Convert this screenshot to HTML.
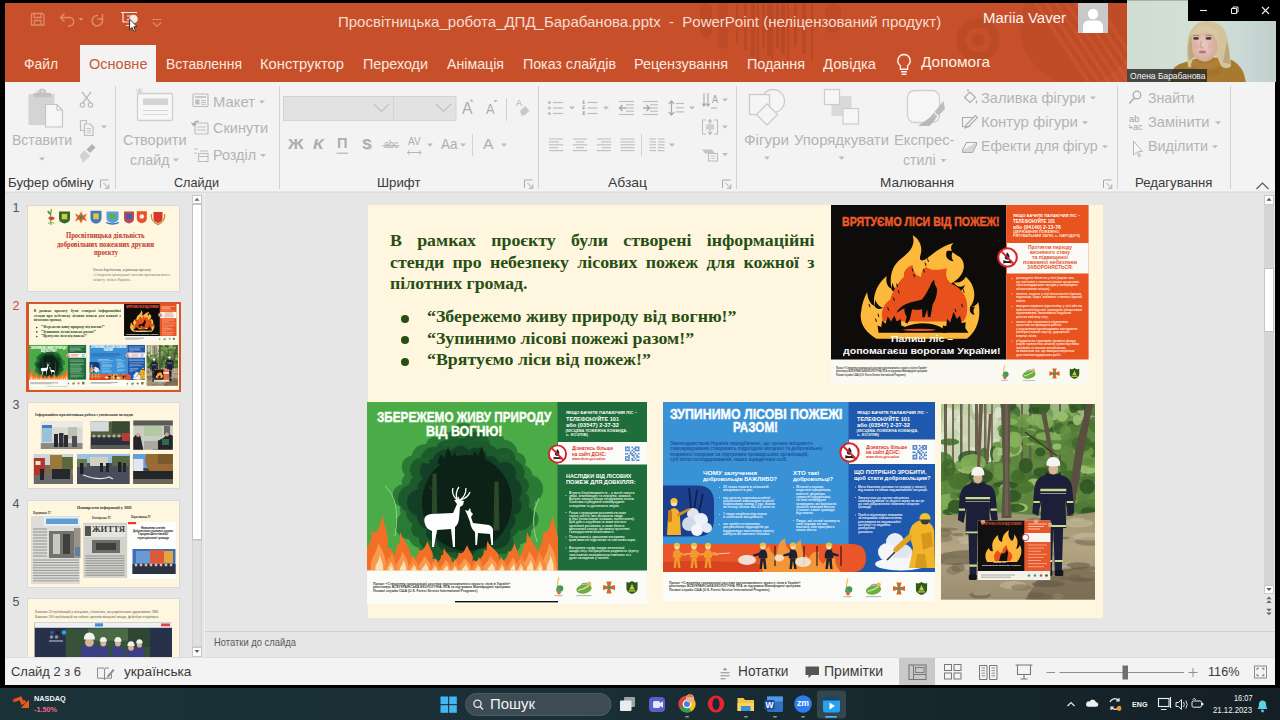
<!DOCTYPE html>
<html lang="uk"><head><meta charset="utf-8"><title>PowerPoint</title>
<style>
html,body{margin:0;padding:0}
body{width:1280px;height:720px;background:#000;position:relative;overflow:hidden;font-family:"Liberation Sans",sans-serif}
.t{position:absolute;white-space:nowrap;transform-origin:0 50%;display:block}
.b{position:absolute;display:block;overflow:hidden}
svg text{font-family:"Liberation Sans",sans-serif}
</style></head>
<body>
<!-- sec_chrome -->
<div class="b" style="left:5.0px;top:3.0px;width:1270.0px;height:682.0px;background:#e6e6e6;"></div>
<div class="b" style="left:5.0px;top:3.0px;width:1270.0px;height:79.4px;background:#c7502b;"></div>
<svg class="b" style="left:640.0px;top:3.0px;" width="500" height="80" viewBox="0 0 500 80"><rect x="96" y="0" width="2" height="40" rx="1.5" fill="#a8401f" opacity=".45"/><rect x="104" y="0" width="3" height="47" rx="1.5" fill="#a8401f" opacity=".45"/><rect x="111" y="0" width="4" height="54" rx="1.5" fill="#a8401f" opacity=".45"/><rect x="117" y="0" width="2" height="61" rx="1.5" fill="#a8401f" opacity=".45"/><rect x="122" y="0" width="3" height="46" rx="1.5" fill="#a8401f" opacity=".45"/><rect x="127" y="0" width="4" height="53" rx="1.5" fill="#a8401f" opacity=".45"/><rect x="131" y="0" width="2" height="60" rx="1.5" fill="#a8401f" opacity=".45"/><rect x="136" y="0" width="3" height="45" rx="1.5" fill="#a8401f" opacity=".45"/><rect x="141" y="0" width="4" height="52" rx="1.5" fill="#a8401f" opacity=".45"/><rect x="147" y="0" width="2" height="59" rx="1.5" fill="#a8401f" opacity=".45"/><rect x="154" y="0" width="3" height="44" rx="1.5" fill="#a8401f" opacity=".45"/><rect x="162" y="0" width="4" height="51" rx="1.5" fill="#a8401f" opacity=".45"/><rect x="171" y="0" width="2" height="58" rx="1.5" fill="#a8401f" opacity=".45"/><rect x="60" y="0" width="12" height="34" rx="6" fill="#a8401f" opacity=".35"/><rect x="78" y="0" width="10" height="46" rx="5" fill="#a8401f" opacity=".3"/><rect x="185" y="0" width="16" height="30" rx="8" fill="#a8401f" opacity=".3"/><circle cx="338" cy="37" r="17" fill="none" stroke="#b1441f" stroke-width="9" opacity=".5"/><circle cx="338" cy="37" r="6.500" fill="#b1441f" opacity=".5"/><circle cx="438" cy="24" r="58" fill="#b54722" opacity=".42"/><path d="M392 -6 L452 84" stroke="#d8623a" stroke-width="3.500" opacity=".35"/><path d="M402 -6 L462 84" stroke="#d8623a" stroke-width="3.500" opacity=".35"/><path d="M412 -6 L472 84" stroke="#d8623a" stroke-width="3.500" opacity=".35"/><path d="M422 -6 L482 84" stroke="#d8623a" stroke-width="3.500" opacity=".35"/><path d="M432 -6 L492 84" stroke="#d8623a" stroke-width="3.500" opacity=".35"/><path d="M442 -6 L502 84" stroke="#d8623a" stroke-width="3.500" opacity=".35"/><path d="M452 -6 L512 84" stroke="#d8623a" stroke-width="3.500" opacity=".35"/></svg>
<span class="t" style="left:338.0px;top:13.2px;font:400 15px/18.0px 'Liberation Sans', sans-serif;color:#f6dccf;white-space:pre;">Просвітницька_робота_ДПД_Барабанова.pptx  -  PowerPoint (неліцензований продукт)</span>
<span class="t" style="left:983.0px;top:8.9px;font:400 15.5px/18.6px 'Liberation Sans', sans-serif;color:#fdf3ee;transform:scaleX(0.967);">Mariia Vaver</span>
<div class="b" style="left:1078.0px;top:3.0px;width:30.0px;height:30.0px;background:#c9c9c9;"></div>
<svg class="b" style="left:1078.0px;top:3.0px;" width="30" height="30" viewBox="0 0 30 30"><circle cx="15" cy="11" r="5.2" fill="#fff"/><path d="M5 30 V24 Q5 17.5 11 17.5 H19 Q25 17.5 25 24 V30 Z" fill="#fff"/></svg>
<svg class="b" style="left:5.0px;top:3.0px;" width="170" height="40" viewBox="0 0 170 40"><path d="M26.5 10.5 h11 l1.5 1.5 v10 h-12.5 z M29 10.5 v4 h7 v-4 M29.5 22 v-4.5 h6.5 v4.5" fill="none" stroke="#e08a6a" stroke-width="1.3"/><path d="M56 14.5 h8.5 a4.2 4.2 0 0 1 0 8.4 h-1.5 M59.5 10.5 l-4 4 l4 4" fill="none" stroke="#e08a6a" stroke-width="1.5"/><path d="M73.5 15 h5 l-2.5 3 z" fill="#e08a6a"/><path d="M97.5 11 v5 h-5 M97 15.5 a5.2 5.2 0 1 1 -4 -3" fill="none" stroke="#e08a6a" stroke-width="1.5"/><path d="M116 9.5 h16 M118 10 v9 h6 M122 13 h6 v3.5 h-6 M121 22.5 h6" fill="none" stroke="#f7e6dc" stroke-width="1.2"/><circle cx="128.5" cy="16" r="4.3" fill="#f7e6dc"/><path d="M124.6 16.2 l0 10.6 l2.5 -2.3 l1.7 3.9 l1.7 -0.8 l-1.7 -3.8 l3.3 -0.2 z" fill="#fff" stroke="#222" stroke-width="0.9"/><path d="M147.5 16.5 h9 M148 19.5 l4 4 l4 -4" fill="none" stroke="#e08a6a" stroke-width="1.2"/></svg>
<div class="b" style="left:80.0px;top:44.5px;width:76.0px;height:38.5px;background:#f3f3f3;"></div>
<span class="t" style="left:24.0px;top:56.1px;font:400 14.6px/17.5px 'Liberation Sans', sans-serif;color:#fbe9e0;transform:scaleX(0.947);">Файл</span>
<span class="t" style="left:166.0px;top:56.1px;font:400 14.6px/17.5px 'Liberation Sans', sans-serif;color:#fbe9e0;transform:scaleX(0.953);">Вставлення</span>
<span class="t" style="left:260.0px;top:56.1px;font:400 14.6px/17.5px 'Liberation Sans', sans-serif;color:#fbe9e0;transform:scaleX(1.009);">Конструктор</span>
<span class="t" style="left:363.0px;top:56.1px;font:400 14.6px/17.5px 'Liberation Sans', sans-serif;color:#fbe9e0;transform:scaleX(0.983);">Переходи</span>
<span class="t" style="left:447.0px;top:56.1px;font:400 14.6px/17.5px 'Liberation Sans', sans-serif;color:#fbe9e0;transform:scaleX(0.971);">Анімація</span>
<span class="t" style="left:523.0px;top:56.1px;font:400 14.6px/17.5px 'Liberation Sans', sans-serif;color:#fbe9e0;transform:scaleX(0.973);">Показ слайдів</span>
<span class="t" style="left:634.0px;top:56.1px;font:400 14.6px/17.5px 'Liberation Sans', sans-serif;color:#fbe9e0;transform:scaleX(0.988);">Рецензування</span>
<span class="t" style="left:747.0px;top:56.1px;font:400 14.6px/17.5px 'Liberation Sans', sans-serif;color:#fbe9e0;transform:scaleX(0.984);">Подання</span>
<span class="t" style="left:823.0px;top:56.1px;font:400 14.6px/17.5px 'Liberation Sans', sans-serif;color:#fbe9e0;transform:scaleX(1.010);">Довідка</span>
<span class="t" style="left:88.5px;top:56.1px;font:400 14.6px/17.5px 'Liberation Sans', sans-serif;color:#c55a35;transform:scaleX(0.995);">Основне</span>
<span class="t" style="left:921.0px;top:53.5px;font:400 14.6px/17.5px 'Liberation Sans', sans-serif;color:#fdf1ea;transform:scaleX(1.054);">Допомога</span>
<svg class="b" style="left:895.0px;top:52.0px;" width="18" height="26" viewBox="0 0 18 26"><path d="M9 2.5 a6.2 6.2 0 0 1 3.6 11.2 v3.6 h-7.2 v-3.6 A6.2 6.2 0 0 1 9 2.5 z M6 19.8 h6 M6.6 22.2 h4.8" fill="none" stroke="#fdf1ea" stroke-width="1.4"/></svg>
<svg class="b" style="left:1126.5px;top:0.0px;" width="149" height="82.4" viewBox="0 0 149 82"><defs><linearGradient id="cw" x1="0" x2="1"><stop offset="0" stop-color="#cfddd1"/><stop offset=".45" stop-color="#d3e0d6"/><stop offset=".75" stop-color="#cbdad6"/><stop offset="1" stop-color="#c0cfcc"/></linearGradient>
<radialGradient id="cf" cx=".45" cy=".45" r=".6"><stop offset="0" stop-color="#ecccc0"/><stop offset="1" stop-color="#d2a898"/></radialGradient></defs>
<rect width="149" height="82" fill="url(#cw)"/>
<path d="M43 82 Q43 68 52 64 L70 58 L96 57 Q112 60 117 74 L119 82 Z" fill="#a87a30"/>
<path d="M61 66 Q58 40 64 30 Q70 20 82 21 Q96 22 100 36 Q103 50 104 66 Q100 70 94 66 L90 56 L66 58 L66 66 Q63 69 61 66 Z" fill="#d4c49c"/>
<path d="M62 60 Q60 44 64 34 L68 56 Z M100 40 Q103 52 103 64 L96 62 Z" fill="#b09a70" opacity=".7"/>
<ellipse cx="77.500" cy="46.500" rx="12.600" ry="15" fill="url(#cf)"/>
<path d="M64.500 42 Q64 28 76 26 Q90 25 92 40 Q86 31 76 32.500 Q68 34 64.500 42 Z" fill="#d8c9a2"/>
<path d="M66 59 Q77 68 90 58 L93 66 Q84 74 74 72 Q66 70 64 64 Z" fill="#b08036"/>
<path d="M64 64 Q76 74 94 65 L96 72 Q80 80 62 72 Z" fill="#9c6f2a" opacity=".55"/>
<ellipse cx="69" cy="38.200" rx="3" ry="1.300" fill="#4a3a40"/><ellipse cx="81.500" cy="38.200" rx="3" ry="1.300" fill="#4a3a40"/>
<path d="M65.500 35.800 q3.500 -1.600 6.500 -.4 M78.500 35.400 q3.500 -1.200 6.500 .4" stroke="#8a7460" stroke-width=".8" fill="none"/>
<path d="M74.500 41 q-1.500 5 -.5 6.500 q1.500 .8 3 0" stroke="#c09484" stroke-width=".9" fill="none"/>
<ellipse cx="75.500" cy="51.800" rx="3.600" ry="1.400" fill="#c07078"/>
<ellipse cx="70" cy="46" rx="3" ry="2" fill="#e0a8a0" opacity=".5"/><ellipse cx="84" cy="46" rx="3" ry="2" fill="#e0a8a0" opacity=".5"/></svg>
<div class="b" style="left:1126.5px;top:69.0px;width:80.5px;height:13.5px;background:rgba(40,40,38,.82);"></div>
<span class="t" style="left:1129.5px;top:70.2px;font:400 9.6px/11.5px 'Liberation Sans', sans-serif;color:#f4f4f4;transform:scaleX(0.883);">Олена Барабанова</span>
<div class="b" style="left:1188.0px;top:0.0px;width:92.0px;height:21.0px;background:#000;"></div>
<svg class="b" style="left:1188.0px;top:0.0px;" width="92" height="21" viewBox="0 0 92 21"><path d="M12 10.5 h7" stroke="#eee" stroke-width="1.1"/><path d="M43.5 8.5 h5 v5 h-5 z M45 8.5 v-1.5 h5 v5 h-1.5" fill="none" stroke="#eee" stroke-width="1"/><path d="M74 7 l7 7 M81 7 l-7 7" stroke="#eee" stroke-width="1.1"/></svg>
<!-- sec_ribbon -->
<div class="b" style="left:5.0px;top:82.4px;width:1270.0px;height:109.1px;background:#f3f3f3;"></div>
<div class="b" style="left:5.0px;top:191.5px;width:1270.0px;height:1.0px;background:#dcdcdc;"></div>
<svg class="b" style="left:0.0px;top:83.0px;" width="1280" height="109" viewBox="0 0 1280 109"><path d="M115.5 3 V106" stroke="#d2d2d2" stroke-width="1"/><path d="M279.5 3 V106" stroke="#d2d2d2" stroke-width="1"/><path d="M538.5 3 V106" stroke="#d2d2d2" stroke-width="1"/><path d="M736.5 3 V106" stroke="#d2d2d2" stroke-width="1"/><path d="M1117.5 3 V106" stroke="#d2d2d2" stroke-width="1"/><path d="M1230.5 3 V106" stroke="#d2d2d2" stroke-width="1"/><path d="M506.5 15 V38" stroke="#d2d2d2" stroke-width="1"/><path d="M472.5 51 V73" stroke="#d2d2d2" stroke-width="1"/><path d="M641.5 51 V73" stroke="#d2d2d2" stroke-width="1"/><path d="M28.5 11 h8 v-3.5 h3 v-2 h4 v2 h3 v3.5 h8 v31 h-26 z" fill="#d4d4d4"/><rect x="33.500" y="10" width="17.500" height="4.200" fill="#c2c2c2"/><rect x="39.500" y="6.299999999999997" width="6" height="4" fill="#c2c2c2"/><circle cx="42.500" cy="8.5" r="1.100" fill="#efefef"/><path d="M45.5 21.5 h11.5 l5.5 5.5 v17 h-17 z" fill="#f6f6f6" stroke="#c4c4c4" stroke-width="1.1"/><path d="M57 21.5 v5.5 h5.5" fill="none" stroke="#c4c4c4" stroke-width="1.1"/><path d="M82 9 l8.5 11 M91 9 l-8.5 11" stroke="#bdbdbd" stroke-width="1.3"/><circle cx="82.5" cy="22" r="2.2" fill="none" stroke="#bdbdbd" stroke-width="1.2"/><circle cx="90.5" cy="22" r="2.2" fill="none" stroke="#bdbdbd" stroke-width="1.2"/><path d="M80.5 37.5 h6 v3 M80.5 37.5 v10 h3.5" fill="none" stroke="#bdbdbd" stroke-width="1.2"/><path d="M84.5 41 h5.5 l3 3 v8.5 h-8.5 z" fill="none" stroke="#bdbdbd" stroke-width="1.2"/><path d="M86.5 45.5 h4.5" stroke="#bdbdbd" stroke-width="0.9"/><path d="M86.5 47.7 h4.5" stroke="#bdbdbd" stroke-width="0.9"/><path d="M86.5 49.9 h4.5" stroke="#bdbdbd" stroke-width="0.9"/><path d="M101 42.5 h6 l-3 3.2 z" fill="#bcbcbc"/><path d="M79.500 72.5 l5 -5.500 l6 5.500 l-7.500 7.500 z" fill="#d2d2d2"/><path d="M86.500 66.5 l5.500 -5.500 l3.500 3.500 l-5.500 5.500 z" fill="#b2b2b2"/><path d="M85 67.5 l5.500 5" stroke="#f3f3f3" stroke-width="1"/><path d="M39 74.5 h6 l-3 3.2 z" fill="#bcbcbc"/><rect x="137.5" y="10.5" width="35" height="27" rx="1.5" fill="#f7f7f7" stroke="#cfcfcf" stroke-width="1.3"/><rect x="143" y="15.5" width="25" height="6.5" fill="#d4d4d4"/><path d="M143 27.5 h25 M143 31.5 h25" stroke="#d9d9d9" stroke-width="1.2"/><path d="M139.5 4.5 v7 M136 8 h7 M137 5.5 l5 5 M142 5.5 l-5 5" stroke="#cfcfcf" stroke-width="1"/><path d="M173 75.5 h6 l-3 3.2 z" fill="#bcbcbc"/><rect x="193" y="11" width="15" height="12.5" rx="1" fill="none" stroke="#bdbdbd" stroke-width="1.2"/><path d="M195 14 h11" stroke="#bdbdbd" stroke-width="1.6"/><rect x="195.3" y="16.5" width="4.2" height="5" fill="#bdbdbd"/><path d="M201 17.5 h5" stroke="#bdbdbd" stroke-width="0.9"/><path d="M201 19.4 h5" stroke="#bdbdbd" stroke-width="0.9"/><path d="M201 21.3 h5" stroke="#bdbdbd" stroke-width="0.9"/><path d="M259 17.5 h6 l-3 3.2 z" fill="#bcbcbc"/><rect x="195" y="40" width="13" height="11" rx="1" fill="none" stroke="#bdbdbd" stroke-width="1.2"/><path d="M197 44 h9 M197 47 h9" stroke="#bdbdbd" stroke-width="0.9"/><path d="M199 38.5 a4 4 0 0 0 -5.5 3.5 M191.5 39.5 l2 3 l3 -2" fill="none" stroke="#a8a8a8" stroke-width="1.2"/><path d="M194 66 h4 M200 68 h8 M194 70 h3" stroke="#bdbdbd" stroke-width="1"/><rect x="198.5" y="70.5" width="9.5" height="8" fill="none" stroke="#bdbdbd" stroke-width="1.1"/><path d="M198.5 73.5 h9.5" stroke="#bdbdbd" stroke-width="1"/><path d="M260 71.0 h6 l-3 3.2 z" fill="#bcbcbc"/><rect x="283.5" y="13.5" width="110" height="24" fill="#e2e2e2" stroke="#d3d3d3"/><rect x="393.5" y="13.5" width="62.5" height="24" fill="#e2e2e2" stroke="#d3d3d3"/><path d="M374 21 l7.5 7.5 l7.5 -7.5 M436 21 l7.5 7.5 l7.5 -7.5" fill="none" stroke="#bfbfbf" stroke-width="1.1"/><path d="M469.5 18.5 l2 -2.4 l2 2.4 z M493.5 17 l2 2.4 l2 -2.4 z" fill="#b5b5b5"/><path d="M520 28 l5 -5 l4.5 4.5 l-5 5 h-3 z" fill="#c9c9c9"/><path d="M427 60.5 h6 l-3 3.2 z" fill="#bcbcbc"/><path d="M460 60.5 h6 l-3 3.2 z" fill="#bcbcbc"/><path d="M501 60.5 h6 l-3 3.2 z" fill="#bcbcbc"/><path d="M407.5 69.5 h13.5 M409.5 67.30000000000001 l-2.3 2.2 l2.3 2.2 M419 67.30000000000001 l2.3 2.2 l-2.3 2.2" fill="none" stroke="#b5b5b5" stroke-width="1"/><path d="M382 62.80000000000001 h17.5" stroke="#b5b5b5" stroke-width="1"/><path d="M336.5 70.19999999999999 h11.5" stroke="#b5b5b5" stroke-width="1.2"/><circle cx="549.3" cy="19.5" r="1.5" fill="#bdbdbd"/><path d="M553 19.5 h10" stroke="#bdbdbd" stroke-width="1.2"/><path d="M587.5 19.5 h10" stroke="#bdbdbd" stroke-width="1.2"/><path d="M583.3 18.0 v3" stroke="#a9a9a9" stroke-width="1"/><circle cx="549.3" cy="25.0" r="1.5" fill="#bdbdbd"/><path d="M553 25.0 h10" stroke="#bdbdbd" stroke-width="1.2"/><path d="M587.5 25.0 h10" stroke="#bdbdbd" stroke-width="1.2"/><path d="M583.3 23.5 v3" stroke="#a9a9a9" stroke-width="1"/><circle cx="549.3" cy="30.5" r="1.5" fill="#bdbdbd"/><path d="M553 30.5 h10" stroke="#bdbdbd" stroke-width="1.2"/><path d="M587.5 30.5 h10" stroke="#bdbdbd" stroke-width="1.2"/><path d="M583.3 29.0 v3" stroke="#a9a9a9" stroke-width="1"/><path d="M569 23.5 h6 l-3 3.2 z" fill="#bcbcbc"/><path d="M603 23.5 h6 l-3 3.2 z" fill="#bcbcbc"/><path d="M689 23.5 h6 l-3 3.2 z" fill="#bcbcbc"/><path d="M619 18.5 h15" stroke="#bdbdbd" stroke-width="1.1"/><path d="M626 21.799999999999997 h8" stroke="#bdbdbd" stroke-width="1.1"/><path d="M626 24.999999999999996 h8" stroke="#bdbdbd" stroke-width="1.1"/><path d="M626 28.199999999999996 h8" stroke="#bdbdbd" stroke-width="1.1"/><path d="M619 31.5 h15" stroke="#bdbdbd" stroke-width="1.1"/><path d="M643 18.5 h15" stroke="#bdbdbd" stroke-width="1.1"/><path d="M650 21.799999999999997 h8" stroke="#bdbdbd" stroke-width="1.1"/><path d="M650 24.999999999999996 h8" stroke="#bdbdbd" stroke-width="1.1"/><path d="M650 28.199999999999996 h8" stroke="#bdbdbd" stroke-width="1.1"/><path d="M643 31.5 h15" stroke="#bdbdbd" stroke-width="1.1"/><path d="M626 25 h-6.5 m3 -3 l-3 3 l3 3" fill="none" stroke="#a9a9a9" stroke-width="1.4"/><path d="M643 25 h6.5 m-3 -3 l3 3 l-3 3" fill="none" stroke="#a9a9a9" stroke-width="1.4"/><path d="M671.5 18 v14 m-2.6 -11 l2.6 -3 l2.6 3 m-5.2 8 l2.6 3 l2.6 -3" fill="none" stroke="#a9a9a9" stroke-width="1.2"/><path d="M676 20.5 h8" stroke="#bdbdbd" stroke-width="1.2"/><path d="M676 24.7 h8" stroke="#bdbdbd" stroke-width="1.2"/><path d="M676 28.9 h8" stroke="#bdbdbd" stroke-width="1.2"/><path d="M704 10 v13 m-1.8 -2.4 l1.8 2.4 l1.8 -2.4 M708 10 v13 m-1.8 -2.4 l1.8 2.4 l1.8 -2.4 M711 25 h6" fill="none" stroke="#a9a9a9" stroke-width="1.1"/><path d="M722 15.5 h6 l-3 3.2 z" fill="#bcbcbc"/><path d="M722 42.5 h6 l-3 3.2 z" fill="#bcbcbc"/><path d="M722 70.0 h6 l-3 3.2 z" fill="#bcbcbc"/><path d="M706 37 h-3.5 v14 h3.5 M714 37 h3.5 v14 h-3.5" fill="none" stroke="#bdbdbd" stroke-width="1.1"/><rect x="706" y="41.5" width="8" height="5" fill="#cfcfcf"/><path d="M710 36.5 v5 m-2 -2.6 l2 -2.4 l2 2.4 M710 51.5 v-5 m-2 2.6 l2 2.4 l2 -2.4" fill="none" stroke="#a9a9a9" stroke-width="1"/><path d="M702 66.5 h10 l3 4 h-10 z" fill="#c4c4c4"/><rect x="708.5" y="70.5" width="9" height="7.5" fill="#f6f6f6" stroke="#bdbdbd" stroke-width="1.1"/><path d="M710.5 73 h5 M710.5 75.30000000000001 h5" stroke="#bdbdbd" stroke-width=".8"/><path d="M549 56.0 h14" stroke="#bdbdbd" stroke-width="1.1"/><path d="M549 58.9 h10" stroke="#bdbdbd" stroke-width="1.1"/><path d="M549 61.8 h14" stroke="#bdbdbd" stroke-width="1.1"/><path d="M549 64.7 h9" stroke="#bdbdbd" stroke-width="1.1"/><path d="M549 67.6 h14" stroke="#bdbdbd" stroke-width="1.1"/><path d="M573.0 56.0 h14" stroke="#bdbdbd" stroke-width="1.1"/><path d="M575.5 58.9 h9" stroke="#bdbdbd" stroke-width="1.1"/><path d="M573.0 61.8 h14" stroke="#bdbdbd" stroke-width="1.1"/><path d="M576.0 64.7 h8" stroke="#bdbdbd" stroke-width="1.1"/><path d="M573.0 67.6 h14" stroke="#bdbdbd" stroke-width="1.1"/><path d="M597 56.0 h14" stroke="#bdbdbd" stroke-width="1.1"/><path d="M601 58.9 h10" stroke="#bdbdbd" stroke-width="1.1"/><path d="M597 61.8 h14" stroke="#bdbdbd" stroke-width="1.1"/><path d="M602 64.7 h9" stroke="#bdbdbd" stroke-width="1.1"/><path d="M597 67.6 h14" stroke="#bdbdbd" stroke-width="1.1"/><path d="M620.5 56.0 h14" stroke="#bdbdbd" stroke-width="1.1"/><path d="M620.5 58.9 h14" stroke="#bdbdbd" stroke-width="1.1"/><path d="M620.5 61.8 h14" stroke="#bdbdbd" stroke-width="1.1"/><path d="M620.5 64.7 h14" stroke="#bdbdbd" stroke-width="1.1"/><path d="M620.5 67.6 h14" stroke="#bdbdbd" stroke-width="1.1"/><path d="M649.5 56.0 h6.5" stroke="#bdbdbd" stroke-width="1.1"/><path d="M649.5 58.9 h6.5" stroke="#bdbdbd" stroke-width="1.1"/><path d="M649.5 61.8 h6.5" stroke="#bdbdbd" stroke-width="1.1"/><path d="M649.5 64.7 h6.5" stroke="#bdbdbd" stroke-width="1.1"/><path d="M649.5 67.6 h6.5" stroke="#bdbdbd" stroke-width="1.1"/><path d="M658 56.0 h6.5" stroke="#bdbdbd" stroke-width="1.1"/><path d="M658 58.9 h6.5" stroke="#bdbdbd" stroke-width="1.1"/><path d="M658 61.8 h6.5" stroke="#bdbdbd" stroke-width="1.1"/><path d="M658 64.7 h6.5" stroke="#bdbdbd" stroke-width="1.1"/><path d="M658 67.6 h6.5" stroke="#bdbdbd" stroke-width="1.1"/><path d="M669 60.5 h6 l-3 3.2 z" fill="#bcbcbc"/><circle cx="773" cy="18" r="11.5" fill="#f5f5f5" stroke="#d0cacc" stroke-width="1.3"/><rect x="749.5" y="11.5" width="20" height="20" fill="#f5f5f5" stroke="#d0cacc" stroke-width="1.3"/><path d="M767 21 l10.5 10.5 l-10.5 10.5 l-10.5 -10.5 z" fill="#f5f5f5" stroke="#d0cacc" stroke-width="1.3"/><rect x="831.5" y="13" width="20" height="20" fill="#d9d9d9"/><rect x="824.5" y="6.5" width="15" height="15" fill="#f6f6f6" stroke="#cdcdcd" stroke-width="1.2"/><rect x="843" y="25.5" width="15.5" height="15.5" fill="#f6f6f6" stroke="#cdcdcd" stroke-width="1.2"/><rect x="907.5" y="7.5" width="32" height="32" rx="7" fill="#f6f6f6" stroke="#d0d0d0" stroke-width="1.3"/><path d="M943.5 18 l1.5 8 l-12 12 l-6 0 z" fill="#bdbdbd"/><path d="M932 33 l3.5 3.5 l-6 6.5 h-11.5 z" fill="#b9b9b9"/><path d="M934.5 29.5 l4 4" stroke="#f3f3f3" stroke-width="1.2"/><path d="M764 73.5 h6 l-3 3.2 z" fill="#bcbcbc"/><path d="M838.5 73.5 h6 l-3 3.2 z" fill="#bcbcbc"/><path d="M940.5 76.0 h6 l-3 3.2 z" fill="#bcbcbc"/><path d="M964.5 14.5 l5.5 -5.5 l5.5 5.5 l-5.5 5 z M968 9 v-3" fill="none" stroke="#ababab" stroke-width="1.1"/><path d="M976.5 17 q1.5 2.5 0 3.5 q-1.5 -1 0 -3.5" fill="#ababab"/><path d="M974 34.5 h-11.5 v9 h8 M966 42 l9.5 -9.5 l2 2 l-9.5 9.5 l-3 1 z" fill="none" stroke="#ababab" stroke-width="1.1"/><path d="M962.5 67 l4 -7.5 h10 l-4 7.5 z" fill="#f7f7f7" stroke="#ababab" stroke-width="1.1"/><path d="M962.5 67 v2.5 h10 l4 -7.5 v-2.5" fill="#d6d6d6" stroke="#ababab" stroke-width="1"/><path d="M1090 13.5 h6 l-3 3.2 z" fill="#bcbcbc"/><path d="M1082 38.2 h6 l-3 3.2 z" fill="#bcbcbc"/><path d="M1102 62.19999999999999 h6 l-3 3.2 z" fill="#bcbcbc"/><circle cx="1137" cy="12" r="3.8" fill="none" stroke="#ababab" stroke-width="1.3"/><path d="M1134.3 15 l-5 5.5" stroke="#ababab" stroke-width="1.5"/><path d="M1133.5 58 v14 l3.2 -3 l2.2 4.8 l1.6 -.8 l-2.2 -4.6 h4.2 z" fill="#f8f8f8" stroke="#b5b5b5" stroke-width="1"/><path d="M1215 38.2 h6 l-3 3.2 z" fill="#bcbcbc"/><path d="M1212 62.19999999999999 h6 l-3 3.2 z" fill="#bcbcbc"/><path d="M1256.5 106 l6 -6 l6 6" fill="none" stroke="#555" stroke-width="1.1"/><path d="M100.5 105 v-8 h8 M103.5 100 l5 5 M108.8 101.3 v4 h-4" fill="none" stroke="#a9a9a9" stroke-width="1"/><path d="M524.5 105 v-8 h8 M527.5 100 l5 5 M532.8 101.3 v4 h-4" fill="none" stroke="#a9a9a9" stroke-width="1"/><path d="M722.5 105 v-8 h8 M725.5 100 l5 5 M730.8 101.3 v4 h-4" fill="none" stroke="#a9a9a9" stroke-width="1"/><path d="M1103.5 105 v-8 h8 M1106.5 100 l5 5 M1111.8 101.3 v4 h-4" fill="none" stroke="#a9a9a9" stroke-width="1"/></svg>
<span class="t" style="left:12.0px;top:131.2px;font:400 15px/18.0px 'Liberation Sans', sans-serif;color:#b4b4b4;transform:scaleX(0.935);">Вставити</span>
<span class="t" style="left:122.5px;top:131.2px;font:400 15px/18.0px 'Liberation Sans', sans-serif;color:#b4b4b4;transform:scaleX(0.965);">Створити</span>
<span class="t" style="left:130.0px;top:151.2px;font:400 15px/18.0px 'Liberation Sans', sans-serif;color:#b4b4b4;transform:scaleX(0.946);">слайд</span>
<span class="t" style="left:213.0px;top:92.7px;font:400 15px/18.0px 'Liberation Sans', sans-serif;color:#b4b4b4;transform:scaleX(0.989);">Макет</span>
<span class="t" style="left:213.0px;top:119.2px;font:400 15px/18.0px 'Liberation Sans', sans-serif;color:#b4b4b4;transform:scaleX(0.968);">Скинути</span>
<span class="t" style="left:213.0px;top:146.2px;font:400 15px/18.0px 'Liberation Sans', sans-serif;color:#b4b4b4;transform:scaleX(0.958);">Розділ</span>
<span class="t" style="left:744.0px;top:131.2px;font:400 15px/18.0px 'Liberation Sans', sans-serif;color:#b4b4b4;transform:scaleX(1.017);">Фігури</span>
<span class="t" style="left:793.5px;top:131.2px;font:400 15px/18.0px 'Liberation Sans', sans-serif;color:#b4b4b4;transform:scaleX(0.993);">Упорядкувати</span>
<span class="t" style="left:893.5px;top:131.2px;font:400 15px/18.0px 'Liberation Sans', sans-serif;color:#b4b4b4;transform:scaleX(0.983);">Експрес-</span>
<span class="t" style="left:903.0px;top:151.2px;font:400 15px/18.0px 'Liberation Sans', sans-serif;color:#b4b4b4;transform:scaleX(0.933);">стилі</span>
<span class="t" style="left:980.5px;top:88.7px;font:400 15px/18.0px 'Liberation Sans', sans-serif;color:#b4b4b4;transform:scaleX(0.976);">Заливка фігури</span>
<span class="t" style="left:980.5px;top:113.2px;font:400 15px/18.0px 'Liberation Sans', sans-serif;color:#b4b4b4;transform:scaleX(0.995);">Контур фігури</span>
<span class="t" style="left:980.5px;top:137.2px;font:400 15px/18.0px 'Liberation Sans', sans-serif;color:#b4b4b4;transform:scaleX(0.944);">Ефекти для фігур</span>
<span class="t" style="left:1147.5px;top:88.7px;font:400 15px/18.0px 'Liberation Sans', sans-serif;color:#b4b4b4;transform:scaleX(0.943);">Знайти</span>
<span class="t" style="left:1147.5px;top:113.2px;font:400 15px/18.0px 'Liberation Sans', sans-serif;color:#b4b4b4;transform:scaleX(0.977);">Замінити</span>
<span class="t" style="left:1147.5px;top:137.2px;font:400 15px/18.0px 'Liberation Sans', sans-serif;color:#b4b4b4;transform:scaleX(0.955);">Виділити</span>
<span class="t" style="left:7.5px;top:174.8px;font:400 13.6px/16.3px 'Liberation Sans', sans-serif;color:#3b3b3b;transform:scaleX(0.982);">Буфер обміну</span>
<span class="t" style="left:174.0px;top:174.8px;font:400 13.6px/16.3px 'Liberation Sans', sans-serif;color:#3b3b3b;transform:scaleX(0.929);">Слайди</span>
<span class="t" style="left:376.5px;top:174.8px;font:400 13.6px/16.3px 'Liberation Sans', sans-serif;color:#3b3b3b;transform:scaleX(0.972);">Шрифт</span>
<span class="t" style="left:608.0px;top:174.8px;font:400 13.6px/16.3px 'Liberation Sans', sans-serif;color:#3b3b3b;transform:scaleX(1.023);">Абзац</span>
<span class="t" style="left:880.0px;top:174.8px;font:400 13.6px/16.3px 'Liberation Sans', sans-serif;color:#3b3b3b;">Малювання</span>
<span class="t" style="left:1134.5px;top:174.8px;font:400 13.6px/16.3px 'Liberation Sans', sans-serif;color:#3b3b3b;transform:scaleX(0.969);">Редагування</span>
<span class="t" style="left:461.5px;top:98.5px;font:400 17px/20.4px 'Liberation Sans', sans-serif;color:#adadad;transform:scaleX(0.926);">A</span>
<span class="t" style="left:485.5px;top:101.3px;font:400 14px/16.8px 'Liberation Sans', sans-serif;color:#adadad;transform:scaleX(0.910);">A</span>
<span class="t" style="left:516.0px;top:98.4px;font:400 9px/10.8px 'Liberation Sans', sans-serif;color:#adadad;">A</span>
<span class="t" style="left:287.5px;top:135.2px;font:700 15px/18.0px 'Liberation Sans', sans-serif;color:#adadad;transform:scaleX(1.143);">Ж</span>
<span class="t" style="left:313.0px;top:135.2px;font:italic 700 15px/18.0px 'Liberation Sans', sans-serif;color:#adadad;transform:scaleX(1.137);">К</span>
<span class="t" style="left:337.0px;top:134.8px;font:700 14px/16.8px 'Liberation Sans', sans-serif;color:#adadad;transform:scaleX(1.043);">П</span>
<span class="t" style="left:361.5px;top:134.9px;font:700 15.5px/18.6px 'Liberation Sans', sans-serif;color:#adadad;transform:scaleX(0.918);text-shadow:1px 1px 0 #d6d6d6;">S</span>
<span class="t" style="left:383.5px;top:137.9px;font:400 11.5px/13.8px 'Liberation Sans', sans-serif;color:#adadad;transform:scaleX(0.782);">abc</span>
<span class="t" style="left:408.0px;top:134.7px;font:400 11px/13.2px 'Liberation Sans', sans-serif;color:#adadad;transform:scaleX(0.902);">AV</span>
<span class="t" style="left:440.5px;top:135.2px;font:400 15px/18.0px 'Liberation Sans', sans-serif;color:#adadad;transform:scaleX(0.899);">Aa</span>
<span class="t" style="left:482.5px;top:135.2px;font:400 15px/18.0px 'Liberation Sans', sans-serif;color:#adadad;transform:scaleX(1.048);">A</span>
<span class="t" style="left:1128.5px;top:112.6px;font:400 9.5px/11.4px 'Liberation Sans', sans-serif;color:#a5a5a5;transform:scaleX(0.993);">ab</span>
<span class="t" style="left:1133.0px;top:120.6px;font:400 9.5px/11.4px 'Liberation Sans', sans-serif;color:#a5a5a5;transform:scaleX(0.946);">ac</span>
<span class="t" style="left:1127.5px;top:122.7px;font:400 7px/8.4px 'Liberation Sans', sans-serif;color:#a5a5a5;transform:scaleX(0.917);font-family:'DejaVu Sans',sans-serif;">↳</span>
<span class="t" style="left:582.0px;top:98.8px;font:400 6px/7.2px 'Liberation Sans', sans-serif;color:#a5a5a5;transform:scaleX(1.047);">1</span>
<span class="t" style="left:582.0px;top:104.3px;font:400 6px/7.2px 'Liberation Sans', sans-serif;color:#a5a5a5;transform:scaleX(1.047);">2</span>
<span class="t" style="left:582.0px;top:109.8px;font:400 6px/7.2px 'Liberation Sans', sans-serif;color:#a5a5a5;transform:scaleX(1.047);">3</span>
<span class="t" style="left:711.5px;top:92.7px;font:400 11px/13.2px 'Liberation Sans', sans-serif;color:#a5a5a5;transform:scaleX(0.817);">A</span>
<!-- sec_panes -->
<div class="b" style="left:203.5px;top:192.5px;width:1.5px;height:465.5px;background:#efefef;"></div>
<div class="b" style="left:192.0px;top:204.0px;width:10.0px;height:443.0px;background:#fff;border:1px solid #cfcfcf;box-sizing:border-box;"></div>
<div class="b" style="left:192.0px;top:204.0px;width:10.0px;height:336.0px;background:#fff;border:1px solid #c2c2c2;box-sizing:border-box;"></div>
<div class="b" style="left:192.0px;top:540.0px;width:10.0px;height:107.0px;background:#e0e0e0;border:1px solid #d2d2d2;box-sizing:border-box;"></div>
<div class="b" style="left:192.0px;top:194.5px;width:10.0px;height:9.5px;background:#fdfdfd;border:1px solid #c8c8c8;box-sizing:border-box;"></div>
<div class="b" style="left:192.0px;top:647.0px;width:10.0px;height:9.5px;background:#fdfdfd;border:1px solid #c8c8c8;box-sizing:border-box;"></div>
<svg class="b" style="left:192.0px;top:194.0px;" width="10" height="464" viewBox="0 0 10 464"><path d="M2.5 6.8 h5 l-2.5 -3 z M2.5 456 h5 l-2.5 3 z" fill="#666"/></svg>
<svg class="b" style="left:28.0px;top:206.0px;outline:1px solid #d9d9d9;" width="151" height="85" viewBox="0 0 151 85"><rect width="151" height="85" fill="#fef6df"/><path d="M23 19 q-1.500 -8 .5 -16" stroke="#6aa84f" stroke-width="1.200" fill="none"/><path d="M20 12 q3.500 -3 7 0 q-3.500 4.500 -7 0z" fill="#d2433a"/><path d="M23 9 q-4 -1 -3.500 -4.500 q3.500 .5 3.500 4.500z" fill="#5a9a3a"/><path d="M20 17.500 q3 -2 6 0" stroke="#8ab85a" stroke-width="1.200" fill="none"/><path d="M31 5.5 h11 v7.199999999999999 q0 3.5999999999999996 -5.5 4.800000000000001 q-5.5 -1.2000000000000002 -5.5 -4.800000000000001z" fill="#2f6b2c"/><rect x="33.75" y="7.9" width="5.5" height="5.4" fill="#d9c24a"/><path d="M53 5.500 l2 4 l4 -2 l-2 4 l2 4 l-4 -2 l-2 4 l-2 -4 l-4 2 l2 -4 l-2 -4 l4 2z" fill="#e5622a"/><circle cx="53" cy="11.500" r="2" fill="#3f8a5a"/><path d="M62.5 4.8 h11 v7.8 q0 3.9 -5.5 5.2 q-5.5 -1.3 -5.5 -5.2z" fill="#3f78c2"/><rect x="65.25" y="7.4" width="5.5" height="5.8500000000000005" fill="#e9c53a"/><path d="M78.5 5.5 h12 v6.8999999999999995 q0 3.4499999999999997 -6.0 4.6000000000000005 q-6.0 -1.1500000000000001 -6.0 -4.6000000000000005z" fill="#5aa0d8"/><rect x="81.5" y="7.800000000000001" width="6.0" height="5.175" fill="#5fae4c"/><path d="M78 16.500 q6.500 3 13 0" stroke="#2f6fb8" stroke-width="1.300" fill="none"/><path d="M96 5.5 h10 v7.199999999999999 q0 3.5999999999999996 -5.0 4.800000000000001 q-5.0 -1.2000000000000002 -5.0 -4.800000000000001z" fill="#b94a5a"/><rect x="98.5" y="7.9" width="5.0" height="5.4" fill="#3f5fa8"/><path d="M108.8 5.3 h10 v7.199999999999999 q0 3.5999999999999996 -5.0 4.800000000000001 q-5.0 -1.2000000000000002 -5.0 -4.800000000000001z" fill="#f04e23"/><circle cx="113.800" cy="10.500" r="2.300" fill="#e8eef6"/><path d="M125.5 6 h9 v6.6 q0 3.3 -4.5 4.4 q-4.5 -1.1 -4.5 -4.4z" fill="#d8352c"/><path d="M123.500 8 q-1.500 7 6.500 10.500 q8 -3.500 6.500 -10.500" stroke="#b59a3a" stroke-width="1.400" fill="none"/></svg>
<div class="b" style="left:26.0px;top:301.5px;width:155.0px;height:90.5px;background:#d4562b;"></div>
<div class="b" style="left:28.5px;top:304px;width:150.5px;height:85.5px;background:#fef6df"><div style="position:absolute;left:0;top:0;width:735px;height:413px;transform:scale(.2048,.207);transform-origin:0 0;"><div style="position:absolute;left:-367.5px;top:-205px;"><div class="b" style="left:367.5px;top:205.0px;width:735.0px;height:413.0px;background:#fef6df;box-shadow:0 0 0 1px #e9e6dc;"></div>
<div class="t" style="left:390px;top:230.8px;width:409.0px;display:flex;justify-content:space-between;transform:scaleX(1.038);font:700 17.2px/20.6px 'Liberation Serif', serif;color:#274e13;"><span>В</span><span>рамках</span><span>проєкту</span><span>були</span><span>створені</span><span>інформаційні</span></div>
<div class="t" style="left:390px;top:252.9px;width:409.0px;display:flex;justify-content:space-between;transform:scaleX(1.038);font:700 17.2px/20.6px 'Liberation Serif', serif;color:#274e13;"><span>стенди</span><span>про</span><span>небезпеку</span><span>лісових</span><span>пожеж</span><span>для</span><span>кожної</span><span>з</span></div>
<span class="t" style="left:390.0px;top:273.8px;font:700 17.2px/20.6px 'Liberation Serif', serif;color:#274e13;transform:scaleX(1.037);">пілотних громад.</span>
<span class="t" style="left:426.5px;top:307.2px;font:700 17.2px/20.6px 'Liberation Serif', serif;color:#274e13;transform:scaleX(1.040);">“Збережемо живу природу від вогню!”</span>
<div class="b" style="left:401.0px;top:314.8px;width:8.2px;height:8.2px;background:#274e13;border-radius:50%;"></div>
<span class="t" style="left:426.5px;top:328.7px;font:700 17.2px/20.6px 'Liberation Serif', serif;color:#274e13;transform:scaleX(1.037);">“Зупинимо лісові пожежі разом!”</span>
<div class="b" style="left:401.0px;top:336.3px;width:8.2px;height:8.2px;background:#274e13;border-radius:50%;"></div>
<span class="t" style="left:426.5px;top:350.2px;font:700 17.2px/20.6px 'Liberation Serif', serif;color:#274e13;transform:scaleX(1.039);">“Врятуємо ліси від пожеж!”</span>
<div class="b" style="left:401.0px;top:357.8px;width:8.2px;height:8.2px;background:#274e13;border-radius:50%;"></div>
<svg class="b" style="left:831.4px;top:205.0px;" width="257.6" height="180" viewBox="0 0 257.6 180"><rect width="257.6" height="180" fill="#fbfaf2"/><rect width="175.2" height="154.5" fill="#0d0c0b"/><rect x="175.2" width="82.40000000000003" height="154.5" fill="#e9531f"/><g transform="translate(18.600 23) scale(0.16242)"><path d="M165 682 C95 640 55 580 72 510 C78 460 92 425 108 395 C112 440 128 468 152 478 C142 410 170 345 228 295 C222 335 232 362 256 372 C246 290 262 232 318 188 C352 160 412 118 388 45 C432 70 452 118 436 168 C428 195 436 208 462 196 C500 176 540 120 640 92 C612 120 622 150 668 172 C722 200 716 290 640 332 C668 342 700 330 716 300 C772 350 786 430 742 486 C762 490 780 476 792 456 C812 540 790 630 722 682 Z" fill="#fdb93c"/><path d="M600 140 C585 170 600 200 640 205 C625 185 625 160 640 140 Z" fill="#0d0c0b"/><path d="M640 332 C610 345 600 375 625 395 C660 410 700 390 710 350 C690 370 660 365 640 332Z" fill="#0d0c0b"/><path d="M152 478 C165 500 190 505 205 490 C185 485 165 470 160 440Z" fill="#0d0c0b"/><path d="M256 372 C262 395 285 400 300 385 C280 380 268 360 265 335Z" fill="#0d0c0b"/><path d="M742 486 C735 510 745 530 770 535 C760 520 760 500 772 485Z" fill="#0d0c0b"/><path d="M205 575 C188 520 205 470 250 440 C262 400 290 340 335 300 C330 270 350 240 388 228 C392 270 410 296 440 300 C440 270 452 250 470 240 C500 262 540 262 600 248 C585 290 600 330 640 350 C700 380 735 440 722 520 C720 545 712 560 700 575 Z" fill="#e8501c"/><path d="M290 345 l5 16" stroke="#0d0c0b" stroke-width="6" stroke-linecap="round"/><path d="M300 385 l5 16" stroke="#0d0c0b" stroke-width="6" stroke-linecap="round"/><path d="M270 430 l5 16" stroke="#0d0c0b" stroke-width="6" stroke-linecap="round"/><path d="M235 490 l5 16" stroke="#0d0c0b" stroke-width="6" stroke-linecap="round"/><path d="M175 530 l5 16" stroke="#0d0c0b" stroke-width="6" stroke-linecap="round"/><path d="M160 560 l5 16" stroke="#0d0c0b" stroke-width="6" stroke-linecap="round"/><path d="M385 250 l5 16" stroke="#0d0c0b" stroke-width="6" stroke-linecap="round"/><path d="M395 285 l5 16" stroke="#0d0c0b" stroke-width="6" stroke-linecap="round"/><path d="M465 215 l5 16" stroke="#0d0c0b" stroke-width="6" stroke-linecap="round"/><path d="M455 255 l5 16" stroke="#0d0c0b" stroke-width="6" stroke-linecap="round"/><path d="M700 380 l5 16" stroke="#0d0c0b" stroke-width="6" stroke-linecap="round"/><path d="M690 470 l5 16" stroke="#0d0c0b" stroke-width="6" stroke-linecap="round"/><path d="M650 500 l5 16" stroke="#0d0c0b" stroke-width="6" stroke-linecap="round"/><path d="M480 190 l5 16" stroke="#0d0c0b" stroke-width="6" stroke-linecap="round"/><path d="M120 470 l5 16" stroke="#0d0c0b" stroke-width="6" stroke-linecap="round"/><path d="M178 645 L172 600 L195 610 L200 570 L222 590 L235 545 L255 575 L275 540 L290 575 L315 560 L318 600 L342 610 L338 645 Z" fill="#0d0c0b"/><path d="M568 645 L575 600 L595 605 L600 560 L620 580 L640 515 L660 560 L680 540 L690 585 L715 580 L712 615 L732 645 Z" fill="#0d0c0b"/><path d="M300 645 C340 575 540 560 600 645 Z" fill="#0d0c0b"/><path d="M288 522 C300 500 320 480 345 470 C380 452 420 450 445 440 C470 410 490 370 505 335 L520 318 L524 345 L538 372 C540 410 530 440 512 470 L498 548 L482 548 L478 500 L462 550 L448 550 L446 498 C430 505 400 505 385 500 L372 560 L356 588 L342 582 L352 545 C340 530 335 510 338 495 C320 500 305 512 288 522 Z" fill="#0d0c0b"/><ellipse cx="430" cy="627" rx="100" ry="7" fill="#e8501c"/></g><rect x="176" y="38" width="81.60000000000002" height="30.5" fill="#fbfaf6"/><circle cx="176.5" cy="52.5" r="9.3" fill="#fff" stroke="#d8232a" stroke-width="2.05"/><path d="M176.19 47.126666666666665 q3.5133333333333336 3.306666666666667 1.6533333333333335 6.82 q-1.6533333333333335 1.5500000000000003 -3.5133333333333336 0 q-1.6533333333333335 -2.686666666666667 1.0333333333333334 -4.133333333333334 q-0.2066666666666667 -1.4466666666666668 0.8266666666666668 -2.686666666666667z" fill="#222"/><path d="M172.16 56.013333333333335 l8.680000000000001 1.8600000000000003 M180.84 56.013333333333335 l-8.680000000000001 1.8600000000000003" stroke="#222" stroke-width="1.34"/><path d="M170.176 46.176 L182.824 58.824" stroke="#d8232a" stroke-width="1.86"/><circle cx="181" cy="73.5" r=".6" fill="#ffd9c6"/><circle cx="181" cy="89" r=".6" fill="#ffd9c6"/><circle cx="181" cy="101.5" r=".6" fill="#ffd9c6"/><circle cx="181" cy="117" r=".6" fill="#ffd9c6"/><circle cx="181" cy="136" r=".6" fill="#ffd9c6"/><path d="M172.65 171.05 q-0.425 -6.8 1.275 -11.049999999999999" stroke="#efc36a" stroke-width="1.105" fill="none"/><circle cx="174.775" cy="169.35" r="2.8049999999999997" fill="#3f9a5c"/><circle cx="173.075" cy="170.625" r="1.7" fill="#4aa866"/><circle cx="173.925" cy="172.75" r="1.615" fill="#e2643c"/><rect x="170.1" y="174.875" width="6.8" height="1.105" fill="#b9c4c0"/><circle cx="202.25" cy="165.525" r="2.04" fill="#f3b46a"/><ellipse cx="198" cy="169.775" rx="6.63" ry="3.9099999999999997" fill="#6fae3c" transform="rotate(-12 198 169.775)"/><path d="M192.9 171.05 q5.1 -0.85 9.35 -4.25" stroke="#d9ecc0" stroke-width="0.935" fill="none"/><path d="M195.45 165.95 q2.55 -1.7 5.1 -0.85" stroke="#7a8fb8" stroke-width="0.85" fill="none"/><rect x="191.625" y="174.96" width="12.75" height="0.85" fill="#a9b4b0"/><path d="M221.29 163.4 h4.42 l-1.105 3.995 l3.995 -1.105 v4.42 l-3.995 -1.105 l1.105 3.995 h-4.42 l1.105 -3.995 l-3.995 1.105 v-4.42 l3.995 1.105z" fill="#d46a22"/><circle cx="223.5" cy="168.5" r="1.7" fill="#4a8f8c"/><path d="M238.74 163.825 q2.38 1.02 4.76 -0.85 q2.38 1.87 4.76 0.85 v5.5249999999999995 q0 2.975 -4.76 4.675 q-4.76 -1.7 -4.76 -4.675z" fill="#2d5a1e"/><path d="M243.5 165.525 l2.21 4.675 h-4.42z" fill="#c9cb45"/><rect x="240.525" y="170.88" width="5.95" height="1.02" fill="#c9cb45"/></svg>
<span class="t" style="left:842.3px;top:214.1px;font:700 13px/15.6px 'Liberation Sans', sans-serif;color:#ee5a2a;transform:scaleX(0.814);-webkit-text-stroke:.5px #ee5a2a;">ВРЯТУЄМО ЛІСИ ВІД ПОЖЕЖ!</span>
<span class="t" style="left:891.0px;top:333.8px;font:700 9.3px/11.2px 'Liberation Sans', sans-serif;color:#fafafa;transform:scaleX(1.123);">Палиш ліс –</span>
<span class="t" style="left:842.5px;top:345.5px;font:700 9.3px/11.2px 'Liberation Sans', sans-serif;color:#fafafa;transform:scaleX(1.139);">допомагаєш ворогам України!</span>
<i class="b" style="left:1013px;top:215px;width:67px;height:2.5px;background:#fff;opacity:.55"></i><i class="b" style="left:1013px;top:220px;width:42px;height:3.2px;background:#fff;opacity:.55"></i><i class="b" style="left:1013px;top:225px;width:48px;height:3.2px;background:#fff;opacity:.55"></i><i class="b" style="left:1013px;top:231px;width:47px;height:2.2px;background:#ffe5d8;opacity:.55"></i><i class="b" style="left:1013px;top:235px;width:67px;height:2.2px;background:#ffe5d8;opacity:.55"></i><i class="b" style="left:1028px;top:246px;width:44px;height:3.0px;background:#e4532a;opacity:.55"></i><i class="b" style="left:1030px;top:251px;width:40px;height:3.0px;background:#e4532a;opacity:.55"></i><i class="b" style="left:1032px;top:256px;width:36px;height:3.0px;background:#e4532a;opacity:.55"></i><i class="b" style="left:1023px;top:261px;width:54px;height:3.0px;background:#e4532a;opacity:.55"></i><i class="b" style="left:1027px;top:266px;width:46px;height:3.0px;background:#e4532a;opacity:.55"></i><i class="b" style="left:1016px;top:277px;width:58px;height:2.0px;background:#ffe6da;opacity:.55"></i><i class="b" style="left:1016px;top:281px;width:63px;height:2.0px;background:#ffe6da;opacity:.55"></i><i class="b" style="left:1016px;top:284px;width:62px;height:2.0px;background:#ffe6da;opacity:.55"></i><i class="b" style="left:1016px;top:288px;width:34px;height:2.0px;background:#ffe6da;opacity:.55"></i><i class="b" style="left:1016px;top:293px;width:66px;height:2.0px;background:#ffe6da;opacity:.55"></i><i class="b" style="left:1016px;top:296px;width:66px;height:2.0px;background:#ffe6da;opacity:.55"></i><i class="b" style="left:1016px;top:300px;width:10px;height:2.0px;background:#ffe6da;opacity:.55"></i><i class="b" style="left:1016px;top:305px;width:66px;height:2.0px;background:#ffe6da;opacity:.55"></i><i class="b" style="left:1016px;top:309px;width:66px;height:2.0px;background:#ffe6da;opacity:.55"></i><i class="b" style="left:1016px;top:312px;width:55px;height:2.0px;background:#ffe6da;opacity:.55"></i><i class="b" style="left:1016px;top:316px;width:32px;height:2.0px;background:#ffe6da;opacity:.55"></i><i class="b" style="left:1016px;top:321px;width:52px;height:2.0px;background:#ffe6da;opacity:.55"></i><i class="b" style="left:1016px;top:324px;width:45px;height:2.0px;background:#ffe6da;opacity:.55"></i><i class="b" style="left:1016px;top:328px;width:62px;height:2.0px;background:#ffe6da;opacity:.55"></i><i class="b" style="left:1016px;top:331px;width:53px;height:2.0px;background:#ffe6da;opacity:.55"></i><i class="b" style="left:1016px;top:335px;width:21px;height:2.0px;background:#ffe6da;opacity:.55"></i><i class="b" style="left:1016px;top:340px;width:60px;height:2.0px;background:#ffe6da;opacity:.55"></i><i class="b" style="left:1016px;top:343px;width:63px;height:2.0px;background:#ffe6da;opacity:.55"></i><i class="b" style="left:1016px;top:347px;width:50px;height:2.0px;background:#ffe6da;opacity:.55"></i><i class="b" style="left:1016px;top:350px;width:58px;height:2.0px;background:#ffe6da;opacity:.55"></i><i class="b" style="left:1016px;top:354px;width:45px;height:2.0px;background:#ffe6da;opacity:.55"></i><i class="b" style="left:836px;top:368px;width:91px;height:1.9px;background:#3c3c3c;opacity:.55"></i><i class="b" style="left:836px;top:371px;width:91px;height:1.9px;background:#3c3c3c;opacity:.55"></i><i class="b" style="left:836px;top:375px;width:70px;height:1.9px;background:#3c3c3c;opacity:.55"></i><svg class="b" style="left:367.0px;top:402.0px;" width="280.0" height="202.0" viewBox="0 0 280.0 202.0"><rect width="280.0" height="202.0" fill="#fbfbf7"/><rect width="191" height="168.5" fill="#4aab47"/><rect x="190.5" width="89.5" height="168.5" fill="#1f6d3a"/><defs><clipPath id="gclip"><rect width="191" height="168.5"/></clipPath></defs><g clip-path="url(#gclip)"><circle cx="100" cy="98" r="60" fill="#2a7a36"/><circle cx="43.8" cy="80.0" r="9.0" fill="#2a7a36"/><circle cx="46.3" cy="65.0" r="11.5" fill="#2a7a36"/><circle cx="58.6" cy="56.0" r="14.0" fill="#2a7a36"/><circle cx="67.8" cy="43.8" r="9.0" fill="#2a7a36"/><circle cx="82.9" cy="41.5" r="11.5" fill="#2a7a36"/><circle cx="96.7" cy="35.1" r="14.0" fill="#2a7a36"/><circle cx="111.1" cy="40.0" r="9.0" fill="#2a7a36"/><circle cx="126.3" cy="40.8" r="11.5" fill="#2a7a36"/><circle cx="136.7" cy="51.8" r="14.0" fill="#2a7a36"/><circle cx="149.9" cy="59.5" r="9.0" fill="#2a7a36"/><circle cx="154.0" cy="74.2" r="11.5" fill="#2a7a36"/><circle cx="162.1" cy="87.1" r="14.0" fill="#2a7a36"/><circle cx="158.9" cy="102.0" r="9.0" fill="#2a7a36"/><circle cx="160.0" cy="117.2" r="11.5" fill="#2a7a36"/><circle cx="150.3" cy="128.9" r="14.0" fill="#2a7a36"/><circle cx="144.2" cy="142.9" r="9.0" fill="#2a7a36"/><circle cx="130.1" cy="148.7" r="11.5" fill="#2a7a36"/><circle cx="118.3" cy="158.3" r="14.0" fill="#2a7a36"/><circle cx="103.1" cy="156.9" r="9.0" fill="#2a7a36"/><circle cx="88.2" cy="159.9" r="11.5" fill="#2a7a36"/><circle cx="75.4" cy="151.6" r="14.0" fill="#2a7a36"/><circle cx="60.8" cy="147.3" r="9.0" fill="#2a7a36"/><circle cx="53.3" cy="134.0" r="11.5" fill="#2a7a36"/><circle cx="42.4" cy="123.4" r="14.0" fill="#2a7a36"/><circle cx="41.9" cy="108.2" r="9.0" fill="#2a7a36"/><circle cx="37.1" cy="93.7" r="11.5" fill="#2a7a36"/><circle cx="100" cy="98" r="52" fill="#1c5a2b"/><circle cx="91.7" cy="148.3" r="9.0" fill="#1c5a2b"/><circle cx="76.1" cy="147.5" r="11.5" fill="#1c5a2b"/><circle cx="65.8" cy="135.8" r="14.0" fill="#1c5a2b"/><circle cx="53.1" cy="126.8" r="9.0" fill="#1c5a2b"/><circle cx="50.8" cy="111.3" r="11.5" fill="#1c5a2b"/><circle cx="45.0" cy="96.8" r="14.0" fill="#1c5a2b"/><circle cx="51.4" cy="82.6" r="9.0" fill="#1c5a2b"/><circle cx="54.4" cy="67.3" r="11.5" fill="#1c5a2b"/><circle cx="67.4" cy="58.8" r="14.0" fill="#1c5a2b"/><circle cx="78.2" cy="47.5" r="9.0" fill="#1c5a2b"/><circle cx="93.8" cy="47.4" r="11.5" fill="#1c5a2b"/><circle cx="109.0" cy="43.7" r="14.0" fill="#1c5a2b"/><circle cx="122.2" cy="52.1" r="9.0" fill="#1c5a2b"/><circle cx="136.9" cy="57.2" r="11.5" fill="#1c5a2b"/><circle cx="143.5" cy="71.3" r="14.0" fill="#1c5a2b"/><circle cx="153.1" cy="83.6" r="9.0" fill="#1c5a2b"/><circle cx="151.0" cy="99.1" r="11.5" fill="#1c5a2b"/><circle cx="152.4" cy="114.6" r="14.0" fill="#1c5a2b"/><circle cx="142.3" cy="126.5" r="9.0" fill="#1c5a2b"/><circle cx="135.1" cy="140.3" r="11.5" fill="#1c5a2b"/><circle cx="120.2" cy="144.8" r="14.0" fill="#1c5a2b"/><circle cx="106.7" cy="152.6" r="9.0" fill="#1c5a2b"/><circle cx="100" cy="98" r="43" fill="#143f27"/><circle cx="123.3" cy="63.1" r="9.0" fill="#143f27"/><circle cx="137.6" cy="71.5" r="11.5" fill="#143f27"/><circle cx="140.8" cy="87.9" r="14.0" fill="#143f27"/><circle cx="145.6" cy="103.8" r="9.0" fill="#143f27"/><circle cx="136.9" cy="118.0" r="11.5" fill="#143f27"/><circle cx="129.8" cy="133.0" r="14.0" fill="#143f27"/><circle cx="113.8" cy="137.7" r="9.0" fill="#143f27"/><circle cx="98.4" cy="144.0" r="11.5" fill="#143f27"/><circle cx="83.5" cy="136.6" r="14.0" fill="#143f27"/><circle cx="67.9" cy="130.9" r="9.0" fill="#143f27"/><circle cx="61.8" cy="115.4" r="11.5" fill="#143f27"/><circle cx="54.1" cy="100.7" r="14.0" fill="#143f27"/><circle cx="60.0" cy="85.1" r="9.0" fill="#143f27"/><circle cx="64.3" cy="69.0" r="11.5" fill="#143f27"/><circle cx="79.1" cy="61.6" r="14.0" fill="#143f27"/><circle cx="93.1" cy="52.5" r="9.0" fill="#143f27"/><circle cx="109.1" cy="57.0" r="11.5" fill="#143f27"/><path d="M76 44 l3 -9 l2 4 l3 -11 l3 8 l3 -6 l3 14z M108 40 l3 -8 l3 5 l3 -9 l3 12z M52 60 l3 -8 l3 6 l2 -5 l3 9z M132 56 l3 -7 l3 5 l3 -6 l2 9z" fill="#1d5f2c"/><ellipse cx="100" cy="101" rx="45" ry="48" fill="#0d2216"/><path d="M70 62 l4 -10 l3 5 l4 -12 l4 10 l3 -5 l4 12z M104 58 l4 -9 l3 5 l4 -10 l4 14z" fill="#0d2216"/><path d="M66 72 l3 0 l1 60 l-5 0z M62 84 l6 6 M128 80 l3 0 l1 48 l-5 0z" fill="#2a4a2c" stroke="#2a4a2c"/><path d="M18 84 q16 14 10 50 M172 96 q-10 20 -2 44" stroke="#8fd08a" stroke-width="1" fill="none"/><path d="M-1.5 170 C-8.2 150.1 6.6 144.3 4.4 129.0 C10.7 134.7 12.8 121.6 16.1 113.0 C16.6 124.4 23.3 134.7 20.1 146.1 C25.5 144.3 28.7 152.9 25.5 170 Z" fill="#f36f28"/><path d="M4.4 170 C1.2 155.8 10.7 152.9 10.7 140.4 C15.2 147.2 20.1 155.8 19.0 170 Z" fill="#f89a4e"/><path d="M8.8 170 C6.6 162.0 12.5 160.9 12.5 152.9 C14.7 158.6 16.9 163.2 15.8 170 Z" fill="#fde0b4"/><path d="M25.0 170 C19.5 156.0 31.6 152.0 29.8 141.2 C34.9 145.2 31.2 136.0 33.8 130.0 C34.2 138.0 45.2 145.2 42.6 153.2 C47.0 152.0 49.6 158.0 47.0 170 Z" fill="#f36f28"/><path d="M29.8 170 C27.2 160.0 34.9 158.0 34.9 149.2 C38.6 154.0 42.6 160.0 41.7 170 Z" fill="#f89a4e"/><path d="M33.4 170 C31.6 164.4 36.4 163.6 36.4 158.0 C38.2 162.0 40.0 165.2 39.1 170 Z" fill="#fde0b4"/><path d="M46.0 170 C40.0 159.2 53.2 156.1 51.3 147.7 C56.8 150.8 58.0 143.7 60.9 139.0 C61.4 145.2 68.1 150.8 65.2 157.0 C70.0 156.1 72.9 160.7 70.0 170 Z" fill="#f36f28"/><path d="M51.3 170 C48.4 162.2 56.8 160.7 56.8 153.9 C60.9 157.6 65.2 162.2 64.2 170 Z" fill="#f89a4e"/><path d="M55.1 170 C53.2 165.7 58.5 165.0 58.5 160.7 C60.4 163.8 62.3 166.3 61.4 170 Z" fill="#fde0b4"/><path d="M70.0 170 C65.5 161.6 75.4 159.2 74.0 152.7 C78.1 155.1 75.0 149.6 77.2 146.0 C77.6 150.8 86.6 155.1 84.4 159.9 C88.0 159.2 90.2 162.8 88.0 170 Z" fill="#f36f28"/><path d="M74.0 170 C71.8 164.0 78.1 162.8 78.1 157.5 C81.2 160.4 84.4 164.0 83.7 170 Z" fill="#f89a4e"/><path d="M76.8 170 C75.4 166.6 79.4 166.2 79.4 162.8 C80.8 165.2 82.2 167.1 81.5 170 Z" fill="#fde0b4"/><path d="M86.0 170 C80.0 160.6 93.2 157.8 91.3 150.6 C96.8 153.3 97.5 147.1 100.4 143.0 C100.9 148.4 108.1 153.3 105.2 158.7 C110.0 157.8 112.9 161.9 110.0 170 Z" fill="#f36f28"/><path d="M91.3 170 C88.4 163.2 96.8 161.9 96.8 156.0 C100.9 159.2 105.2 163.2 104.2 170 Z" fill="#f89a4e"/><path d="M95.1 170 C93.2 166.2 98.5 165.7 98.5 161.9 C100.4 164.6 102.3 166.8 101.4 170 Z" fill="#fde0b4"/><path d="M111.0 170 C104.5 159.2 118.8 156.1 116.7 147.7 C122.7 150.8 117.8 143.7 120.9 139.0 C121.4 145.2 134.9 150.8 131.8 157.0 C137.0 156.1 140.1 160.7 137.0 170 Z" fill="#f36f28"/><path d="M116.7 170 C113.6 162.2 122.7 160.7 122.7 153.9 C127.1 157.6 131.8 162.2 130.8 170 Z" fill="#f89a4e"/><path d="M120.9 170 C118.8 165.7 124.5 165.0 124.5 160.7 C126.6 163.8 128.7 166.3 127.6 170 Z" fill="#fde0b4"/><path d="M137.0 170 C132.5 159.8 142.4 156.9 141.0 149.1 C145.1 152.0 145.6 145.3 147.8 141.0 C148.2 146.8 153.6 152.0 151.4 157.8 C155.0 156.9 157.2 161.3 155.0 170 Z" fill="#f36f28"/><path d="M141.0 170 C138.8 162.8 145.1 161.3 145.1 154.9 C148.2 158.4 151.4 162.8 150.7 170 Z" fill="#f89a4e"/><path d="M143.8 170 C142.4 165.9 146.4 165.4 146.4 161.3 C147.8 164.2 149.2 166.5 148.5 170 Z" fill="#fde0b4"/><path d="M151.5 170 C145.8 156.0 158.4 152.0 156.6 141.2 C161.8 145.2 157.9 136.0 160.7 130.0 C161.2 138.0 172.7 145.2 169.9 153.2 C174.5 152.0 177.3 158.0 174.5 170 Z" fill="#f36f28"/><path d="M156.6 170 C153.8 160.0 161.8 158.0 161.8 149.2 C165.8 154.0 169.9 160.0 169.0 170 Z" fill="#f89a4e"/><path d="M160.2 170 C158.4 164.4 163.5 163.6 163.5 158.0 C165.3 162.0 167.1 165.2 166.2 170 Z" fill="#fde0b4"/><path d="M170.5 170 C164.2 150.1 178.0 144.3 176.0 129.0 C181.8 134.7 183.0 121.6 186.0 113.0 C186.5 124.4 193.5 134.7 190.5 146.1 C195.5 144.3 198.5 152.9 195.5 170 Z" fill="#f36f28"/><path d="M176.0 170 C173.0 155.8 181.8 152.9 181.8 140.4 C186.0 147.2 190.5 155.8 189.5 170 Z" fill="#f89a4e"/><path d="M180.0 170 C178.0 162.0 183.5 160.9 183.5 152.9 C185.5 158.6 187.5 163.2 186.5 170 Z" fill="#fde0b4"/><path d="M18.0 170 C15.0 163.0 21.6 161.0 20.6 155.6 C23.4 157.6 23.8 153.0 25.2 150.0 C25.4 154.0 29.0 157.6 27.6 161.6 C30.0 161.0 31.4 164.0 30.0 170 Z" fill="#f58a3a"/><path d="M20.6 170 C19.2 165.0 23.4 164.0 23.4 159.6 C25.4 162.0 27.6 165.0 27.1 170 Z" fill="#fbc58a"/><path d="M22.6 170 C21.6 167.2 24.2 166.8 24.2 164.0 C25.2 166.0 26.2 167.6 25.7 170 Z" fill="#fdebc8"/><path d="M41.5 170 C38.8 164.4 44.8 162.8 43.9 158.5 C46.5 160.1 44.6 156.4 45.9 154.0 C46.1 157.2 51.6 160.1 50.3 163.3 C52.5 162.8 53.8 165.2 52.5 170 Z" fill="#f58a3a"/><path d="M43.9 170 C42.6 166.0 46.5 165.2 46.5 161.7 C48.3 163.6 50.3 166.0 49.9 170 Z" fill="#fbc58a"/><path d="M45.7 170 C44.8 167.8 47.2 167.4 47.2 165.2 C48.1 166.8 49.0 168.1 48.5 170 Z" fill="#fdebc8"/><path d="M63.0 170 C60.5 165.1 66.0 163.7 65.2 159.9 C67.5 161.3 67.8 158.1 69.0 156.0 C69.2 158.8 72.2 161.3 71.0 164.1 C73.0 163.7 74.2 165.8 73.0 170 Z" fill="#f58a3a"/><path d="M65.2 170 C64.0 166.5 67.5 165.8 67.5 162.7 C69.2 164.4 71.0 166.5 70.6 170 Z" fill="#fbc58a"/><path d="M66.8 170 C66.0 168.0 68.2 167.8 68.2 165.8 C69.0 167.2 69.8 168.3 69.4 170 Z" fill="#fdebc8"/><path d="M83.0 170 C80.5 165.4 86.0 164.2 85.2 160.6 C87.5 161.9 86.8 158.9 88.0 157.0 C88.2 159.6 92.2 161.9 91.0 164.5 C93.0 164.2 94.2 166.1 93.0 170 Z" fill="#f58a3a"/><path d="M85.2 170 C84.0 166.8 87.5 166.1 87.5 163.2 C89.2 164.8 91.0 166.8 90.6 170 Z" fill="#fbc58a"/><path d="M86.8 170 C86.0 168.2 88.2 167.9 88.2 166.1 C89.0 167.4 89.8 168.4 89.4 170 Z" fill="#fdebc8"/><path d="M105.5 170 C102.8 164.8 108.8 163.2 107.9 159.2 C110.5 160.7 110.8 157.2 112.1 155.0 C112.3 158.0 115.6 160.7 114.3 163.7 C116.5 163.2 117.8 165.5 116.5 170 Z" fill="#f58a3a"/><path d="M107.9 170 C106.6 166.2 110.5 165.5 110.5 162.2 C112.3 164.0 114.3 166.2 113.9 170 Z" fill="#fbc58a"/><path d="M109.7 170 C108.8 167.9 111.2 167.6 111.2 165.5 C112.1 167.0 113.0 168.2 112.5 170 Z" fill="#fdebc8"/><path d="M130.0 170 C127.5 164.4 133.0 162.8 132.2 158.5 C134.5 160.1 132.8 156.4 134.0 154.0 C134.2 157.2 139.2 160.1 138.0 163.3 C140.0 162.8 141.2 165.2 140.0 170 Z" fill="#f58a3a"/><path d="M132.2 170 C131.0 166.0 134.5 165.2 134.5 161.7 C136.2 163.6 138.0 166.0 137.6 170 Z" fill="#fbc58a"/><path d="M133.8 170 C133.0 167.8 135.2 167.4 135.2 165.2 C136.0 166.8 136.8 168.1 136.4 170 Z" fill="#fdebc8"/><path d="M149.0 170 C146.5 164.1 152.0 162.3 151.2 157.8 C153.5 159.5 153.8 155.6 155.0 153.0 C155.2 156.4 158.2 159.5 157.0 162.9 C159.0 162.3 160.2 164.9 159.0 170 Z" fill="#f58a3a"/><path d="M151.2 170 C150.0 165.8 153.5 164.9 153.5 161.2 C155.2 163.2 157.0 165.8 156.6 170 Z" fill="#fbc58a"/><path d="M152.8 170 C152.0 167.6 154.2 167.3 154.2 164.9 C155.0 166.6 155.8 168.0 155.4 170 Z" fill="#fdebc8"/><path d="M167.5 170 C164.8 162.3 170.8 160.1 169.9 154.2 C172.4 156.4 170.6 151.3 171.9 148.0 C172.1 152.4 177.6 156.4 176.3 160.8 C178.5 160.1 179.8 163.4 178.5 170 Z" fill="#f58a3a"/><path d="M169.9 170 C168.6 164.5 172.4 163.4 172.4 158.6 C174.3 161.2 176.3 164.5 175.9 170 Z" fill="#fbc58a"/><path d="M171.7 170 C170.8 166.9 173.2 166.5 173.2 163.4 C174.1 165.6 175.0 167.4 174.5 170 Z" fill="#fdebc8"/><path d="M58 122 q-3 -9 6 -10 l22 -1 l4 -9 l-3 -4 l3 0 l1 -4 l2 4 l4 1 l-1 4 l-3 2 l-1 12 q-1 6 -4 8 l0 20 l-2 0 l-2 -18 l-14 1 l-3 17 l-2 0 l0 -16 q-6 -2 -7 -7z" fill="#fff"/><path d="M90 98 q-6 -6 -4 -12 m4 12 q-2 -8 2 -13 M93 98 q6 -4 6 -12 m-6 12 q8 -2 10 -8" stroke="#fff" stroke-width="1.3" fill="none"/><path d="M100 112 l-2 -4 l3 1 l2 -3 l1 4 l2 2 l-2 3 l2 6 l16 2 q5 2 4 8 l0 12 l-1.600 0 l-1.400 -11 l-12 -1 l-1 12 l-1.600 0 l-.4 -13 q-4 -3 -5 -10z" fill="#fff"/></g><rect y="168.5" width="191" height="6" fill="#fbfbf7"/><rect x="191" y="40" width="89.0" height="22.5" fill="#fbfbf7"/><circle cx="190.5" cy="52" r="8.6" fill="#fff" stroke="#d8232a" stroke-width="1.89"/><path d="M190.21333333333334 47.03111111111111 q3.2488888888888887 3.057777777777778 1.528888888888889 6.306666666666666 q-1.528888888888889 1.4333333333333331 -3.2488888888888887 0 q-1.528888888888889 -2.4844444444444442 0.9555555555555555 -3.822222222222222 q-0.19111111111111112 -1.3377777777777775 0.7644444444444445 -2.4844444444444442z" fill="#222"/><path d="M186.48666666666668 55.248888888888885 l8.026666666666667 1.72 M194.51333333333332 55.248888888888885 l-8.026666666666667 1.72" stroke="#222" stroke-width="1.24"/><path d="M184.652 46.152 L196.348 57.848" stroke="#d8232a" stroke-width="1.72"/><rect x="258" y="44.5" width="14.5" height="14.5" fill="#fff"/><rect x="258.00" y="44.50" width="1.61" height="1.61" fill="#4f86c6"/><rect x="259.61" y="44.50" width="1.61" height="1.61" fill="#4f86c6"/><rect x="261.22" y="44.50" width="1.61" height="1.61" fill="#4f86c6"/><rect x="264.44" y="44.50" width="1.61" height="1.61" fill="#4f86c6"/><rect x="267.67" y="44.50" width="1.61" height="1.61" fill="#4f86c6"/><rect x="269.28" y="44.50" width="1.61" height="1.61" fill="#4f86c6"/><rect x="270.89" y="44.50" width="1.61" height="1.61" fill="#4f86c6"/><rect x="258.00" y="46.11" width="1.61" height="1.61" fill="#4f86c6"/><rect x="261.22" y="46.11" width="1.61" height="1.61" fill="#4f86c6"/><rect x="266.06" y="46.11" width="1.61" height="1.61" fill="#4f86c6"/><rect x="267.67" y="46.11" width="1.61" height="1.61" fill="#4f86c6"/><rect x="270.89" y="46.11" width="1.61" height="1.61" fill="#4f86c6"/><rect x="258.00" y="47.72" width="1.61" height="1.61" fill="#4f86c6"/><rect x="259.61" y="47.72" width="1.61" height="1.61" fill="#4f86c6"/><rect x="261.22" y="47.72" width="1.61" height="1.61" fill="#4f86c6"/><rect x="264.44" y="47.72" width="1.61" height="1.61" fill="#4f86c6"/><rect x="267.67" y="47.72" width="1.61" height="1.61" fill="#4f86c6"/><rect x="269.28" y="47.72" width="1.61" height="1.61" fill="#4f86c6"/><rect x="270.89" y="47.72" width="1.61" height="1.61" fill="#4f86c6"/><rect x="262.83" y="49.33" width="1.61" height="1.61" fill="#4f86c6"/><rect x="266.06" y="49.33" width="1.61" height="1.61" fill="#4f86c6"/><rect x="258.00" y="50.94" width="1.61" height="1.61" fill="#4f86c6"/><rect x="259.61" y="50.94" width="1.61" height="1.61" fill="#4f86c6"/><rect x="262.83" y="50.94" width="1.61" height="1.61" fill="#4f86c6"/><rect x="264.44" y="50.94" width="1.61" height="1.61" fill="#4f86c6"/><rect x="267.67" y="50.94" width="1.61" height="1.61" fill="#4f86c6"/><rect x="270.89" y="50.94" width="1.61" height="1.61" fill="#4f86c6"/><rect x="261.22" y="52.56" width="1.61" height="1.61" fill="#4f86c6"/><rect x="264.44" y="52.56" width="1.61" height="1.61" fill="#4f86c6"/><rect x="266.06" y="52.56" width="1.61" height="1.61" fill="#4f86c6"/><rect x="269.28" y="52.56" width="1.61" height="1.61" fill="#4f86c6"/><rect x="258.00" y="54.17" width="1.61" height="1.61" fill="#4f86c6"/><rect x="259.61" y="54.17" width="1.61" height="1.61" fill="#4f86c6"/><rect x="261.22" y="54.17" width="1.61" height="1.61" fill="#4f86c6"/><rect x="266.06" y="54.17" width="1.61" height="1.61" fill="#4f86c6"/><rect x="269.28" y="54.17" width="1.61" height="1.61" fill="#4f86c6"/><rect x="270.89" y="54.17" width="1.61" height="1.61" fill="#4f86c6"/><rect x="258.00" y="55.78" width="1.61" height="1.61" fill="#4f86c6"/><rect x="261.22" y="55.78" width="1.61" height="1.61" fill="#4f86c6"/><rect x="264.44" y="55.78" width="1.61" height="1.61" fill="#4f86c6"/><rect x="267.67" y="55.78" width="1.61" height="1.61" fill="#4f86c6"/><rect x="258.00" y="57.39" width="1.61" height="1.61" fill="#4f86c6"/><rect x="259.61" y="57.39" width="1.61" height="1.61" fill="#4f86c6"/><rect x="261.22" y="57.39" width="1.61" height="1.61" fill="#4f86c6"/><rect x="264.44" y="57.39" width="1.61" height="1.61" fill="#4f86c6"/><rect x="266.06" y="57.39" width="1.61" height="1.61" fill="#4f86c6"/><rect x="269.28" y="57.39" width="1.61" height="1.61" fill="#4f86c6"/><rect x="270.89" y="57.39" width="1.61" height="1.61" fill="#4f86c6"/><circle cx="199" cy="93.5" r=".55" fill="#d8f0d8"/><circle cx="199" cy="110.5" r=".55" fill="#d8f0d8"/><circle cx="199" cy="135" r=".55" fill="#d8f0d8"/><circle cx="199" cy="146" r=".55" fill="#d8f0d8"/><rect x="88" y="199" width="103" height="1.400" fill="#111"/><path d="M190.5 188.5 q-0.5 -8.0 1.5 -13.0" stroke="#efc36a" stroke-width="1.3" fill="none"/><circle cx="193.0" cy="186.5" r="3.3" fill="#3f9a5c"/><circle cx="191.0" cy="188.0" r="2.0" fill="#4aa866"/><circle cx="192.0" cy="190.5" r="1.9" fill="#e2643c"/><rect x="187.5" y="193.0" width="8.0" height="1.3" fill="#b9c4c0"/><circle cx="222.0" cy="182.0" r="2.4" fill="#f3b46a"/><ellipse cx="217" cy="187.0" rx="7.8" ry="4.6" fill="#6fae3c" transform="rotate(-12 217 187.0)"/><path d="M211.0 188.5 q6.0 -1.0 11.0 -5.0" stroke="#d9ecc0" stroke-width="1.1" fill="none"/><path d="M214.0 182.5 q3.0 -2.0 6.0 -1.0" stroke="#7a8fb8" stroke-width="1.0" fill="none"/><rect x="209.5" y="193.1" width="15.0" height="1.0" fill="#a9b4b0"/><path d="M239.4 179.5 h5.2 l-1.3 4.7 l4.7 -1.3 v5.2 l-4.7 -1.3 l1.3 4.7 h-5.2 l1.3 -4.7 l-4.7 1.3 v-5.2 l4.7 1.3z" fill="#d46a22"/><circle cx="242" cy="185.5" r="2.0" fill="#4a8f8c"/><path d="M259.4 180.0 q2.8 1.2 5.6 -1.0 q2.8 2.2 5.6 1.0 v6.5 q0 3.5 -5.6 5.5 q-5.6 -2.0 -5.6 -5.5z" fill="#2d5a1e"/><path d="M265 182.0 l2.6 5.5 h-5.2z" fill="#c9cb45"/><rect x="261.5" y="188.3" width="7.0" height="1.2" fill="#c9cb45"/></svg>
<span class="t" style="left:376.5px;top:409.1px;font:700 14.6px/17.5px 'Liberation Sans', sans-serif;color:#fcfff8;transform:scaleX(0.803);-webkit-text-stroke:.45px #fcfff8;">ЗБЕРЕЖЕМО ЖИВУ ПРИРОДУ</span>
<span class="t" style="left:425.5px;top:422.9px;font:700 14.6px/17.5px 'Liberation Sans', sans-serif;color:#fcfff8;transform:scaleX(0.857);-webkit-text-stroke:.45px #fcfff8;">ВІД ВОГНЮ!</span>
<i class="b" style="left:566px;top:411px;width:71px;height:2.5px;background:#fff;opacity:.55"></i><i class="b" style="left:566px;top:417px;width:53px;height:3.4px;background:#fff;opacity:.55"></i><i class="b" style="left:566px;top:424px;width:53px;height:3.4px;background:#fff;opacity:.55"></i><i class="b" style="left:566px;top:430px;width:62px;height:2.3px;background:#e8f2ea;opacity:.55"></i><i class="b" style="left:566px;top:434px;width:22px;height:2.3px;background:#e8f2ea;opacity:.55"></i><i class="b" style="left:572px;top:447px;width:41px;height:3.1px;background:#e0342b;opacity:.55"></i><i class="b" style="left:572px;top:453px;width:34px;height:3.1px;background:#e0342b;opacity:.55"></i><i class="b" style="left:572px;top:459px;width:33px;height:1.9px;background:#e0342b;opacity:.55"></i><i class="b" style="left:566px;top:474px;width:66px;height:3.2px;background:#fff;opacity:.55"></i><i class="b" style="left:566px;top:480px;width:70px;height:3.2px;background:#fff;opacity:.55"></i><i class="b" style="left:568px;top:492px;width:66px;height:2.0px;background:#dff0df;opacity:.55"></i><i class="b" style="left:568px;top:495px;width:62px;height:2.0px;background:#dff0df;opacity:.55"></i><i class="b" style="left:568px;top:498px;width:66px;height:2.0px;background:#dff0df;opacity:.55"></i><i class="b" style="left:568px;top:501px;width:55px;height:2.0px;background:#dff0df;opacity:.55"></i><i class="b" style="left:568px;top:505px;width:50px;height:2.0px;background:#dff0df;opacity:.55"></i><i class="b" style="left:568px;top:512px;width:57px;height:2.0px;background:#dff0df;opacity:.55"></i><i class="b" style="left:568px;top:515px;width:54px;height:2.0px;background:#dff0df;opacity:.55"></i><i class="b" style="left:568px;top:518px;width:66px;height:2.0px;background:#dff0df;opacity:.55"></i><i class="b" style="left:568px;top:521px;width:57px;height:2.0px;background:#dff0df;opacity:.55"></i><i class="b" style="left:568px;top:525px;width:55px;height:2.0px;background:#dff0df;opacity:.55"></i><i class="b" style="left:568px;top:528px;width:60px;height:2.0px;background:#dff0df;opacity:.55"></i><i class="b" style="left:568px;top:531px;width:45px;height:2.0px;background:#dff0df;opacity:.55"></i><i class="b" style="left:568px;top:536px;width:55px;height:2.0px;background:#dff0df;opacity:.55"></i><i class="b" style="left:568px;top:539px;width:67px;height:2.0px;background:#dff0df;opacity:.55"></i><i class="b" style="left:568px;top:547px;width:55px;height:2.0px;background:#dff0df;opacity:.55"></i><i class="b" style="left:568px;top:550px;width:70px;height:2.0px;background:#dff0df;opacity:.55"></i><i class="b" style="left:568px;top:554px;width:62px;height:2.0px;background:#dff0df;opacity:.55"></i><i class="b" style="left:568px;top:557px;width:40px;height:2.0px;background:#dff0df;opacity:.55"></i><i class="b" style="left:373px;top:583px;width:137px;height:2.0px;background:#3c3c3c;opacity:.55"></i><i class="b" style="left:373px;top:586px;width:137px;height:2.0px;background:#3c3c3c;opacity:.55"></i><i class="b" style="left:373px;top:590px;width:105px;height:2.0px;background:#3c3c3c;opacity:.55"></i><svg class="b" style="left:662.5px;top:402.0px;" width="272.0" height="199.0" viewBox="0 0 272.0 199.0"><rect width="272.0" height="199.0" fill="#fbfbf7"/><rect width="186" height="170" fill="#3a92d6"/><rect x="185.500" width="86.5" height="170" fill="#1f59ad"/><path d="M0 83.500 h34 q17 0 17 17 v17 q0 17 -17 17 h-34z" fill="#1b3f8c"/><path d="M26 86 l2 20 M34 88 l-3 22 M40 92 l-4 18" stroke="#0e1f4a" stroke-width="1.600"/><circle cx="30" cy="112" r="6" fill="#dfe6f2"/><circle cx="38" cy="118" r="7" fill="#eef2f8"/><circle cx="26" cy="122" r="7" fill="#cfd9ea"/><circle cx="44" cy="126" r="5" fill="#e4eaf4"/><circle cx="34" cy="128" r="6" fill="#f3f5fa"/><path d="M4 133 l1 -18 q0 -8 6 -9 q6 1 6 9 l1 18z" fill="#f3b02c"/><circle cx="11" cy="101" r="3.200" fill="#f8dcb4"/><path d="M7.200 100.500 q0 -4.500 3.800 -4.500 q3.800 0 3.800 4.500z" fill="#f1c330"/><path d="M14 112 l12 -6 l1 2 l-12 7z" fill="#d98b1e"/><rect x="5" y="108" width="4" height="12" rx="1.500" fill="#c7791a"/><path d="M0 142 h189 q14 0 14 14 q0 14 -14 14 h-189z" fill="#e8562a"/><path d="M100 170 q-4 -18 6 -26 q2 10 8 8 q0 -12 8 -16 q0 12 8 14 q2 -10 8 -12 q0 14 8 18 q4 -8 10 -6 q-2 8 4 12 q6 -8 12 -6 q0 8 6 14z" fill="#f6a03a" opacity=".85"/><path d="M112 144 v20" stroke="#3a1a12" stroke-width="1.600" opacity=".75"/><path d="M128 144 v20" stroke="#3a1a12" stroke-width="1.600" opacity=".75"/><path d="M141 144 v20" stroke="#3a1a12" stroke-width="1.600" opacity=".75"/><path d="M154 144 v20" stroke="#3a1a12" stroke-width="1.600" opacity=".75"/><path d="M168 144 v20" stroke="#3a1a12" stroke-width="1.600" opacity=".75"/><path d="M178 144 v20" stroke="#3a1a12" stroke-width="1.600" opacity=".75"/><path d="M0 160 q40 -3 96 2 v8 h-96z" fill="#d9431f"/><g transform="translate(14 166) scale(1.15 1.15)"><path d="M-3 0 l1 -9 l4 0 l1 9 l-2 0 l-1 -7 l-1 7z" fill="#f29a2c"/><path d="M-3.500 -9 q-.5 -7 3.500 -7.500 q4 .5 3.500 7.500z" fill="#f29a2c"/><path d="M2 -14 l6 2 l0 1.500 l-6 -1z" fill="#f29a2c"/><circle cx="0" cy="-18.500" r="2.300" fill="#f6d9b8"/><path d="M-2.800 -19 q0 -3 2.800 -3 q2.800 0 2.800 3z" fill="#e6c23a"/></g><path d="M22 152 l14 -1" stroke="#f2e6d8" stroke-width=".8"/><g transform="translate(31 166) scale(1.15 1.15)"><path d="M-3 0 l1 -9 l4 0 l1 9 l-2 0 l-1 -7 l-1 7z" fill="#f29a2c"/><path d="M-3.500 -9 q-.5 -7 3.500 -7.500 q4 .5 3.500 7.500z" fill="#f29a2c"/><path d="M2 -14 l6 2 l0 1.500 l-6 -1z" fill="#f29a2c"/><circle cx="0" cy="-18.500" r="2.300" fill="#f6d9b8"/><path d="M-2.800 -19 q0 -3 2.800 -3 q2.800 0 2.800 3z" fill="#e6c23a"/></g><path d="M39 152 l14 -1" stroke="#f2e6d8" stroke-width=".8"/><g transform="translate(45 166) scale(1.15 1.15)"><path d="M-3 0 l1 -9 l4 0 l1 9 l-2 0 l-1 -7 l-1 7z" fill="#f29a2c"/><path d="M-3.500 -9 q-.5 -7 3.500 -7.500 q4 .5 3.500 7.500z" fill="#f29a2c"/><path d="M2 -14 l6 2 l0 1.500 l-6 -1z" fill="#f29a2c"/><circle cx="0" cy="-18.500" r="2.300" fill="#f6d9b8"/><path d="M-2.800 -19 q0 -3 2.800 -3 q2.800 0 2.800 3z" fill="#e6c23a"/></g><path d="M53 152 l14 -1" stroke="#f2e6d8" stroke-width=".8"/><g transform="translate(100 167) scale(-1.2 1.2)"><path d="M-3 0 l1 -9 l4 0 l1 9 l-2 0 l-1 -7 l-1 7z" fill="#1e2230"/><path d="M-3.500 -9 q-.5 -7 3.500 -7.500 q4 .5 3.500 7.500z" fill="#1e2230"/><path d="M2 -14 l6 2 l0 1.500 l-6 -1z" fill="#1e2230"/><circle cx="0" cy="-18.500" r="2.300" fill="#f6d9b8"/><path d="M-2.800 -19 q0 -3 2.800 -3 q2.800 0 2.800 3z" fill="#e6c23a"/></g><g transform="translate(130 167) scale(-1.2 1.2)"><path d="M-3 0 l1 -9 l4 0 l1 9 l-2 0 l-1 -7 l-1 7z" fill="#1e2230"/><path d="M-3.500 -9 q-.5 -7 3.500 -7.500 q4 .5 3.500 7.500z" fill="#1e2230"/><path d="M2 -14 l6 2 l0 1.500 l-6 -1z" fill="#1e2230"/><circle cx="0" cy="-18.500" r="2.300" fill="#f6d9b8"/><path d="M-2.800 -19 q0 -3 2.800 -3 q2.800 0 2.800 3z" fill="#e6c23a"/></g><g transform="translate(166 167) scale(1.2 1.2)"><path d="M-3 0 l1 -9 l4 0 l1 9 l-2 0 l-1 -7 l-1 7z" fill="#1e2230"/><path d="M-3.500 -9 q-.5 -7 3.500 -7.500 q4 .5 3.500 7.500z" fill="#1e2230"/><path d="M2 -14 l6 2 l0 1.500 l-6 -1z" fill="#1e2230"/><circle cx="0" cy="-18.500" r="2.300" fill="#f6d9b8"/><path d="M-2.800 -19 q0 -3 2.800 -3 q2.800 0 2.800 3z" fill="#e6c23a"/></g><ellipse cx="84" cy="158" rx="9" ry="5" fill="#f3ede4" opacity=".9"/><ellipse cx="140" cy="160" rx="8" ry="5" fill="#f3ede4" opacity=".85"/><ellipse cx="116" cy="156" rx="5" ry="3.500" fill="#f3ede4" opacity=".8"/><rect x="186" y="37.500" width="86.0" height="24.500" fill="#fbfbf7"/><circle cx="186.5" cy="50.5" r="9.2" fill="#fff" stroke="#d8232a" stroke-width="2.02"/><path d="M186.19333333333333 45.184444444444445 q3.4755555555555553 3.271111111111111 1.6355555555555554 6.746666666666666 q-1.6355555555555554 1.5333333333333332 -3.4755555555555553 0 q-1.6355555555555554 -2.6577777777777776 1.0222222222222221 -4.088888888888889 q-0.20444444444444443 -1.431111111111111 0.8177777777777777 -2.6577777777777776z" fill="#222"/><path d="M182.20666666666668 53.97555555555556 l8.586666666666666 1.8399999999999999 M190.79333333333332 53.97555555555556 l-8.586666666666666 1.8399999999999999" stroke="#222" stroke-width="1.33"/><path d="M180.244 44.244 L192.756 56.756" stroke="#d8232a" stroke-width="1.84"/><rect x="249.5" y="43" width="14.5" height="14.5" fill="#fff"/><rect x="249.50" y="43.00" width="1.61" height="1.61" fill="#4a7cc0"/><rect x="251.11" y="43.00" width="1.61" height="1.61" fill="#4a7cc0"/><rect x="252.72" y="43.00" width="1.61" height="1.61" fill="#4a7cc0"/><rect x="255.94" y="43.00" width="1.61" height="1.61" fill="#4a7cc0"/><rect x="259.17" y="43.00" width="1.61" height="1.61" fill="#4a7cc0"/><rect x="260.78" y="43.00" width="1.61" height="1.61" fill="#4a7cc0"/><rect x="262.39" y="43.00" width="1.61" height="1.61" fill="#4a7cc0"/><rect x="249.50" y="44.61" width="1.61" height="1.61" fill="#4a7cc0"/><rect x="252.72" y="44.61" width="1.61" height="1.61" fill="#4a7cc0"/><rect x="257.56" y="44.61" width="1.61" height="1.61" fill="#4a7cc0"/><rect x="259.17" y="44.61" width="1.61" height="1.61" fill="#4a7cc0"/><rect x="262.39" y="44.61" width="1.61" height="1.61" fill="#4a7cc0"/><rect x="249.50" y="46.22" width="1.61" height="1.61" fill="#4a7cc0"/><rect x="251.11" y="46.22" width="1.61" height="1.61" fill="#4a7cc0"/><rect x="252.72" y="46.22" width="1.61" height="1.61" fill="#4a7cc0"/><rect x="255.94" y="46.22" width="1.61" height="1.61" fill="#4a7cc0"/><rect x="259.17" y="46.22" width="1.61" height="1.61" fill="#4a7cc0"/><rect x="260.78" y="46.22" width="1.61" height="1.61" fill="#4a7cc0"/><rect x="262.39" y="46.22" width="1.61" height="1.61" fill="#4a7cc0"/><rect x="254.33" y="47.83" width="1.61" height="1.61" fill="#4a7cc0"/><rect x="257.56" y="47.83" width="1.61" height="1.61" fill="#4a7cc0"/><rect x="249.50" y="49.44" width="1.61" height="1.61" fill="#4a7cc0"/><rect x="251.11" y="49.44" width="1.61" height="1.61" fill="#4a7cc0"/><rect x="254.33" y="49.44" width="1.61" height="1.61" fill="#4a7cc0"/><rect x="255.94" y="49.44" width="1.61" height="1.61" fill="#4a7cc0"/><rect x="259.17" y="49.44" width="1.61" height="1.61" fill="#4a7cc0"/><rect x="262.39" y="49.44" width="1.61" height="1.61" fill="#4a7cc0"/><rect x="252.72" y="51.06" width="1.61" height="1.61" fill="#4a7cc0"/><rect x="255.94" y="51.06" width="1.61" height="1.61" fill="#4a7cc0"/><rect x="257.56" y="51.06" width="1.61" height="1.61" fill="#4a7cc0"/><rect x="260.78" y="51.06" width="1.61" height="1.61" fill="#4a7cc0"/><rect x="249.50" y="52.67" width="1.61" height="1.61" fill="#4a7cc0"/><rect x="251.11" y="52.67" width="1.61" height="1.61" fill="#4a7cc0"/><rect x="252.72" y="52.67" width="1.61" height="1.61" fill="#4a7cc0"/><rect x="257.56" y="52.67" width="1.61" height="1.61" fill="#4a7cc0"/><rect x="260.78" y="52.67" width="1.61" height="1.61" fill="#4a7cc0"/><rect x="262.39" y="52.67" width="1.61" height="1.61" fill="#4a7cc0"/><rect x="249.50" y="54.28" width="1.61" height="1.61" fill="#4a7cc0"/><rect x="252.72" y="54.28" width="1.61" height="1.61" fill="#4a7cc0"/><rect x="255.94" y="54.28" width="1.61" height="1.61" fill="#4a7cc0"/><rect x="259.17" y="54.28" width="1.61" height="1.61" fill="#4a7cc0"/><rect x="249.50" y="55.89" width="1.61" height="1.61" fill="#4a7cc0"/><rect x="251.11" y="55.89" width="1.61" height="1.61" fill="#4a7cc0"/><rect x="252.72" y="55.89" width="1.61" height="1.61" fill="#4a7cc0"/><rect x="255.94" y="55.89" width="1.61" height="1.61" fill="#4a7cc0"/><rect x="257.56" y="55.89" width="1.61" height="1.61" fill="#4a7cc0"/><rect x="260.78" y="55.89" width="1.61" height="1.61" fill="#4a7cc0"/><rect x="262.39" y="55.89" width="1.61" height="1.61" fill="#4a7cc0"/><circle cx="232" cy="140" r="9" fill="#e9eef6"/><circle cx="224" cy="150" r="9" fill="#f4f6fa"/><circle cx="240" cy="152" r="10" fill="#dfe6f1"/><circle cx="252" cy="158" r="8" fill="#eef2f8"/><ellipse cx="238" cy="162" rx="26" ry="6.500" fill="#f4f6fa"/><path d="M246 166 l4 -20 l-4 -14 q2 -12 12 -14 q10 0 13 10 l1 38z" fill="#f2b52a"/><path d="M258 132 l10 -2 l2 14 l-10 4z" fill="#d9961c"/><circle cx="262" cy="118" r="4.600" fill="#3a3a40"/><path d="M256.500 117.500 q0 -6.500 5.500 -6.500 q5.500 0 5.500 6.500z" fill="#efc42e"/><path d="M250 136 l-16 14 l-4 -1 l1 -3 l16 -15z" fill="#e0a422"/><path d="M232 150 l-8 8" stroke="#3a3a40" stroke-width="1.600"/><path d="M252 166 l2 -14 h8 l2 14z" fill="#d89a1d"/><circle cx="192.500" cy="85" r=".55" fill="#d6e4f6"/><circle cx="192.500" cy="95.5" r=".55" fill="#d6e4f6"/><circle cx="192.500" cy="113" r=".55" fill="#d6e4f6"/><path d="M183.5 189.5 q-0.5 -8.0 1.5 -13.0" stroke="#efc36a" stroke-width="1.3" fill="none"/><circle cx="186.0" cy="187.5" r="3.3" fill="#3f9a5c"/><circle cx="184.0" cy="189.0" r="2.0" fill="#4aa866"/><circle cx="185.0" cy="191.5" r="1.9" fill="#e2643c"/><rect x="180.5" y="194.0" width="8.0" height="1.3" fill="#b9c4c0"/><circle cx="215.5" cy="183.0" r="2.4" fill="#f3b46a"/><ellipse cx="210.5" cy="188.0" rx="7.8" ry="4.6" fill="#6fae3c" transform="rotate(-12 210.5 188.0)"/><path d="M204.5 189.5 q6.0 -1.0 11.0 -5.0" stroke="#d9ecc0" stroke-width="1.1" fill="none"/><path d="M207.5 183.5 q3.0 -2.0 6.0 -1.0" stroke="#7a8fb8" stroke-width="1.0" fill="none"/><rect x="203.0" y="194.1" width="15.0" height="1.0" fill="#a9b4b0"/><path d="M233.4 180.5 h5.2 l-1.3 4.7 l4.7 -1.3 v5.2 l-4.7 -1.3 l1.3 4.7 h-5.2 l1.3 -4.7 l-4.7 1.3 v-5.2 l4.7 1.3z" fill="#d46a22"/><circle cx="236" cy="186.5" r="2.0" fill="#4a8f8c"/><path d="M252.9 181.0 q2.8 1.2 5.6 -1.0 q2.8 2.2 5.6 1.0 v6.5 q0 3.5 -5.6 5.5 q-5.6 -2.0 -5.6 -5.5z" fill="#2d5a1e"/><path d="M258.5 183.0 l2.6 5.5 h-5.2z" fill="#c9cb45"/><rect x="255.0" y="189.3" width="7.0" height="1.2" fill="#c9cb45"/></svg>
<span class="t" style="left:669.5px;top:405.7px;font:700 14.2px/17.0px 'Liberation Sans', sans-serif;color:#fbfdff;transform:scaleX(0.872);-webkit-text-stroke:.45px #fbfdff;">ЗУПИНИМО ЛІСОВІ ПОЖЕЖІ</span>
<span class="t" style="left:732.5px;top:419.2px;font:700 14.2px/17.0px 'Liberation Sans', sans-serif;color:#fbfdff;transform:scaleX(0.822);-webkit-text-stroke:.45px #fbfdff;">РАЗОМ!</span>
<i class="b" style="left:670px;top:442px;width:142px;height:2.9px;background:#22509a;opacity:.55"></i><i class="b" style="left:670px;top:448px;width:152px;height:2.9px;background:#22509a;opacity:.55"></i><i class="b" style="left:670px;top:453px;width:138px;height:2.9px;background:#22509a;opacity:.55"></i><i class="b" style="left:670px;top:459px;width:118px;height:2.9px;background:#22509a;opacity:.55"></i><i class="b" style="left:703px;top:471px;width:54px;height:3.2px;background:#fff;opacity:.55"></i><i class="b" style="left:703px;top:478px;width:74px;height:3.2px;background:#fff;opacity:.55"></i><i class="b" style="left:793px;top:471px;width:26px;height:3.2px;background:#fff;opacity:.55"></i><i class="b" style="left:793px;top:478px;width:40px;height:3.2px;background:#fff;opacity:.55"></i><div class="b" style="left:719.0px;top:486.6px;width:1.1px;height:1.1px;background:#d6e8fa;border-radius:50%;"></div>
<i class="b" style="left:722px;top:486px;width:46px;height:2.0px;background:#e2f0fc;opacity:.55"></i><i class="b" style="left:722px;top:489px;width:30px;height:2.0px;background:#e2f0fc;opacity:.55"></i><div class="b" style="left:719.0px;top:497.1px;width:1.1px;height:1.1px;background:#d6e8fa;border-radius:50%;"></div>
<i class="b" style="left:722px;top:497px;width:47px;height:2.0px;background:#e2f0fc;opacity:.55"></i><i class="b" style="left:722px;top:500px;width:51px;height:2.0px;background:#e2f0fc;opacity:.55"></i><i class="b" style="left:722px;top:503px;width:52px;height:2.0px;background:#e2f0fc;opacity:.55"></i><i class="b" style="left:722px;top:506px;width:52px;height:2.0px;background:#e2f0fc;opacity:.55"></i><div class="b" style="left:719.0px;top:513.6px;width:1.1px;height:1.1px;background:#d6e8fa;border-radius:50%;"></div>
<i class="b" style="left:722px;top:513px;width:44px;height:2.0px;background:#e2f0fc;opacity:.55"></i><i class="b" style="left:722px;top:516px;width:40px;height:2.0px;background:#e2f0fc;opacity:.55"></i><div class="b" style="left:719.0px;top:523.6px;width:1.1px;height:1.1px;background:#d6e8fa;border-radius:50%;"></div>
<i class="b" style="left:722px;top:523px;width:37px;height:2.0px;background:#e2f0fc;opacity:.55"></i><i class="b" style="left:722px;top:526px;width:46px;height:2.0px;background:#e2f0fc;opacity:.55"></i><i class="b" style="left:722px;top:530px;width:51px;height:2.0px;background:#e2f0fc;opacity:.55"></i><i class="b" style="left:722px;top:533px;width:47px;height:2.0px;background:#e2f0fc;opacity:.55"></i><div class="b" style="left:793.0px;top:486.6px;width:1.1px;height:1.1px;background:#d6e8fa;border-radius:50%;"></div>
<i class="b" style="left:796px;top:486px;width:28px;height:2.0px;background:#e2f0fc;opacity:.55"></i><i class="b" style="left:796px;top:489px;width:35px;height:2.0px;background:#e2f0fc;opacity:.55"></i><i class="b" style="left:796px;top:493px;width:30px;height:2.0px;background:#e2f0fc;opacity:.55"></i><i class="b" style="left:796px;top:496px;width:35px;height:2.0px;background:#e2f0fc;opacity:.55"></i><i class="b" style="left:796px;top:499px;width:30px;height:2.0px;background:#e2f0fc;opacity:.55"></i><i class="b" style="left:796px;top:503px;width:40px;height:2.0px;background:#e2f0fc;opacity:.55"></i><i class="b" style="left:796px;top:506px;width:38px;height:2.0px;background:#e2f0fc;opacity:.55"></i><i class="b" style="left:796px;top:509px;width:38px;height:2.0px;background:#e2f0fc;opacity:.55"></i><i class="b" style="left:796px;top:512px;width:18px;height:2.0px;background:#e2f0fc;opacity:.55"></i><div class="b" style="left:793.0px;top:520.1px;width:1.1px;height:1.1px;background:#d6e8fa;border-radius:50%;"></div>
<i class="b" style="left:796px;top:520px;width:44px;height:2.0px;background:#e2f0fc;opacity:.55"></i><i class="b" style="left:796px;top:523px;width:32px;height:2.0px;background:#e2f0fc;opacity:.55"></i><i class="b" style="left:796px;top:526px;width:38px;height:2.0px;background:#e2f0fc;opacity:.55"></i><i class="b" style="left:796px;top:529px;width:21px;height:2.0px;background:#e2f0fc;opacity:.55"></i><i class="b" style="left:856px;top:411px;width:71px;height:2.5px;background:#fff;opacity:.55"></i><i class="b" style="left:856px;top:417px;width:53px;height:3.4px;background:#fff;opacity:.55"></i><i class="b" style="left:856px;top:424px;width:53px;height:3.4px;background:#fff;opacity:.55"></i><i class="b" style="left:856px;top:430px;width:62px;height:2.3px;background:#e8f2ea;opacity:.55"></i><i class="b" style="left:856px;top:434px;width:22px;height:2.3px;background:#e8f2ea;opacity:.55"></i><i class="b" style="left:866px;top:445px;width:41px;height:3.1px;background:#e0342b;opacity:.55"></i><i class="b" style="left:866px;top:451px;width:34px;height:3.1px;background:#e0342b;opacity:.55"></i><i class="b" style="left:866px;top:457px;width:33px;height:1.9px;background:#e0342b;opacity:.55"></i><i class="b" style="left:854px;top:470px;width:72px;height:3.2px;background:#fff;opacity:.55"></i><i class="b" style="left:854px;top:477px;width:76px;height:3.2px;background:#fff;opacity:.55"></i><i class="b" style="left:858px;top:486px;width:68px;height:2.0px;background:#e2ecfb;opacity:.55"></i><i class="b" style="left:858px;top:489px;width:70px;height:2.0px;background:#e2ecfb;opacity:.55"></i><i class="b" style="left:858px;top:497px;width:51px;height:2.0px;background:#e2ecfb;opacity:.55"></i><i class="b" style="left:858px;top:500px;width:66px;height:2.0px;background:#e2ecfb;opacity:.55"></i><i class="b" style="left:858px;top:503px;width:61px;height:2.0px;background:#e2ecfb;opacity:.55"></i><i class="b" style="left:858px;top:506px;width:14px;height:2.0px;background:#e2ecfb;opacity:.55"></i><i class="b" style="left:858px;top:514px;width:44px;height:2.0px;background:#e2ecfb;opacity:.55"></i><i class="b" style="left:858px;top:517px;width:44px;height:2.0px;background:#e2ecfb;opacity:.55"></i><i class="b" style="left:858px;top:521px;width:42px;height:2.0px;background:#e2ecfb;opacity:.55"></i><i class="b" style="left:858px;top:524px;width:32px;height:2.0px;background:#e2ecfb;opacity:.55"></i><i class="b" style="left:858px;top:527px;width:17px;height:2.0px;background:#e2ecfb;opacity:.55"></i><i class="b" style="left:858px;top:531px;width:15px;height:2.0px;background:#e2ecfb;opacity:.55"></i><i class="b" style="left:668px;top:582px;width:132px;height:2.0px;background:#3c3c3c;opacity:.55"></i><i class="b" style="left:668px;top:585px;width:132px;height:2.0px;background:#3c3c3c;opacity:.55"></i><i class="b" style="left:668px;top:589px;width:101px;height:2.0px;background:#3c3c3c;opacity:.55"></i><svg class="b" style="left:941.3px;top:404.0px;" width="154.0" height="195.5" viewBox="0 0 154.0 195.5"><defs><clipPath id="phc"><rect width="154" height="195.500"/></clipPath><linearGradient id="gnd" x1="0" y1="0" x2="0" y2="1"><stop offset="0" stop-color="#9c9470"/><stop offset=".4" stop-color="#b3a483"/><stop offset="1" stop-color="#9a8c70"/></linearGradient></defs><g clip-path="url(#phc)"><rect width="154.0" height="195.5" fill="#5f8540"/><rect x="0" y="0" width="62" height="64" fill="#c6d4b2"/><rect x="0" y="0" width="154" height="16" fill="#a9c08c" opacity=".8"/><ellipse cx="19.4" cy="8.4" rx="6.3" ry="4.5" fill="#c4d4ae" opacity=".8"/><ellipse cx="5.6" cy="32.6" rx="7.5" ry="5.5" fill="#e3ead8" opacity=".8"/><ellipse cx="26.0" cy="3.9" rx="3.5" ry="7.0" fill="#c4d4ae" opacity=".8"/><ellipse cx="7.4" cy="12.5" rx="6.1" ry="10.6" fill="#c4d4ae" opacity=".8"/><ellipse cx="35.1" cy="2.8" rx="4.1" ry="7.9" fill="#e3ead8" opacity=".8"/><ellipse cx="17.4" cy="8.1" rx="3.6" ry="6.2" fill="#c4d4ae" opacity=".8"/><ellipse cx="10.8" cy="32.6" rx="6.2" ry="6.6" fill="#c4d4ae" opacity=".8"/><ellipse cx="42.7" cy="31.6" rx="6.1" ry="7.5" fill="#c4d4ae" opacity=".8"/><ellipse cx="25.7" cy="17.6" rx="5.9" ry="7.2" fill="#d3dfc2" opacity=".8"/><ellipse cx="14.9" cy="10.1" rx="6.9" ry="4.6" fill="#d3dfc2" opacity=".8"/><ellipse cx="31.5" cy="49.0" rx="6.6" ry="6.0" fill="#e3ead8" opacity=".8"/><ellipse cx="7.1" cy="23.4" rx="6.8" ry="5.1" fill="#d3dfc2" opacity=".8"/><ellipse cx="25.3" cy="53.9" rx="3.4" ry="7.9" fill="#d3dfc2" opacity=".8"/><ellipse cx="20.4" cy="19.6" rx="5.5" ry="9.6" fill="#e3ead8" opacity=".8"/><ellipse cx="50.4" cy="52.9" rx="5.4" ry="8.6" fill="#e3ead8" opacity=".8"/><ellipse cx="43.9" cy="17.3" rx="5.9" ry="8.8" fill="#d3dfc2" opacity=".8"/><ellipse cx="17.1" cy="21.6" rx="6.3" ry="4.2" fill="#d3dfc2" opacity=".8"/><ellipse cx="21.3" cy="34.2" rx="5.5" ry="5.5" fill="#d3dfc2" opacity=".8"/><ellipse cx="7.8" cy="13.9" rx="5.0" ry="10.1" fill="#e3ead8" opacity=".8"/><ellipse cx="10.0" cy="22.5" rx="4.4" ry="5.0" fill="#d3dfc2" opacity=".8"/><ellipse cx="51.8" cy="15.6" rx="5.1" ry="6.5" fill="#d3dfc2" opacity=".8"/><ellipse cx="57.5" cy="8.5" rx="3.9" ry="5.6" fill="#e3ead8" opacity=".8"/><ellipse cx="0.7" cy="46.5" rx="3.9" ry="6.0" fill="#e3ead8" opacity=".8"/><ellipse cx="25.1" cy="20.7" rx="5.8" ry="10.7" fill="#c4d4ae" opacity=".8"/><ellipse cx="51.6" cy="53.2" rx="6.3" ry="9.2" fill="#d3dfc2" opacity=".8"/><ellipse cx="54.0" cy="43.7" rx="7.4" ry="9.6" fill="#d3dfc2" opacity=".8"/><rect x="3" y="0" width="3" height="91" fill="#5b4a3a" opacity=".85"/><rect x="11" y="0" width="2" height="107" fill="#6a5a48" opacity=".85"/><rect x="19" y="0" width="2.5" height="83" fill="#5f5140" opacity=".85"/><rect x="27" y="0" width="2" height="99" fill="#7a6a55" opacity=".85"/><rect x="34" y="0" width="3" height="108" fill="#5a4b3b" opacity=".85"/><rect x="43" y="0" width="2.5" height="91" fill="#66574a" opacity=".85"/><rect x="50" y="0" width="2" height="100" fill="#77685a" opacity=".85"/><rect x="80" y="0" width="2" height="70" fill="#5f5345" opacity=".85"/><rect x="88" y="0" width="2.5" height="86" fill="#65594a" opacity=".85"/><rect x="118" y="0" width="2" height="96" fill="#5d5244" opacity=".85"/><rect x="143" y="0" width="2.5" height="71" fill="#564a3c" opacity=".85"/><ellipse cx="61.3" cy="56.3" rx="8.3" ry="5.4" fill="#3f6a2c" opacity=".85"/><ellipse cx="3.9" cy="100.4" rx="9.5" ry="3.9" fill="#5f8d40" opacity=".85"/><ellipse cx="147.1" cy="75.4" rx="8.3" ry="3.7" fill="#48732f" opacity=".85"/><ellipse cx="152.9" cy="62.9" rx="8.4" ry="3.5" fill="#6c9a48" opacity=".85"/><ellipse cx="115.4" cy="88.1" rx="8.3" ry="7.2" fill="#557f38" opacity=".85"/><ellipse cx="31.6" cy="107.6" rx="7.3" ry="7.1" fill="#557f38" opacity=".85"/><ellipse cx="116.8" cy="47.4" rx="9.8" ry="3.5" fill="#5f8d40" opacity=".85"/><ellipse cx="79.8" cy="103.6" rx="7.2" ry="4.3" fill="#a2c474" opacity=".85"/><ellipse cx="98.0" cy="76.4" rx="11.1" ry="7.5" fill="#3f6a2c" opacity=".85"/><ellipse cx="124.1" cy="95.3" rx="10.7" ry="4.4" fill="#48732f" opacity=".85"/><ellipse cx="147.3" cy="61.1" rx="12.4" ry="8.9" fill="#a2c474" opacity=".85"/><ellipse cx="52.0" cy="64.4" rx="12.9" ry="6.7" fill="#557f38" opacity=".85"/><ellipse cx="73.8" cy="80.1" rx="11.2" ry="3.5" fill="#6c9a48" opacity=".85"/><ellipse cx="140.1" cy="92.0" rx="10.8" ry="5.9" fill="#86b25a" opacity=".85"/><ellipse cx="66.8" cy="78.5" rx="4.8" ry="8.7" fill="#2f5424" opacity=".85"/><ellipse cx="71.3" cy="88.4" rx="4.8" ry="4.0" fill="#86b25a" opacity=".85"/><ellipse cx="4.2" cy="74.4" rx="8.2" ry="6.9" fill="#48732f" opacity=".85"/><ellipse cx="101.2" cy="52.2" rx="8.9" ry="3.8" fill="#557f38" opacity=".85"/><ellipse cx="123.1" cy="86.8" rx="4.9" ry="7.5" fill="#86b25a" opacity=".85"/><ellipse cx="66.8" cy="100.2" rx="11.4" ry="4.3" fill="#5f8d40" opacity=".85"/><ellipse cx="32.8" cy="66.1" rx="10.9" ry="5.0" fill="#2f5424" opacity=".85"/><ellipse cx="128.5" cy="25.6" rx="10.7" ry="8.4" fill="#2f5424" opacity=".85"/><ellipse cx="127.4" cy="100.8" rx="5.2" ry="3.9" fill="#557f38" opacity=".85"/><ellipse cx="134.4" cy="91.4" rx="9.5" ry="7.7" fill="#86b25a" opacity=".85"/><ellipse cx="26.5" cy="63.6" rx="10.5" ry="6.3" fill="#a2c474" opacity=".85"/><ellipse cx="105.1" cy="68.8" rx="8.3" ry="7.7" fill="#557f38" opacity=".85"/><ellipse cx="78.2" cy="71.7" rx="10.8" ry="8.5" fill="#48732f" opacity=".85"/><ellipse cx="50.1" cy="109.5" rx="9.5" ry="4.2" fill="#5f8d40" opacity=".85"/><ellipse cx="69.7" cy="69.1" rx="8.3" ry="8.6" fill="#5f8d40" opacity=".85"/><ellipse cx="142.1" cy="102.1" rx="5.8" ry="5.7" fill="#2f5424" opacity=".85"/><ellipse cx="18.7" cy="60.7" rx="4.7" ry="4.4" fill="#6c9a48" opacity=".85"/><ellipse cx="119.6" cy="106.4" rx="9.8" ry="5.2" fill="#5f8d40" opacity=".85"/><ellipse cx="136.0" cy="109.0" rx="6.0" ry="8.7" fill="#2f5424" opacity=".85"/><ellipse cx="136.3" cy="35.0" rx="10.0" ry="4.3" fill="#2f5424" opacity=".85"/><ellipse cx="153.1" cy="57.2" rx="7.8" ry="5.1" fill="#6c9a48" opacity=".85"/><ellipse cx="111.2" cy="21.8" rx="9.0" ry="5.6" fill="#557f38" opacity=".85"/><ellipse cx="59.2" cy="67.6" rx="6.7" ry="8.8" fill="#6c9a48" opacity=".85"/><ellipse cx="151.7" cy="92.5" rx="12.7" ry="3.6" fill="#5f8d40" opacity=".85"/><ellipse cx="41.9" cy="103.3" rx="5.6" ry="7.5" fill="#2f5424" opacity=".85"/><ellipse cx="130.8" cy="82.2" rx="12.5" ry="5.4" fill="#48732f" opacity=".85"/><ellipse cx="107.9" cy="28.2" rx="4.5" ry="7.1" fill="#2f5424" opacity=".85"/><ellipse cx="137.9" cy="44.7" rx="4.2" ry="3.5" fill="#5f8d40" opacity=".85"/><ellipse cx="12.9" cy="98.8" rx="4.6" ry="8.2" fill="#48732f" opacity=".85"/><ellipse cx="1.8" cy="111.5" rx="7.8" ry="8.5" fill="#86b25a" opacity=".85"/><ellipse cx="6.7" cy="85.3" rx="12.4" ry="8.8" fill="#5f8d40" opacity=".85"/><ellipse cx="47.0" cy="89.9" rx="6.6" ry="6.0" fill="#86b25a" opacity=".85"/><ellipse cx="41.7" cy="93.9" rx="13.0" ry="3.2" fill="#557f38" opacity=".85"/><ellipse cx="112.9" cy="70.7" rx="5.7" ry="5.8" fill="#48732f" opacity=".85"/><ellipse cx="16.4" cy="95.3" rx="7.9" ry="6.0" fill="#2f5424" opacity=".85"/><ellipse cx="149.4" cy="48.3" rx="5.9" ry="4.4" fill="#3f6a2c" opacity=".85"/><ellipse cx="128.2" cy="85.0" rx="9.7" ry="5.4" fill="#a2c474" opacity=".85"/><ellipse cx="151.2" cy="97.0" rx="4.1" ry="6.8" fill="#5f8d40" opacity=".85"/><ellipse cx="66.3" cy="25.1" rx="10.0" ry="5.3" fill="#5f8d40" opacity=".85"/><ellipse cx="92.2" cy="83.7" rx="4.4" ry="4.1" fill="#5f8d40" opacity=".85"/><ellipse cx="68.7" cy="44.2" rx="12.7" ry="8.8" fill="#a2c474" opacity=".85"/><ellipse cx="37.6" cy="108.8" rx="6.8" ry="5.1" fill="#557f38" opacity=".85"/><ellipse cx="101.0" cy="42.8" rx="11.0" ry="3.5" fill="#6c9a48" opacity=".85"/><ellipse cx="22.2" cy="74.0" rx="7.5" ry="4.8" fill="#3f6a2c" opacity=".85"/><ellipse cx="13.0" cy="108.1" rx="11.7" ry="3.9" fill="#2f5424" opacity=".85"/><ellipse cx="117.7" cy="86.3" rx="8.4" ry="4.7" fill="#86b25a" opacity=".85"/><ellipse cx="6.7" cy="96.8" rx="12.0" ry="6.8" fill="#86b25a" opacity=".85"/><ellipse cx="140.1" cy="89.3" rx="9.1" ry="7.9" fill="#557f38" opacity=".85"/><ellipse cx="127.3" cy="73.7" rx="12.0" ry="7.1" fill="#3f6a2c" opacity=".85"/><ellipse cx="147.8" cy="54.6" rx="8.1" ry="3.3" fill="#557f38" opacity=".85"/><ellipse cx="96.4" cy="82.6" rx="8.4" ry="3.0" fill="#6c9a48" opacity=".85"/><ellipse cx="115.2" cy="66.3" rx="8.8" ry="7.0" fill="#6c9a48" opacity=".85"/><ellipse cx="114.8" cy="63.6" rx="11.3" ry="8.1" fill="#3f6a2c" opacity=".85"/><ellipse cx="112.3" cy="38.9" rx="10.7" ry="8.9" fill="#48732f" opacity=".85"/><ellipse cx="130.2" cy="27.1" rx="12.2" ry="4.7" fill="#557f38" opacity=".85"/><ellipse cx="95.0" cy="79.1" rx="4.7" ry="3.9" fill="#5f8d40" opacity=".85"/><ellipse cx="100.3" cy="83.7" rx="9.6" ry="3.8" fill="#48732f" opacity=".85"/><ellipse cx="106.6" cy="82.2" rx="6.6" ry="6.1" fill="#48732f" opacity=".85"/><ellipse cx="71.7" cy="90.6" rx="12.9" ry="6.3" fill="#5f8d40" opacity=".85"/><ellipse cx="150.6" cy="106.1" rx="4.2" ry="5.8" fill="#48732f" opacity=".85"/><ellipse cx="153.1" cy="55.6" rx="12.2" ry="8.6" fill="#6c9a48" opacity=".85"/><ellipse cx="89.5" cy="33.0" rx="8.7" ry="8.7" fill="#86b25a" opacity=".85"/><ellipse cx="92.9" cy="78.1" rx="6.5" ry="3.7" fill="#a2c474" opacity=".85"/><ellipse cx="35.6" cy="102.6" rx="8.4" ry="3.1" fill="#557f38" opacity=".85"/><ellipse cx="146.3" cy="82.7" rx="7.6" ry="7.4" fill="#2f5424" opacity=".85"/><ellipse cx="53.0" cy="49.1" rx="4.0" ry="7.5" fill="#2f5424" opacity=".85"/><ellipse cx="18.5" cy="105.2" rx="10.4" ry="8.4" fill="#5f8d40" opacity=".85"/><ellipse cx="134.0" cy="27.0" rx="12.3" ry="7.5" fill="#557f38" opacity=".85"/><ellipse cx="97.8" cy="33.7" rx="12.7" ry="5.6" fill="#a2c474" opacity=".85"/><ellipse cx="29.2" cy="54.3" rx="12.0" ry="7.9" fill="#2f5424" opacity=".85"/><ellipse cx="140.7" cy="106.5" rx="8.9" ry="7.3" fill="#557f38" opacity=".85"/><ellipse cx="143.8" cy="57.8" rx="9.5" ry="3.8" fill="#5f8d40" opacity=".85"/><ellipse cx="74.8" cy="103.9" rx="9.0" ry="4.0" fill="#2f5424" opacity=".85"/><ellipse cx="150.3" cy="43.9" rx="9.9" ry="4.8" fill="#2f5424" opacity=".85"/><ellipse cx="18.4" cy="79.2" rx="4.7" ry="6.0" fill="#48732f" opacity=".85"/><ellipse cx="84.8" cy="61.7" rx="7.0" ry="7.6" fill="#2f5424" opacity=".85"/><ellipse cx="39.8" cy="72.4" rx="12.0" ry="7.5" fill="#2f5424" opacity=".85"/><ellipse cx="59.0" cy="88.6" rx="5.9" ry="4.6" fill="#557f38" opacity=".85"/><ellipse cx="76.7" cy="72.8" rx="7.2" ry="7.1" fill="#3f6a2c" opacity=".85"/><ellipse cx="14.3" cy="102.5" rx="7.5" ry="6.9" fill="#2f5424" opacity=".85"/><ellipse cx="146.9" cy="98.1" rx="11.9" ry="3.1" fill="#557f38" opacity=".85"/><ellipse cx="65.5" cy="90.3" rx="11.2" ry="8.8" fill="#48732f" opacity=".85"/><ellipse cx="0.0" cy="56.0" rx="11.4" ry="8.1" fill="#48732f" opacity=".85"/><ellipse cx="80.4" cy="82.8" rx="12.5" ry="7.3" fill="#48732f" opacity=".85"/><ellipse cx="13.1" cy="91.5" rx="4.0" ry="3.8" fill="#557f38" opacity=".85"/><ellipse cx="99.4" cy="47.9" rx="5.2" ry="4.5" fill="#2f5424" opacity=".85"/><ellipse cx="107.6" cy="30.3" rx="4.6" ry="6.1" fill="#3f6a2c" opacity=".85"/><ellipse cx="59.8" cy="40.6" rx="9.4" ry="3.1" fill="#5f8d40" opacity=".85"/><ellipse cx="153.4" cy="45.6" rx="6.8" ry="8.0" fill="#3f6a2c" opacity=".85"/><ellipse cx="73.2" cy="41.6" rx="6.2" ry="8.8" fill="#5f8d40" opacity=".85"/><ellipse cx="8.5" cy="37.9" rx="9.8" ry="3.5" fill="#3f6a2c" opacity=".85"/><ellipse cx="102.8" cy="105.1" rx="6.0" ry="3.2" fill="#a2c474" opacity=".85"/><ellipse cx="110.6" cy="53.3" rx="7.6" ry="3.0" fill="#5f8d40" opacity=".85"/><ellipse cx="113.8" cy="66.4" rx="5.8" ry="8.8" fill="#5f8d40" opacity=".85"/><ellipse cx="117.9" cy="37.8" rx="8.2" ry="4.6" fill="#5f8d40" opacity=".85"/><ellipse cx="16.8" cy="77.4" rx="9.5" ry="8.4" fill="#48732f" opacity=".85"/><ellipse cx="64.2" cy="81.2" rx="12.5" ry="3.9" fill="#2f5424" opacity=".85"/><ellipse cx="64.0" cy="85.3" rx="5.7" ry="5.7" fill="#a2c474" opacity=".85"/><ellipse cx="112.8" cy="111.8" rx="12.4" ry="5.0" fill="#86b25a" opacity=".85"/><ellipse cx="100.5" cy="68.3" rx="8.2" ry="4.9" fill="#2f5424" opacity=".85"/><ellipse cx="129.2" cy="110.6" rx="8.0" ry="3.7" fill="#6c9a48" opacity=".85"/><ellipse cx="43.1" cy="52.3" rx="5.1" ry="8.8" fill="#3f6a2c" opacity=".85"/><ellipse cx="58.5" cy="90.7" rx="6.8" ry="7.8" fill="#6c9a48" opacity=".85"/><ellipse cx="7.6" cy="63.6" rx="7.4" ry="8.5" fill="#3f6a2c" opacity=".85"/><ellipse cx="49.8" cy="87.8" rx="8.3" ry="6.8" fill="#3f6a2c" opacity=".85"/><ellipse cx="125.0" cy="90.5" rx="4.4" ry="3.2" fill="#6c9a48" opacity=".85"/><ellipse cx="123.7" cy="25.7" rx="5.8" ry="3.4" fill="#a2c474" opacity=".85"/><ellipse cx="55.9" cy="50.8" rx="4.4" ry="7.5" fill="#a2c474" opacity=".85"/><ellipse cx="142.3" cy="47.4" rx="10.5" ry="6.6" fill="#6c9a48" opacity=".85"/><ellipse cx="147.3" cy="107.8" rx="7.5" ry="4.5" fill="#2f5424" opacity=".85"/><ellipse cx="125.5" cy="32.2" rx="8.5" ry="3.1" fill="#5f8d40" opacity=".85"/><ellipse cx="126.7" cy="91.1" rx="9.5" ry="5.0" fill="#a2c474" opacity=".85"/><ellipse cx="71.0" cy="92.1" rx="9.4" ry="6.1" fill="#2f5424" opacity=".85"/><ellipse cx="115.9" cy="42.8" rx="4.6" ry="3.2" fill="#a2c474" opacity=".85"/><ellipse cx="24.7" cy="59.2" rx="4.9" ry="3.4" fill="#6c9a48" opacity=".85"/><ellipse cx="32.1" cy="58.7" rx="12.9" ry="8.8" fill="#86b25a" opacity=".85"/><ellipse cx="82.0" cy="16.7" rx="9.0" ry="7.0" fill="#6c9a48" opacity=".85"/><ellipse cx="133.3" cy="11.8" rx="6.2" ry="4.6" fill="#5f8d40" opacity=".85"/><ellipse cx="129.4" cy="8.0" rx="6.0" ry="4.5" fill="#86b25a" opacity=".85"/><ellipse cx="86.4" cy="36.3" rx="5.5" ry="3.4" fill="#5f8d40" opacity=".85"/><ellipse cx="153.3" cy="20.3" rx="5.9" ry="7.9" fill="#48732f" opacity=".85"/><ellipse cx="153.1" cy="4.1" rx="7.8" ry="7.9" fill="#48732f" opacity=".85"/><ellipse cx="146.0" cy="1.6" rx="6.3" ry="3.7" fill="#3f6a2c" opacity=".85"/><ellipse cx="116.4" cy="33.1" rx="5.6" ry="3.5" fill="#86b25a" opacity=".85"/><ellipse cx="102.2" cy="10.4" rx="10.2" ry="8.7" fill="#6c9a48" opacity=".85"/><ellipse cx="119.9" cy="28.4" rx="6.8" ry="3.2" fill="#a2c474" opacity=".85"/><ellipse cx="73.3" cy="8.2" rx="6.0" ry="6.6" fill="#3f6a2c" opacity=".85"/><ellipse cx="136.6" cy="32.8" rx="7.3" ry="5.2" fill="#5f8d40" opacity=".85"/><ellipse cx="67.3" cy="1.3" rx="8.0" ry="5.9" fill="#2f5424" opacity=".85"/><ellipse cx="69.5" cy="15.8" rx="8.4" ry="6.8" fill="#6c9a48" opacity=".85"/><ellipse cx="121.4" cy="15.9" rx="6.2" ry="8.9" fill="#5f8d40" opacity=".85"/><ellipse cx="99.3" cy="2.1" rx="10.0" ry="8.3" fill="#2f5424" opacity=".85"/><ellipse cx="99.1" cy="34.6" rx="12.0" ry="5.2" fill="#3f6a2c" opacity=".85"/><ellipse cx="96.7" cy="16.2" rx="11.5" ry="5.6" fill="#86b25a" opacity=".85"/><ellipse cx="99.8" cy="32.8" rx="7.2" ry="8.3" fill="#48732f" opacity=".85"/><ellipse cx="132.7" cy="5.2" rx="4.4" ry="3.9" fill="#2f5424" opacity=".85"/><ellipse cx="68.4" cy="24.9" rx="7.0" ry="6.0" fill="#86b25a" opacity=".85"/><ellipse cx="92.7" cy="6.5" rx="5.4" ry="3.4" fill="#2f5424" opacity=".85"/><ellipse cx="106.1" cy="32.2" rx="11.7" ry="4.2" fill="#86b25a" opacity=".85"/><ellipse cx="138.7" cy="1.7" rx="11.3" ry="4.9" fill="#2f5424" opacity=".85"/><ellipse cx="68.1" cy="28.5" rx="9.5" ry="8.3" fill="#3f6a2c" opacity=".85"/><ellipse cx="118.4" cy="24.6" rx="5.6" ry="5.8" fill="#3f6a2c" opacity=".85"/><ellipse cx="63.9" cy="37.5" rx="5.3" ry="5.2" fill="#86b25a" opacity=".85"/><ellipse cx="83.2" cy="29.0" rx="11.2" ry="3.2" fill="#557f38" opacity=".85"/><ellipse cx="122.8" cy="13.0" rx="7.1" ry="5.7" fill="#5f8d40" opacity=".85"/><ellipse cx="121.0" cy="12.3" rx="6.0" ry="5.3" fill="#a2c474" opacity=".85"/><ellipse cx="102.0" cy="17.5" rx="4.2" ry="6.7" fill="#48732f" opacity=".85"/><ellipse cx="103.7" cy="17.9" rx="8.9" ry="7.9" fill="#86b25a" opacity=".85"/><ellipse cx="136.2" cy="16.0" rx="4.5" ry="5.2" fill="#a2c474" opacity=".85"/><ellipse cx="68.6" cy="17.7" rx="8.1" ry="3.2" fill="#86b25a" opacity=".85"/><ellipse cx="67.7" cy="29.3" rx="10.2" ry="6.1" fill="#557f38" opacity=".85"/><ellipse cx="130.7" cy="35.8" rx="9.2" ry="7.7" fill="#557f38" opacity=".85"/><ellipse cx="140.6" cy="39.8" rx="9.9" ry="7.9" fill="#3f6a2c" opacity=".85"/><ellipse cx="72.4" cy="35.4" rx="6.3" ry="7.9" fill="#86b25a" opacity=".85"/><ellipse cx="124.5" cy="28.8" rx="5.8" ry="8.0" fill="#5f8d40" opacity=".85"/><ellipse cx="74.9" cy="35.9" rx="6.2" ry="7.9" fill="#86b25a" opacity=".85"/><path d="M0 112 q40 -6 80 -2 q40 4 74 -2 v88 h-154z" fill="url(#gnd)"/><ellipse cx="39.1" cy="191.1" rx="10.8" ry="3.3" fill="#5a5240" opacity=".5"/><ellipse cx="77.9" cy="139.5" rx="5.4" ry="2.0" fill="#c4b392" opacity=".5"/><ellipse cx="98.0" cy="136.3" rx="8.9" ry="2.6" fill="#7a6e54" opacity=".5"/><ellipse cx="17.7" cy="156.5" rx="12.6" ry="2.6" fill="#d0c0a0" opacity=".5"/><ellipse cx="85.5" cy="160.4" rx="15.6" ry="1.8" fill="#5a5240" opacity=".5"/><ellipse cx="97.0" cy="145.5" rx="14.6" ry="2.3" fill="#7a6e54" opacity=".5"/><ellipse cx="88.9" cy="142.8" rx="14.2" ry="2.8" fill="#c4b392" opacity=".5"/><ellipse cx="94.8" cy="190.6" rx="8.6" ry="3.0" fill="#7a6e54" opacity=".5"/><ellipse cx="98.4" cy="192.7" rx="12.0" ry="3.5" fill="#7a6e54" opacity=".5"/><ellipse cx="112.9" cy="173.8" rx="7.7" ry="2.4" fill="#d0c0a0" opacity=".5"/><ellipse cx="64.3" cy="143.1" rx="5.6" ry="3.0" fill="#5a5240" opacity=".5"/><ellipse cx="100.6" cy="115.8" rx="5.0" ry="2.6" fill="#6a604a" opacity=".5"/><ellipse cx="80.6" cy="156.7" rx="10.0" ry="2.4" fill="#c4b392" opacity=".5"/><ellipse cx="31.4" cy="163.9" rx="10.7" ry="1.9" fill="#c4b392" opacity=".5"/><ellipse cx="109.0" cy="150.1" rx="5.8" ry="1.9" fill="#7a6e54" opacity=".5"/><ellipse cx="61.9" cy="135.1" rx="5.1" ry="3.4" fill="#5a5240" opacity=".5"/><ellipse cx="137.5" cy="161.6" rx="11.9" ry="3.3" fill="#5a5240" opacity=".5"/><ellipse cx="113.0" cy="133.9" rx="15.8" ry="1.6" fill="#5a5240" opacity=".5"/><ellipse cx="3.9" cy="128.9" rx="6.9" ry="4.2" fill="#6a604a" opacity=".5"/><ellipse cx="1.9" cy="158.1" rx="16.3" ry="1.9" fill="#c4b392" opacity=".5"/><ellipse cx="79.8" cy="165.4" rx="12.8" ry="2.7" fill="#5a5240" opacity=".5"/><ellipse cx="26.9" cy="138.8" rx="8.6" ry="1.6" fill="#d0c0a0" opacity=".5"/><ellipse cx="110.2" cy="114.5" rx="15.1" ry="3.7" fill="#d0c0a0" opacity=".5"/><ellipse cx="12.4" cy="166.4" rx="7.1" ry="4.5" fill="#7a6e54" opacity=".5"/><ellipse cx="35.8" cy="117.1" rx="9.0" ry="3.7" fill="#7a6e54" opacity=".5"/><ellipse cx="109.6" cy="135.3" rx="11.6" ry="2.8" fill="#5a5240" opacity=".5"/><ellipse cx="149.7" cy="137.6" rx="16.1" ry="4.2" fill="#6a604a" opacity=".5"/><ellipse cx="135.5" cy="115.2" rx="8.1" ry="2.2" fill="#c4b392" opacity=".5"/><ellipse cx="145.5" cy="173.7" rx="8.9" ry="4.1" fill="#7a6e54" opacity=".5"/><ellipse cx="92.6" cy="144.4" rx="15.2" ry="4.3" fill="#5a5240" opacity=".5"/><ellipse cx="72.3" cy="181.2" rx="13.4" ry="4.1" fill="#d0c0a0" opacity=".5"/><ellipse cx="147.2" cy="132.7" rx="15.6" ry="3.9" fill="#d0c0a0" opacity=".5"/><ellipse cx="95.9" cy="120.2" rx="15.9" ry="1.9" fill="#6a604a" opacity=".5"/><ellipse cx="17.2" cy="163.8" rx="6.9" ry="4.4" fill="#6a604a" opacity=".5"/><ellipse cx="4.8" cy="125.1" rx="12.7" ry="1.6" fill="#6a604a" opacity=".5"/><ellipse cx="113.5" cy="119.3" rx="12.1" ry="2.6" fill="#5a5240" opacity=".5"/><ellipse cx="137.3" cy="119.3" rx="15.4" ry="4.2" fill="#d0c0a0" opacity=".5"/><ellipse cx="16.5" cy="130.5" rx="6.3" ry="1.6" fill="#6a604a" opacity=".5"/><ellipse cx="127.1" cy="164.5" rx="8.4" ry="1.8" fill="#6a604a" opacity=".5"/><ellipse cx="122.0" cy="165.7" rx="8.5" ry="2.5" fill="#7a6e54" opacity=".5"/><ellipse cx="3.2" cy="134.5" rx="8.4" ry="3.6" fill="#7a6e54" opacity=".5"/><ellipse cx="140.2" cy="175.5" rx="12.2" ry="2.9" fill="#7a6e54" opacity=".5"/><ellipse cx="95.2" cy="116.5" rx="10.0" ry="2.8" fill="#6a604a" opacity=".5"/><ellipse cx="53.4" cy="170.4" rx="11.5" ry="2.1" fill="#6a604a" opacity=".5"/><ellipse cx="88.5" cy="137.0" rx="10.2" ry="3.1" fill="#7a6e54" opacity=".5"/><ellipse cx="117.4" cy="192.2" rx="5.1" ry="3.0" fill="#d0c0a0" opacity=".5"/><ellipse cx="107.1" cy="180.0" rx="16.6" ry="3.3" fill="#5a5240" opacity=".5"/><ellipse cx="40.1" cy="189.5" rx="8.4" ry="2.1" fill="#c4b392" opacity=".5"/><ellipse cx="76.7" cy="122.8" rx="12.6" ry="1.7" fill="#5a5240" opacity=".5"/><ellipse cx="121.2" cy="164.2" rx="9.3" ry="2.7" fill="#d0c0a0" opacity=".5"/><ellipse cx="137.3" cy="173.6" rx="10.1" ry="3.4" fill="#7a6e54" opacity=".5"/><ellipse cx="31.7" cy="135.1" rx="15.8" ry="3.0" fill="#d0c0a0" opacity=".5"/><ellipse cx="151.3" cy="164.5" rx="16.3" ry="1.9" fill="#5a5240" opacity=".5"/><ellipse cx="116.2" cy="174.2" rx="12.8" ry="2.5" fill="#7a6e54" opacity=".5"/><ellipse cx="80.3" cy="183.4" rx="10.4" ry="3.2" fill="#7a6e54" opacity=".5"/><ellipse cx="26.1" cy="149.1" rx="14.3" ry="3.2" fill="#c4b392" opacity=".5"/><ellipse cx="51.4" cy="165.4" rx="13.4" ry="3.0" fill="#7a6e54" opacity=".5"/><ellipse cx="46.4" cy="170.3" rx="15.1" ry="2.0" fill="#c4b392" opacity=".5"/><ellipse cx="150.1" cy="171.9" rx="12.2" ry="2.5" fill="#c4b392" opacity=".5"/><ellipse cx="50.5" cy="129.1" rx="16.7" ry="3.7" fill="#6a604a" opacity=".5"/><path d="M0 150 q30 -8 60 0 q-30 14 -60 10z" fill="#4d4634" opacity=".5"/><path d="M100 170 q30 -10 54 -2 v28 h-70z" fill="#5a5039" opacity=".5"/><path d="M60 0 h9.500 l-1 70 l2 44 h-10 l1.500 -44z" fill="#5c5346"/><path d="M64 0 h3 l0 112 h-3z" fill="#77695a" opacity=".6"/><path d="M146 0 h6 l-8 40 l-12 72 h-7 l10 -70z" fill="#5a4e41"/><path d="M100 8 l5 0 l8 48 l-3.500 0z" fill="#5f5345"/><path d="M84 28 l32 24" stroke="#3e352b" stroke-width="1.300"/><path d="M38 0 l4 0 l-3 66 l-3 0z" fill="#6b5a48"/><path d="M48 10 l3 0 l-4 50 l-2 0z" fill="#6b5a48"/><path d="M27.299999999999997 124.6 l1.4249999999999998 47.5 l6.6499999999999995 0 l1.4249999999999998 -41.8 l1.4249999999999998 41.8 l6.6499999999999995 0 l1.4249999999999998 -47.5z" fill="#1b2038"/><rect x="27.775" y="170.2" width="8.075" height="5.699999999999999" rx="1.500" fill="#14151b"/><rect x="38.224999999999994" y="170.2" width="8.075" height="5.699999999999999" rx="1.500" fill="#14151b"/><path d="M24.449999999999996 81.85 q12.35 -6.6499999999999995 24.7 0 q4.75 2.8499999999999996 5.699999999999999 11.399999999999999 l1.9 22.799999999999997 l-5.699999999999999 2.8499999999999996 l-2.8499999999999996 -15.2 l0.95 26.599999999999998 l-24.7 0 l0.95 -26.599999999999998 l-2.8499999999999996 15.2 l-5.699999999999999 -2.8499999999999996 l1.9 -22.799999999999997 q0.95 -8.549999999999999 5.699999999999999 -11.399999999999999z" fill="#1b2038"/><path d="M24.449999999999996 94.2 h24.7" stroke="#cdd98c" stroke-width="2.28"/><path d="M24.449999999999996 97.525 h24.7" stroke="#8f9aa0" stroke-width="0.95"/><path d="M17.799999999999997 105.6 h6.175 M49.625 105.6 h6.175" stroke="#cdd98c" stroke-width="2.09"/><path d="M24.449999999999996 128.4 h24.7" stroke="#cdd98c" stroke-width="1.9"/><path d="M28.25 161.64999999999998 h7.6 M38.224999999999994 161.64999999999998 h7.6" stroke="#cdd98c" stroke-width="2.09"/><ellipse cx="36.8" cy="74.25" rx="4.56" ry="5.225" fill="#d9b59a"/><path d="M30.15 70.925 q0 -8.075 6.6499999999999995 -8.075 q6.6499999999999995 0 6.6499999999999995 8.075 q-6.6499999999999995 1.71 -13.299999999999999 0z" fill="#f4f5f3"/><path d="M30.15 77.1 q6.6499999999999995 6.6499999999999995 13.299999999999999 0 l1.4249999999999998 5.699999999999999 h-16.15z" fill="#1b2038"/><path d="M102.3 118.0 l1.5 50.0 l7.0 0 l1.5 -44.0 l1.5 44.0 l7.0 0 l1.5 -50.0z" fill="#1b2038"/><rect x="102.8" y="166.0" width="8.5" height="6.0" rx="1.500" fill="#14151b"/><rect x="113.8" y="166.0" width="8.5" height="6.0" rx="1.500" fill="#14151b"/><path d="M99.3 73.0 q13.0 -7.0 26.0 0 q5.0 3.0 6.0 12.0 l2.0 24.0 l-6.0 3.0 l-3.0 -16.0 l1.0 28.0 l-26.0 0 l1.0 -28.0 l-3.0 16.0 l-6.0 -3.0 l2.0 -24.0 q1.0 -9.0 6.0 -12.0z" fill="#1b2038"/><path d="M99.3 86.0 h26.0" stroke="#cdd98c" stroke-width="2.4"/><path d="M99.3 89.5 h26.0" stroke="#8f9aa0" stroke-width="1.0"/><path d="M92.3 98.0 h6.5 M125.8 98.0 h6.5" stroke="#cdd98c" stroke-width="2.2"/><path d="M99.3 122.0 h26.0" stroke="#cdd98c" stroke-width="2.0"/><path d="M103.3 157.0 h8.0 M113.8 157.0 h8.0" stroke="#cdd98c" stroke-width="2.2"/><ellipse cx="112.3" cy="65.0" rx="4.8" ry="5.5" fill="#d9b59a"/><path d="M105.3 61.5 q0 -8.5 7.0 -8.5 q7.0 0 7.0 8.5 q-7.0 1.8 -14.0 0z" fill="#f4f5f3"/><path d="M105.3 68.0 q7.0 7.0 14.0 0 l1.5 6.0 h-17.0z" fill="#1b2038"/><rect x="36.800" y="116.500" width="72.500" height="59.500" fill="#f4f2ec"/><rect x="36.800" y="116.500" width="47" height="50.500" fill="#121110"/><rect x="83.500" y="116.500" width="25.800" height="50.500" fill="#e8572a"/><path d="M46 158 q-4 -8 2 -14 q1 4 4 3 q-3 -10 5 -16 q0 6 4 7 q0 -8 7 -12 q-2 7 3 11 q3 -3 2 -7 q6 7 2 15 q3 -1 4 -4 q4 8 -3 17z" fill="#fdb73b"/><path d="M54 157 q-3 -7 3 -11 q1 4 4 2 q1 -5 5 -7 q0 6 4 8 q3 4 -1 8z" fill="#e8501c"/><path d="M58 157 l2 -7 l4 -1 l2 -4 l1 4 l-1 8z" fill="#121110"/><rect x="83.500" y="129" width="25.800" height="9" fill="#faf7f2"/><circle cx="84.500" cy="133.500" r="3.200" fill="#fff" stroke="#d8232a" stroke-width=".9"/><path d="M87 141.0 h19" stroke="#f6b89c" stroke-width=".8"/><path d="M87 144.1 h16" stroke="#f6b89c" stroke-width=".8"/><path d="M87 147.2 h13" stroke="#f6b89c" stroke-width=".8"/><path d="M87 150.3 h19" stroke="#f6b89c" stroke-width=".8"/><path d="M87 153.4 h16" stroke="#f6b89c" stroke-width=".8"/><path d="M87 156.5 h13" stroke="#f6b89c" stroke-width=".8"/><path d="M87 159.6 h19" stroke="#f6b89c" stroke-width=".8"/><path d="M87 162.7 h16" stroke="#f6b89c" stroke-width=".8"/><path d="M87 120 h19 M87 122.500 h16 M87 125 h12" stroke="#ffe0d0" stroke-width=".8"/><circle cx="88" cy="171.500" r="1.300" fill="#5a9a3a"/><circle cx="94" cy="171.500" r="1.300" fill="#4b8a8f"/><circle cx="100" cy="171.500" r="1.300" fill="#e0472a"/><circle cx="105.500" cy="171.500" r="1.300" fill="#2f5f2a"/><path d="M40 171 h34 M40 173.200 h30" stroke="#777" stroke-width=".6"/><ellipse cx="42" cy="118" rx="2.400" ry="2" fill="#d6ad90"/><ellipse cx="95" cy="117.500" rx="2.400" ry="2" fill="#d6ad90"/><ellipse cx="109" cy="121" rx="2" ry="2.400" fill="#d6ad90"/></g></svg>
<i class="b" style="left:980px;top:523px;width:41px;height:2.2px;background:#e4532a;opacity:.55"></i><i class="b" style="left:993px;top:563px;width:15px;height:1.4px;background:#f2f2f2;opacity:.55"></i><i class="b" style="left:982px;top:566px;width:39px;height:1.4px;background:#f2f2f2;opacity:.55"></i></div></div></div>
<svg class="b" style="left:28.0px;top:403.0px;outline:1px solid #d9d9d9;" width="151" height="85" viewBox="0 0 151 85"><rect width="151" height="85" fill="#fef6df"/><rect x="12.800" y="18.400" width="41.700" height="27.600" fill="#d9d9d3"/><rect x="12.800" y="18.400" width="41.700" height="6" fill="#eceae4"/><rect x="14" y="22" width="10" height="17" fill="#9cc0d8"/><rect x="14" y="22" width="10" height="3" fill="#3f7fc0"/><rect x="40" y="24" width="9" height="12" fill="#b9c4b0"/><rect x="12.800" y="40" width="41.700" height="6" fill="#8a8a86"/><rect x="26" y="31" width="4" height="13" fill="#26262c"/><rect x="31" y="30" width="4.500" height="14" fill="#30303a"/><rect x="36" y="32" width="4" height="12" fill="#2a2a30"/><rect x="44" y="33" width="5" height="11" fill="#4a4a50"/><rect x="62.800" y="18.400" width="38.900" height="27.600" fill="#4f6040"/><rect x="62.800" y="18.400" width="18" height="10" fill="#d4dadd"/><rect x="84" y="18.400" width="17.700" height="12" fill="#3a4a30"/><rect x="62.800" y="34" width="38.900" height="12" fill="#2c3038"/><rect x="94" y="30" width="7.700" height="8" fill="#b83a30"/><rect x="62.800" y="42" width="38.900" height="4" fill="#5a5a58"/><circle cx="66" cy="33" r="1.600" fill="#c9a890"/><circle cx="71" cy="33" r="1.600" fill="#c9a890"/><circle cx="76" cy="33" r="1.600" fill="#c9a890"/><circle cx="81" cy="33" r="1.600" fill="#c9a890"/><circle cx="86" cy="33" r="1.600" fill="#c9a890"/><circle cx="91" cy="33" r="1.600" fill="#c9a890"/><rect x="105.300" y="17.500" width="39.500" height="29.200" fill="#c9cec2"/><rect x="105.300" y="17.500" width="39.500" height="5" fill="#5a5a55"/><rect x="116" y="23" width="18" height="10" fill="#b4c8a4"/><rect x="136" y="23" width="6" height="9" fill="#6a6a66"/><path d="M105.300 46.700 v-12 q3 -5 7 -2 l3 14z M144.800 46.700 v-14 q-6 -3 -9 2 l-8 4 l-3 8z" fill="#24242a"/><rect x="116" y="38" width="14" height="8.700" fill="#a9a9a2"/><circle cx="110" cy="32" r="2" fill="#c9a890"/><circle cx="139" cy="31.500" r="2" fill="#c9a890"/><rect x="134" y="36" width="7" height="6" fill="#2f6a4a"/><rect x="5.900" y="51" width="38.900" height="30" fill="#7a6a50"/><rect x="5.900" y="51" width="38.900" height="11" fill="#cdd6dd"/><rect x="22" y="52" width="12" height="14" fill="#9a7a3a"/><rect x="34" y="54" width="10.800" height="12" fill="#5a6a3a"/><rect x="5.900" y="55" width="11" height="19" fill="#b4362a"/><rect x="5.900" y="72" width="38.900" height="9" fill="#6a6a6c"/><rect x="12" y="66" width="4" height="11" fill="#22242c"/><rect x="24" y="66" width="18" height="10" fill="#262830"/><rect x="7.500" y="58" width="5" height="4" fill="#e8e4d8"/><rect x="49" y="51" width="52.700" height="30" fill="#474e5c"/><rect x="49" y="51" width="52.700" height="9" fill="#9cc0e2"/><rect x="62" y="54" width="18" height="9" fill="#d4d0c0"/><rect x="84" y="53" width="17.700" height="10" fill="#5a6a44"/><rect x="49" y="56" width="10" height="8" fill="#6a7a4a"/><rect x="52" y="60" width="3.500" height="11" fill="#1e2028"/><rect x="72" y="60" width="3" height="9" fill="#22242c"/><rect x="78" y="60" width="3" height="9" fill="#22242c"/><rect x="90" y="59" width="3.500" height="10" fill="#1e2028"/><rect x="95" y="60" width="3" height="9" fill="#22242c"/><path d="M55 72 q16 6 26 2 l4 2" stroke="#e8e8e8" stroke-width="1.200" fill="none"/><rect x="105.300" y="51" width="39.500" height="30" fill="#4a4438"/><rect x="105.300" y="51" width="39.500" height="14" fill="#5f9fe2"/><rect x="105.300" y="56" width="10" height="12" fill="#e4e8ee"/><path d="M118 51 h26.800 v18 h-22 q-8 -8 -4.800 -18z" fill="#9a6a34"/><rect x="130" y="51" width="14.800" height="10" fill="#7a5a2c"/><rect x="105.300" y="68" width="39.500" height="8" fill="#24262e"/><rect x="105.300" y="76" width="39.500" height="5" fill="#6a6458"/></svg>
<svg class="b" style="left:28.0px;top:501.0px;outline:1px solid #d9d9d9;" width="151" height="86" viewBox="0 0 151 86"><rect width="151" height="86" fill="#fef6df"/><rect x="3" y="15" width="49" height="68" fill="#dcdcd8"/><rect x="16" y="16" width="36" height="9" fill="#e8eef4"/><rect x="18" y="17.500" width="32" height="5.500" fill="#5f9fd4"/><rect x="21" y="30" width="25" height="27" fill="#74746f"/><rect x="25" y="33" width="7" height="20" fill="#c9c9c4"/><rect x="35" y="33" width="7" height="20" fill="#3f3f3c"/><rect x="46" y="27" width="6.500" height="30" fill="#9a9288"/><rect x="47" y="46" width="5" height="9" fill="#5f7f9f"/><path d="M5 28 h14" stroke="#8a8a86" stroke-width=".9"/><path d="M5 31 h14" stroke="#8a8a86" stroke-width=".9"/><path d="M5 34 h14" stroke="#8a8a86" stroke-width=".9"/><path d="M5 37 h14" stroke="#8a8a86" stroke-width=".9"/><path d="M5 40 h14" stroke="#8a8a86" stroke-width=".9"/><path d="M5 43 h14" stroke="#8a8a86" stroke-width=".9"/><path d="M5 46 h14" stroke="#8a8a86" stroke-width=".9"/><path d="M5 49 h14" stroke="#8a8a86" stroke-width=".9"/><path d="M5 52 h14" stroke="#8a8a86" stroke-width=".9"/><path d="M5 55 h14" stroke="#8a8a86" stroke-width=".9"/><path d="M5 59.0 h46" stroke="#8f8f8a" stroke-width=".9"/><path d="M5 61.6 h46" stroke="#8f8f8a" stroke-width=".9"/><path d="M5 64.2 h46" stroke="#8f8f8a" stroke-width=".9"/><path d="M5 66.8 h46" stroke="#8f8f8a" stroke-width=".9"/><path d="M5 69.4 h46" stroke="#8f8f8a" stroke-width=".9"/><path d="M5 72.0 h46" stroke="#8f8f8a" stroke-width=".9"/><path d="M5 74.6 h46" stroke="#8f8f8a" stroke-width=".9"/><path d="M5 77.2 h46" stroke="#8f8f8a" stroke-width=".9"/><path d="M5 79.8 h46" stroke="#8f8f8a" stroke-width=".9"/><rect x="55.300" y="21.800" width="43.700" height="55" fill="#d2d2ce"/><rect x="56.500" y="24" width="41" height="12" fill="#e4e4e0"/><rect x="57" y="25" width="6" height="10" fill="#55554f"/><rect x="64" y="39" width="28" height="13" fill="#6c6c68"/><rect x="68" y="42" width="20" height="7" fill="#3f3f3c"/><path d="M57.500 55.0 h39" stroke="#8a8a86" stroke-width=".9"/><path d="M57.500 57.4 h39" stroke="#8a8a86" stroke-width=".9"/><path d="M57.500 59.8 h39" stroke="#8a8a86" stroke-width=".9"/><path d="M57.500 62.2 h39" stroke="#8a8a86" stroke-width=".9"/><path d="M57.500 64.6 h39" stroke="#8a8a86" stroke-width=".9"/><path d="M57.500 67.0 h39" stroke="#8a8a86" stroke-width=".9"/><path d="M57.500 69.4 h39" stroke="#8a8a86" stroke-width=".9"/><path d="M57.500 71.8 h39" stroke="#8a8a86" stroke-width=".9"/><path d="M57.500 74.2 h39" stroke="#8a8a86" stroke-width=".9"/><rect x="100" y="21" width="48" height="57" fill="#fdfdfb"/><rect x="100" y="21" width="8" height="2.200" fill="#e33"/><rect x="104.500" y="48" width="43" height="25" fill="#3f6fb4"/><rect x="108" y="50" width="14" height="12" fill="#6a9ad4"/><rect x="122" y="49" width="14" height="14" fill="#d85a3a"/><rect x="136" y="50" width="9" height="12" fill="#e8a43a"/><rect x="104.500" y="63" width="43" height="10" fill="#2a3244"/><circle cx="108" cy="64" r="1.400" fill="#e2c0a8"/><circle cx="113" cy="64" r="1.400" fill="#e2c0a8"/><circle cx="118" cy="64" r="1.400" fill="#e2c0a8"/><circle cx="123" cy="64" r="1.400" fill="#e2c0a8"/><circle cx="128" cy="64" r="1.400" fill="#e2c0a8"/><circle cx="133" cy="64" r="1.400" fill="#e2c0a8"/><circle cx="138" cy="64" r="1.400" fill="#e2c0a8"/><circle cx="143" cy="64" r="1.400" fill="#e2c0a8"/></svg>
<svg class="b" style="left:28.0px;top:599.0px;outline:1px solid #d9d9d9;" width="151" height="59" viewBox="0 0 151 59"><rect width="151" height="60" fill="#fef6df"/><rect x="6.600" y="23.200" width="137.400" height="37" fill="#27324a"/><rect x="6.600" y="23.200" width="137.400" height="5.600" fill="#eef0f2"/><rect x="133" y="24.500" width="9" height="2.800" fill="#e0444a"/><rect x="67" y="24.300" width="8" height="3.200" fill="#3f8fd8"/><rect x="37.800" y="29.500" width="84.100" height="31" fill="#38523a"/><rect x="60" y="29.500" width="40" height="12" fill="#4a6a44"/><rect x="100" y="30" width="21.900" height="18" fill="#2f4632"/><circle cx="24" cy="33.500" r="1.800" fill="#3b5998"/><circle cx="30" cy="33.500" r="1.800" fill="#222"/><circle cx="36" cy="33.500" r="2.200" fill="#2aa3ef"/><circle cx="23.500" cy="38" r="1.800" fill="#8a93a8"/><circle cx="28.500" cy="38" r="1.800" fill="#8a93a8"/><rect x="21" y="41.500" width="14" height="1" fill="#c8ccd6"/><rect x="53.15" y="46.05" width="16.5" height="20" rx="2" fill="#3a3f86"/><circle cx="61.4" cy="43.3" r="4.4" fill="#d8b49a"/><path d="M55.9 40.55 q0 -7.15 5.5 -7.15 q5.5 0 5.5 7.15z" fill="#f2f2f0"/><rect x="69.89999999999999" y="46.38" width="10.8" height="20" rx="2" fill="#3a3f86"/><circle cx="75.3" cy="44.580000000000005" r="2.8800000000000003" fill="#d8b49a"/><path d="M71.7 42.78 q0 -4.680000000000001 3.6 -4.680000000000001 q3.6 0 3.6 4.680000000000001z" fill="#f2f2f0"/><rect x="84.5" y="46.38" width="10.8" height="20" rx="2" fill="#3a3f86"/><circle cx="89.9" cy="44.580000000000005" r="2.8800000000000003" fill="#d8b49a"/><path d="M86.30000000000001 42.78 q0 -4.680000000000001 3.6 -4.680000000000001 q3.6 0 3.6 4.680000000000001z" fill="#f2f2f0"/><rect x="97.6" y="50.58" width="10.8" height="20" rx="2" fill="#3a3f86"/><circle cx="103" cy="48.78" r="2.8800000000000003" fill="#d8b49a"/><path d="M99.4 46.98 q0 -4.680000000000001 3.6 -4.680000000000001 q3.6 0 3.6 4.680000000000001z" fill="#f2f2f0"/><rect x="106.60000000000001" y="47.66" width="9.600000000000001" height="20" rx="2" fill="#3a3f86"/><circle cx="111.4" cy="46.06" r="2.5600000000000005" fill="#d8b49a"/><path d="M108.2 44.46 q0 -4.16 3.2 -4.16 q3.2 0 3.2 4.16z" fill="#f2f2f0"/></svg>
<span class="t" style="left:12.5px;top:201.2px;font:400 12.5px/15.0px 'Liberation Sans', sans-serif;color:#555;">1</span>
<span class="t" style="left:12.5px;top:299.2px;font:400 12.5px/15.0px 'Liberation Sans', sans-serif;color:#c8502b;">2</span>
<span class="t" style="left:12.5px;top:398.2px;font:400 12.5px/15.0px 'Liberation Sans', sans-serif;color:#555;">3</span>
<span class="t" style="left:12.5px;top:497.2px;font:400 12.5px/15.0px 'Liberation Sans', sans-serif;color:#555;">4</span>
<span class="t" style="left:12.5px;top:595.2px;font:400 12.5px/15.0px 'Liberation Sans', sans-serif;color:#555;">5</span>
<span class="t" style="left:65.5px;top:231.3px;font:700 7.6px/9.1px 'Liberation Serif', serif;color:#c0392b;transform:scaleX(0.870);">Просвітницька діяльність</span>
<span class="t" style="left:57.0px;top:239.8px;font:700 7.6px/9.1px 'Liberation Serif', serif;color:#c0392b;transform:scaleX(0.875);">добровільних пожежних дружин</span>
<span class="t" style="left:94.0px;top:248.3px;font:700 7.6px/9.1px 'Liberation Serif', serif;color:#c0392b;transform:scaleX(0.873);">проєкту</span>
<span class="t" style="left:93.0px;top:268.4px;font:400 3.4px/4.1px 'Liberation Serif', serif;color:#555;transform:scaleX(1.064);">Олена Барабанова, керівниця проєкту</span>
<span class="t" style="left:93.0px;top:273.4px;font:400 3.4px/4.1px 'Liberation Serif', serif;color:#777;transform:scaleX(1.053);">«Створення громадської системи протипожежного</span>
<span class="t" style="left:93.0px;top:277.9px;font:400 3.4px/4.1px 'Liberation Serif', serif;color:#777;transform:scaleX(1.112);">захисту лісів в Україні»</span>
<span class="t" style="left:35.0px;top:412.5px;font:700 4px/4.8px 'Liberation Serif', serif;color:#333;transform:scaleX(0.905);">Інформаційно-просвітницька робота з учнівською молоддю</span>
<span class="t" style="left:76.5px;top:506.0px;font:700 4px/4.8px 'Liberation Serif', serif;color:#333;transform:scaleX(1.017);">Поширення інформації у ЗМІ</span>
<span class="t" style="left:92.0px;top:524.9px;font:700 7.5px/9.0px 'Liberation Serif', serif;color:#3a3a38;transform:scaleX(1.162);">ЖИТТЯ</span>
<span class="t" style="left:33.0px;top:511.6px;font:700 3px/3.6px 'Liberation Serif', serif;color:#333;transform:scaleX(0.844);">Народицька ТГ</span>
<span class="t" style="left:92.0px;top:516.6px;font:700 3px/3.6px 'Liberation Serif', serif;color:#333;transform:scaleX(0.921);">Білогірська ТГ</span>
<span class="t" style="left:131.0px;top:515.6px;font:700 3px/3.6px 'Liberation Serif', serif;color:#333;transform:scaleX(0.870);">Наркевицька ТГ</span>
<span class="t" style="left:140.5px;top:526.6px;font:700 3px/3.6px 'Liberation Sans', sans-serif;color:#1a1a1a;transform:scaleX(0.962);">Навчання членів</span>
<span class="t" style="left:132.5px;top:529.9px;font:700 3px/3.6px 'Liberation Sans', sans-serif;color:#1a1a1a;transform:scaleX(0.818);">Добровільних пожежних дружин</span>
<span class="t" style="left:137.5px;top:533.2px;font:700 3px/3.6px 'Liberation Sans', sans-serif;color:#1a1a1a;transform:scaleX(0.900);">Городня-Шепетівської</span>
<span class="t" style="left:136.5px;top:536.5px;font:700 3px/3.6px 'Liberation Sans', sans-serif;color:#1a1a1a;transform:scaleX(0.890);">територіальної громади</span>
<span class="t" style="left:35.0px;top:610.3px;font:400 3.6px/4.3px 'Liberation Serif', serif;color:#555;transform:scaleX(1.043);">Близько 20 публікацій у місцевих, обласних, всеукраїнських друкованих ЗМІ.</span>
<span class="t" style="left:35.0px;top:614.8px;font:400 3.6px/4.3px 'Liberation Serif', serif;color:#555;transform:scaleX(1.050);">Близько 200 публікацій на сайтах органів місцевої влади, фейсбук-сторінках.</span>
<div class="b" style="left:1264.0px;top:204.5px;width:10.0px;height:380.0px;background:#d4d4d4;"></div>
<div class="b" style="left:1264.0px;top:268.0px;width:10.0px;height:64.0px;background:#fff;border:1px solid #c4c4c4;box-sizing:border-box;"></div>
<div class="b" style="left:1264.0px;top:194.5px;width:10.0px;height:10.0px;background:#fdfdfd;border:1px solid #c8c8c8;box-sizing:border-box;"></div>
<div class="b" style="left:1264.0px;top:584.5px;width:10.0px;height:9.5px;background:#fdfdfd;border:1px solid #c8c8c8;box-sizing:border-box;"></div>
<svg class="b" style="left:1264.0px;top:194.0px;" width="10" height="430" viewBox="0 0 10 430"><path d="M2.5 6.8 h5 l-2.5 -3 z M2.5 394 h5 l-2.5 3 z" fill="#555"/><path d="M2.3 405.300 h5.400 l-2.700 -2.800 z M2.3 409 h5.400 l-2.700 -2.800 z M2.3 414.800 h5.400 l-2.700 2.800 z M2.3 418.500 h5.400 l-2.700 2.800 z" fill="#666"/></svg>
<div class="b" style="left:205.0px;top:631.0px;width:1070.0px;height:1.0px;background:#cfcfcf;"></div>
<span class="t" style="left:213.5px;top:636.0px;font:400 10.5px/12.6px 'Liberation Sans', sans-serif;color:#5a5a5a;transform:scaleX(0.895);">Нотатки до слайда</span>
<div class="b" style="left:5.0px;top:657.5px;width:1270.0px;height:27.5px;background:#f3f3f3;"></div>
<div class="b" style="left:5.0px;top:657.0px;width:1270.0px;height:1.0px;background:#dedede;"></div>
<div class="b" style="left:899.0px;top:658.0px;width:36.0px;height:27.0px;background:#c9c9c9;"></div>
<span class="t" style="left:10.5px;top:664.1px;font:400 13.2px/15.8px 'Liberation Sans', sans-serif;color:#3c3c3c;transform:scaleX(0.981);">Слайд 2 з 6</span>
<span class="t" style="left:124.0px;top:664.1px;font:400 13.2px/15.8px 'Liberation Sans', sans-serif;color:#3c3c3c;transform:scaleX(1.041);">українська</span>
<span class="t" style="left:737.5px;top:663.2px;font:400 14.2px/17.0px 'Liberation Sans', sans-serif;color:#3c3c3c;transform:scaleX(0.964);">Нотатки</span>
<span class="t" style="left:824.0px;top:663.2px;font:400 14.2px/17.0px 'Liberation Sans', sans-serif;color:#3c3c3c;transform:scaleX(0.991);">Примітки</span>
<span class="t" style="left:1207.5px;top:664.1px;font:400 13.5px/16.2px 'Liberation Sans', sans-serif;color:#3c3c3c;transform:scaleX(0.939);">116%</span>
<svg class="b" style="left:0.0px;top:658.0px;" width="1280" height="27" viewBox="0 0 1280 27"><path d="M97.5 10 h5.5 q1.5 0 1.5 1.5 v10 q0 -1.3 -1.5 -1.3 h-5.5 z M111.5 16 v4.2 h-5.5 q-1.5 0 -1.5 1.3 v-10 q0 -1.5 1.5 -1.5 h3" fill="none" stroke="#8a8a8a" stroke-width="1"/><path d="M107.5 17.5 l5.5 -6.5 l1.5 1.3 l-5.5 6.5 l-2 .7 z" fill="#8a8a8a"/><path d="M720.5 14.800 h9 M720.5 17.800 h9 M720.5 20.800 h5" fill="none" stroke="#8c8c8c" stroke-width="1"/><path d="M722.800 12.200 h4.400 l-2.200 -2.800z" fill="#8c8c8c"/><path d="M805.5 8.5 h13.5 v8.5 h-7.5 l-3 3.2 v-3.2 h-3 z" fill="#555"/><rect x="909" y="7" width="17" height="14.5" fill="none" stroke="#777" stroke-width="1.1"/><path d="M913.5 7 v14.5 M913.5 16.5 h12.5" stroke="#777" stroke-width="1"/><rect x="915.5" y="9.5" width="8.5" height="5" fill="none" stroke="#777" stroke-width=".9"/><rect x="944.5" y="6.5" width="7" height="6" fill="none" stroke="#777" stroke-width="1"/><rect x="944.5" y="15.0" width="7" height="6" fill="none" stroke="#777" stroke-width="1"/><rect x="954.0" y="6.5" width="7" height="6" fill="none" stroke="#777" stroke-width="1"/><rect x="954.0" y="15.0" width="7" height="6" fill="none" stroke="#777" stroke-width="1"/><path d="M979.5 7.5 h7.5 v14 h-7.5 z M989.5 7.5 h7.5 v14 h-7.5 z" fill="none" stroke="#777" stroke-width="1"/><path d="M981.5 10.0 h3.5 M991.5 10.0 h3.5" stroke="#777" stroke-width=".8"/><path d="M981.5 12.6 h3.5 M991.5 12.6 h3.5" stroke="#777" stroke-width=".8"/><path d="M981.5 15.2 h3.5 M991.5 15.2 h3.5" stroke="#777" stroke-width=".8"/><path d="M981.5 17.8 h3.5 M991.5 17.8 h3.5" stroke="#777" stroke-width=".8"/><path d="M1015.5 7 h17 M1017.5 7.5 v9 h13 v-9 M1024 16.5 v4 M1020.5 21 h7" fill="none" stroke="#777" stroke-width="1.1"/><path d="M1046.5 14.5 h8.5 M1059.5 14.5 h124.5 M1188.5 14.5 h9 M1193 10 v9" stroke="#8e8e8e" stroke-width="1"/><rect x="1122.5" y="7.5" width="5.5" height="14" fill="#6f6f6f"/><rect x="1254.5" y="8" width="12" height="12" fill="none" stroke="#8a8a8a" stroke-width="1"/><path d="M1257 12 v-1.8 h1.8 M1262 10.2 h1.8 v1.8 M1263.8 16 v1.8 h-1.8 M1258.8 17.8 h-1.8 v-1.8" fill="none" stroke="#777" stroke-width="1"/></svg>
<!-- sec_slide -->
<div class="b" style="left:367.5px;top:205.0px;width:735.0px;height:413.0px;background:#fef6df;box-shadow:0 0 0 1px #e9e6dc;"></div>
<div class="t" style="left:390px;top:230.8px;width:409.0px;display:flex;justify-content:space-between;transform:scaleX(1.038);font:700 17.2px/20.6px 'Liberation Serif', serif;color:#274e13;"><span>В</span><span>рамках</span><span>проєкту</span><span>були</span><span>створені</span><span>інформаційні</span></div>
<div class="t" style="left:390px;top:252.9px;width:409.0px;display:flex;justify-content:space-between;transform:scaleX(1.038);font:700 17.2px/20.6px 'Liberation Serif', serif;color:#274e13;"><span>стенди</span><span>про</span><span>небезпеку</span><span>лісових</span><span>пожеж</span><span>для</span><span>кожної</span><span>з</span></div>
<span class="t" style="left:390.0px;top:273.8px;font:700 17.2px/20.6px 'Liberation Serif', serif;color:#274e13;transform:scaleX(1.037);">пілотних громад.</span>
<span class="t" style="left:426.5px;top:307.2px;font:700 17.2px/20.6px 'Liberation Serif', serif;color:#274e13;transform:scaleX(1.040);">“Збережемо живу природу від вогню!”</span>
<div class="b" style="left:401.0px;top:314.8px;width:8.2px;height:8.2px;background:#274e13;border-radius:50%;"></div>
<span class="t" style="left:426.5px;top:328.7px;font:700 17.2px/20.6px 'Liberation Serif', serif;color:#274e13;transform:scaleX(1.037);">“Зупинимо лісові пожежі разом!”</span>
<div class="b" style="left:401.0px;top:336.3px;width:8.2px;height:8.2px;background:#274e13;border-radius:50%;"></div>
<span class="t" style="left:426.5px;top:350.2px;font:700 17.2px/20.6px 'Liberation Serif', serif;color:#274e13;transform:scaleX(1.039);">“Врятуємо ліси від пожеж!”</span>
<div class="b" style="left:401.0px;top:357.8px;width:8.2px;height:8.2px;background:#274e13;border-radius:50%;"></div>
<svg class="b" style="left:831.4px;top:205.0px;" width="257.6" height="180" viewBox="0 0 257.6 180"><rect width="257.6" height="180" fill="#fbfaf2"/><rect width="175.2" height="154.5" fill="#0d0c0b"/><rect x="175.2" width="82.40000000000003" height="154.5" fill="#e9531f"/><g transform="translate(18.600 23) scale(0.16242)"><path d="M165 682 C95 640 55 580 72 510 C78 460 92 425 108 395 C112 440 128 468 152 478 C142 410 170 345 228 295 C222 335 232 362 256 372 C246 290 262 232 318 188 C352 160 412 118 388 45 C432 70 452 118 436 168 C428 195 436 208 462 196 C500 176 540 120 640 92 C612 120 622 150 668 172 C722 200 716 290 640 332 C668 342 700 330 716 300 C772 350 786 430 742 486 C762 490 780 476 792 456 C812 540 790 630 722 682 Z" fill="#fdb93c"/><path d="M600 140 C585 170 600 200 640 205 C625 185 625 160 640 140 Z" fill="#0d0c0b"/><path d="M640 332 C610 345 600 375 625 395 C660 410 700 390 710 350 C690 370 660 365 640 332Z" fill="#0d0c0b"/><path d="M152 478 C165 500 190 505 205 490 C185 485 165 470 160 440Z" fill="#0d0c0b"/><path d="M256 372 C262 395 285 400 300 385 C280 380 268 360 265 335Z" fill="#0d0c0b"/><path d="M742 486 C735 510 745 530 770 535 C760 520 760 500 772 485Z" fill="#0d0c0b"/><path d="M205 575 C188 520 205 470 250 440 C262 400 290 340 335 300 C330 270 350 240 388 228 C392 270 410 296 440 300 C440 270 452 250 470 240 C500 262 540 262 600 248 C585 290 600 330 640 350 C700 380 735 440 722 520 C720 545 712 560 700 575 Z" fill="#e8501c"/><path d="M290 345 l5 16" stroke="#0d0c0b" stroke-width="6" stroke-linecap="round"/><path d="M300 385 l5 16" stroke="#0d0c0b" stroke-width="6" stroke-linecap="round"/><path d="M270 430 l5 16" stroke="#0d0c0b" stroke-width="6" stroke-linecap="round"/><path d="M235 490 l5 16" stroke="#0d0c0b" stroke-width="6" stroke-linecap="round"/><path d="M175 530 l5 16" stroke="#0d0c0b" stroke-width="6" stroke-linecap="round"/><path d="M160 560 l5 16" stroke="#0d0c0b" stroke-width="6" stroke-linecap="round"/><path d="M385 250 l5 16" stroke="#0d0c0b" stroke-width="6" stroke-linecap="round"/><path d="M395 285 l5 16" stroke="#0d0c0b" stroke-width="6" stroke-linecap="round"/><path d="M465 215 l5 16" stroke="#0d0c0b" stroke-width="6" stroke-linecap="round"/><path d="M455 255 l5 16" stroke="#0d0c0b" stroke-width="6" stroke-linecap="round"/><path d="M700 380 l5 16" stroke="#0d0c0b" stroke-width="6" stroke-linecap="round"/><path d="M690 470 l5 16" stroke="#0d0c0b" stroke-width="6" stroke-linecap="round"/><path d="M650 500 l5 16" stroke="#0d0c0b" stroke-width="6" stroke-linecap="round"/><path d="M480 190 l5 16" stroke="#0d0c0b" stroke-width="6" stroke-linecap="round"/><path d="M120 470 l5 16" stroke="#0d0c0b" stroke-width="6" stroke-linecap="round"/><path d="M178 645 L172 600 L195 610 L200 570 L222 590 L235 545 L255 575 L275 540 L290 575 L315 560 L318 600 L342 610 L338 645 Z" fill="#0d0c0b"/><path d="M568 645 L575 600 L595 605 L600 560 L620 580 L640 515 L660 560 L680 540 L690 585 L715 580 L712 615 L732 645 Z" fill="#0d0c0b"/><path d="M300 645 C340 575 540 560 600 645 Z" fill="#0d0c0b"/><path d="M288 522 C300 500 320 480 345 470 C380 452 420 450 445 440 C470 410 490 370 505 335 L520 318 L524 345 L538 372 C540 410 530 440 512 470 L498 548 L482 548 L478 500 L462 550 L448 550 L446 498 C430 505 400 505 385 500 L372 560 L356 588 L342 582 L352 545 C340 530 335 510 338 495 C320 500 305 512 288 522 Z" fill="#0d0c0b"/><ellipse cx="430" cy="627" rx="100" ry="7" fill="#e8501c"/></g><rect x="176" y="38" width="81.60000000000002" height="30.5" fill="#fbfaf6"/><circle cx="176.5" cy="52.5" r="9.3" fill="#fff" stroke="#d8232a" stroke-width="2.05"/><path d="M176.19 47.126666666666665 q3.5133333333333336 3.306666666666667 1.6533333333333335 6.82 q-1.6533333333333335 1.5500000000000003 -3.5133333333333336 0 q-1.6533333333333335 -2.686666666666667 1.0333333333333334 -4.133333333333334 q-0.2066666666666667 -1.4466666666666668 0.8266666666666668 -2.686666666666667z" fill="#222"/><path d="M172.16 56.013333333333335 l8.680000000000001 1.8600000000000003 M180.84 56.013333333333335 l-8.680000000000001 1.8600000000000003" stroke="#222" stroke-width="1.34"/><path d="M170.176 46.176 L182.824 58.824" stroke="#d8232a" stroke-width="1.86"/><circle cx="181" cy="73.5" r=".6" fill="#ffd9c6"/><circle cx="181" cy="89" r=".6" fill="#ffd9c6"/><circle cx="181" cy="101.5" r=".6" fill="#ffd9c6"/><circle cx="181" cy="117" r=".6" fill="#ffd9c6"/><circle cx="181" cy="136" r=".6" fill="#ffd9c6"/><path d="M172.65 171.05 q-0.425 -6.8 1.275 -11.049999999999999" stroke="#efc36a" stroke-width="1.105" fill="none"/><circle cx="174.775" cy="169.35" r="2.8049999999999997" fill="#3f9a5c"/><circle cx="173.075" cy="170.625" r="1.7" fill="#4aa866"/><circle cx="173.925" cy="172.75" r="1.615" fill="#e2643c"/><rect x="170.1" y="174.875" width="6.8" height="1.105" fill="#b9c4c0"/><circle cx="202.25" cy="165.525" r="2.04" fill="#f3b46a"/><ellipse cx="198" cy="169.775" rx="6.63" ry="3.9099999999999997" fill="#6fae3c" transform="rotate(-12 198 169.775)"/><path d="M192.9 171.05 q5.1 -0.85 9.35 -4.25" stroke="#d9ecc0" stroke-width="0.935" fill="none"/><path d="M195.45 165.95 q2.55 -1.7 5.1 -0.85" stroke="#7a8fb8" stroke-width="0.85" fill="none"/><rect x="191.625" y="174.96" width="12.75" height="0.85" fill="#a9b4b0"/><path d="M221.29 163.4 h4.42 l-1.105 3.995 l3.995 -1.105 v4.42 l-3.995 -1.105 l1.105 3.995 h-4.42 l1.105 -3.995 l-3.995 1.105 v-4.42 l3.995 1.105z" fill="#d46a22"/><circle cx="223.5" cy="168.5" r="1.7" fill="#4a8f8c"/><path d="M238.74 163.825 q2.38 1.02 4.76 -0.85 q2.38 1.87 4.76 0.85 v5.5249999999999995 q0 2.975 -4.76 4.675 q-4.76 -1.7 -4.76 -4.675z" fill="#2d5a1e"/><path d="M243.5 165.525 l2.21 4.675 h-4.42z" fill="#c9cb45"/><rect x="240.525" y="170.88" width="5.95" height="1.02" fill="#c9cb45"/></svg>
<span class="t" style="left:842.3px;top:214.1px;font:700 13px/15.6px 'Liberation Sans', sans-serif;color:#ee5a2a;transform:scaleX(0.814);-webkit-text-stroke:.5px #ee5a2a;">ВРЯТУЄМО ЛІСИ ВІД ПОЖЕЖ!</span>
<span class="t" style="left:891.0px;top:333.8px;font:700 9.3px/11.2px 'Liberation Sans', sans-serif;color:#fafafa;transform:scaleX(1.123);">Палиш ліс –</span>
<span class="t" style="left:842.5px;top:345.5px;font:700 9.3px/11.2px 'Liberation Sans', sans-serif;color:#fafafa;transform:scaleX(1.139);">допомагаєш ворогам України!</span>
<span class="t" style="left:1013.0px;top:213.5px;font:700 4.1px/4.9px 'Liberation Sans', sans-serif;color:#fff;transform:scaleX(0.988);">ЯКЩО БАЧИТЕ ПАЛАЮЧИЙ ЛІС –</span>
<span class="t" style="left:1013.0px;top:218.2px;font:700 5.4px/6.5px 'Liberation Sans', sans-serif;color:#fff;transform:scaleX(0.815);">ТЕЛЕФОНУЙТЕ 101</span>
<span class="t" style="left:1013.0px;top:223.7px;font:700 5.4px/6.5px 'Liberation Sans', sans-serif;color:#fff;transform:scaleX(0.964);">або (04140) 2-13-76</span>
<span class="t" style="left:1013.0px;top:230.0px;font:700 3.7px/4.4px 'Liberation Sans', sans-serif;color:#ffe5d8;transform:scaleX(0.985);">(ДЕРЖАВНИЙ ПОЖЕЖНО-</span>
<span class="t" style="left:1013.0px;top:233.9px;font:700 3.7px/4.4px 'Liberation Sans', sans-serif;color:#ffe5d8;transform:scaleX(1.007);">РЯТУВАЛЬНИЙ ЗАГІН, с. НАРОДИЧІ)</span>
<span class="t" style="left:1028.0px;top:244.4px;font:700 5.0px/6.0px 'Liberation Sans', sans-serif;color:#e4532a;transform:scaleX(0.993);">Протягом періоду</span>
<span class="t" style="left:1030.0px;top:249.4px;font:700 5.0px/6.0px 'Liberation Sans', sans-serif;color:#e4532a;transform:scaleX(0.980);">весняного стану</span>
<span class="t" style="left:1032.0px;top:254.4px;font:700 5.0px/6.0px 'Liberation Sans', sans-serif;color:#e4532a;transform:scaleX(1.033);">та підвищеної</span>
<span class="t" style="left:1023.0px;top:259.4px;font:700 5.0px/6.0px 'Liberation Sans', sans-serif;color:#e4532a;transform:scaleX(1.078);">пожежної небезпеки</span>
<span class="t" style="left:1027.0px;top:264.4px;font:700 5.0px/6.0px 'Liberation Sans', sans-serif;color:#e4532a;transform:scaleX(0.967);">ЗАБОРОНЯЄТЬСЯ:</span>
<span class="t" style="left:1015.5px;top:276.4px;font:700 3.4px/4.1px 'Liberation Sans', sans-serif;color:#ffe6da;transform:scaleX(0.973);">розводити багаття у лісі (окрім тих,</span>
<span class="t" style="left:1015.5px;top:279.8px;font:700 3.4px/4.1px 'Liberation Sans', sans-serif;color:#ffe6da;transform:scaleX(0.888);">що пов’язані з технологічними процесами</span>
<span class="t" style="left:1015.5px;top:283.3px;font:700 3.4px/4.1px 'Liberation Sans', sans-serif;color:#ffe6da;transform:scaleX(0.882);">лісогосподарських заходів у попередньо</span>
<span class="t" style="left:1015.5px;top:286.7px;font:700 3.4px/4.1px 'Liberation Sans', sans-serif;color:#ffe6da;transform:scaleX(0.871);">облаштованих місцях);</span>
<span class="t" style="left:1015.5px;top:291.9px;font:700 3.4px/4.1px 'Liberation Sans', sans-serif;color:#ffe6da;transform:scaleX(0.946);">палити, кидати у лісі непогашені сірники,</span>
<span class="t" style="left:1015.5px;top:295.3px;font:700 3.4px/4.1px 'Liberation Sans', sans-serif;color:#ffe6da;transform:scaleX(0.838);">недопалки, порох, вибивати з люльок гарячий</span>
<span class="t" style="left:1015.5px;top:298.8px;font:700 3.4px/4.1px 'Liberation Sans', sans-serif;color:#ffe6da;transform:scaleX(0.934);">попіл;</span>
<span class="t" style="left:1015.5px;top:304.4px;font:700 3.4px/4.1px 'Liberation Sans', sans-serif;color:#ffe6da;transform:scaleX(0.933);">використовувати піротехніку у лісі або на</span>
<span class="t" style="left:1015.5px;top:307.8px;font:700 3.4px/4.1px 'Liberation Sans', sans-serif;color:#ffe6da;transform:scaleX(0.851);">небезпечній відстані, проводити облаштовані</span>
<span class="t" style="left:1015.5px;top:311.3px;font:700 3.4px/4.1px 'Liberation Sans', sans-serif;color:#ffe6da;transform:scaleX(0.852);">підпалювання, випалювати порубкові</span>
<span class="t" style="left:1015.5px;top:314.7px;font:700 3.4px/4.1px 'Liberation Sans', sans-serif;color:#ffe6da;transform:scaleX(0.902);">рештки поблизу лісу;</span>
<span class="t" style="left:1015.5px;top:319.9px;font:700 3.4px/4.1px 'Liberation Sans', sans-serif;color:#ffe6da;transform:scaleX(0.866);">палити або спричиняти підпалення</span>
<span class="t" style="left:1015.5px;top:323.3px;font:700 3.4px/4.1px 'Liberation Sans', sans-serif;color:#ffe6da;transform:scaleX(0.853);">сухостою чи проводити роботи</span>
<span class="t" style="left:1015.5px;top:326.8px;font:700 3.4px/4.1px 'Liberation Sans', sans-serif;color:#ffe6da;transform:scaleX(0.836);">з порушенням протипожежних застережень</span>
<span class="t" style="left:1015.5px;top:330.2px;font:700 3.4px/4.1px 'Liberation Sans', sans-serif;color:#ffe6da;transform:scaleX(0.926);">(мінералізовані смуги), дорожньої</span>
<span class="t" style="left:1015.5px;top:333.7px;font:700 3.4px/4.1px 'Liberation Sans', sans-serif;color:#ffe6da;transform:scaleX(0.969);">мережі лісів;</span>
<span class="t" style="left:1015.5px;top:338.9px;font:700 3.4px/4.1px 'Liberation Sans', sans-serif;color:#ffe6da;transform:scaleX(0.890);">в’їжджати на територію лісового фонду</span>
<span class="t" style="left:1015.5px;top:342.3px;font:700 3.4px/4.1px 'Liberation Sans', sans-serif;color:#ffe6da;transform:scaleX(0.884);">(окрім транзитних шляхів) транспортними</span>
<span class="t" style="left:1015.5px;top:345.8px;font:700 3.4px/4.1px 'Liberation Sans', sans-serif;color:#ffe6da;transform:scaleX(0.873);">засобами та іншими механізмами,</span>
<span class="t" style="left:1015.5px;top:349.2px;font:700 3.4px/4.1px 'Liberation Sans', sans-serif;color:#ffe6da;transform:scaleX(0.874);">за винятком тих, що використовуються</span>
<span class="t" style="left:1015.5px;top:352.7px;font:700 3.4px/4.1px 'Liberation Sans', sans-serif;color:#ffe6da;transform:scaleX(0.911);">для лісогосподарських робіт.</span>
<span class="t" style="left:836.0px;top:366.9px;font:700 3.1px/3.7px 'Liberation Sans', sans-serif;color:#3c3c3c;transform:scaleX(0.719);">Проєкт «Створення громадської системи протипожежного захисту лісів в Україні»</span>
<span class="t" style="left:836.0px;top:370.3px;font:700 3.1px/3.7px 'Liberation Sans', sans-serif;color:#3c3c3c;transform:scaleX(0.706);">реалізовує ВСЕУКРАЇНСЬКА ЕКОЛОГІЧНА ЛІГА за підтримки Міжнародної програми</span>
<span class="t" style="left:836.0px;top:373.7px;font:700 3.1px/3.7px 'Liberation Sans', sans-serif;color:#3c3c3c;transform:scaleX(0.710);">Лісової служби США (U.S. Forest Service International Programs).</span>
<svg class="b" style="left:367.0px;top:402.0px;" width="280.0" height="202.0" viewBox="0 0 280.0 202.0"><rect width="280.0" height="202.0" fill="#fbfbf7"/><rect width="191" height="168.5" fill="#4aab47"/><rect x="190.5" width="89.5" height="168.5" fill="#1f6d3a"/><defs><clipPath id="gclip"><rect width="191" height="168.5"/></clipPath></defs><g clip-path="url(#gclip)"><circle cx="100" cy="98" r="60" fill="#2a7a36"/><circle cx="43.8" cy="80.0" r="9.0" fill="#2a7a36"/><circle cx="46.3" cy="65.0" r="11.5" fill="#2a7a36"/><circle cx="58.6" cy="56.0" r="14.0" fill="#2a7a36"/><circle cx="67.8" cy="43.8" r="9.0" fill="#2a7a36"/><circle cx="82.9" cy="41.5" r="11.5" fill="#2a7a36"/><circle cx="96.7" cy="35.1" r="14.0" fill="#2a7a36"/><circle cx="111.1" cy="40.0" r="9.0" fill="#2a7a36"/><circle cx="126.3" cy="40.8" r="11.5" fill="#2a7a36"/><circle cx="136.7" cy="51.8" r="14.0" fill="#2a7a36"/><circle cx="149.9" cy="59.5" r="9.0" fill="#2a7a36"/><circle cx="154.0" cy="74.2" r="11.5" fill="#2a7a36"/><circle cx="162.1" cy="87.1" r="14.0" fill="#2a7a36"/><circle cx="158.9" cy="102.0" r="9.0" fill="#2a7a36"/><circle cx="160.0" cy="117.2" r="11.5" fill="#2a7a36"/><circle cx="150.3" cy="128.9" r="14.0" fill="#2a7a36"/><circle cx="144.2" cy="142.9" r="9.0" fill="#2a7a36"/><circle cx="130.1" cy="148.7" r="11.5" fill="#2a7a36"/><circle cx="118.3" cy="158.3" r="14.0" fill="#2a7a36"/><circle cx="103.1" cy="156.9" r="9.0" fill="#2a7a36"/><circle cx="88.2" cy="159.9" r="11.5" fill="#2a7a36"/><circle cx="75.4" cy="151.6" r="14.0" fill="#2a7a36"/><circle cx="60.8" cy="147.3" r="9.0" fill="#2a7a36"/><circle cx="53.3" cy="134.0" r="11.5" fill="#2a7a36"/><circle cx="42.4" cy="123.4" r="14.0" fill="#2a7a36"/><circle cx="41.9" cy="108.2" r="9.0" fill="#2a7a36"/><circle cx="37.1" cy="93.7" r="11.5" fill="#2a7a36"/><circle cx="100" cy="98" r="52" fill="#1c5a2b"/><circle cx="91.7" cy="148.3" r="9.0" fill="#1c5a2b"/><circle cx="76.1" cy="147.5" r="11.5" fill="#1c5a2b"/><circle cx="65.8" cy="135.8" r="14.0" fill="#1c5a2b"/><circle cx="53.1" cy="126.8" r="9.0" fill="#1c5a2b"/><circle cx="50.8" cy="111.3" r="11.5" fill="#1c5a2b"/><circle cx="45.0" cy="96.8" r="14.0" fill="#1c5a2b"/><circle cx="51.4" cy="82.6" r="9.0" fill="#1c5a2b"/><circle cx="54.4" cy="67.3" r="11.5" fill="#1c5a2b"/><circle cx="67.4" cy="58.8" r="14.0" fill="#1c5a2b"/><circle cx="78.2" cy="47.5" r="9.0" fill="#1c5a2b"/><circle cx="93.8" cy="47.4" r="11.5" fill="#1c5a2b"/><circle cx="109.0" cy="43.7" r="14.0" fill="#1c5a2b"/><circle cx="122.2" cy="52.1" r="9.0" fill="#1c5a2b"/><circle cx="136.9" cy="57.2" r="11.5" fill="#1c5a2b"/><circle cx="143.5" cy="71.3" r="14.0" fill="#1c5a2b"/><circle cx="153.1" cy="83.6" r="9.0" fill="#1c5a2b"/><circle cx="151.0" cy="99.1" r="11.5" fill="#1c5a2b"/><circle cx="152.4" cy="114.6" r="14.0" fill="#1c5a2b"/><circle cx="142.3" cy="126.5" r="9.0" fill="#1c5a2b"/><circle cx="135.1" cy="140.3" r="11.5" fill="#1c5a2b"/><circle cx="120.2" cy="144.8" r="14.0" fill="#1c5a2b"/><circle cx="106.7" cy="152.6" r="9.0" fill="#1c5a2b"/><circle cx="100" cy="98" r="43" fill="#143f27"/><circle cx="123.3" cy="63.1" r="9.0" fill="#143f27"/><circle cx="137.6" cy="71.5" r="11.5" fill="#143f27"/><circle cx="140.8" cy="87.9" r="14.0" fill="#143f27"/><circle cx="145.6" cy="103.8" r="9.0" fill="#143f27"/><circle cx="136.9" cy="118.0" r="11.5" fill="#143f27"/><circle cx="129.8" cy="133.0" r="14.0" fill="#143f27"/><circle cx="113.8" cy="137.7" r="9.0" fill="#143f27"/><circle cx="98.4" cy="144.0" r="11.5" fill="#143f27"/><circle cx="83.5" cy="136.6" r="14.0" fill="#143f27"/><circle cx="67.9" cy="130.9" r="9.0" fill="#143f27"/><circle cx="61.8" cy="115.4" r="11.5" fill="#143f27"/><circle cx="54.1" cy="100.7" r="14.0" fill="#143f27"/><circle cx="60.0" cy="85.1" r="9.0" fill="#143f27"/><circle cx="64.3" cy="69.0" r="11.5" fill="#143f27"/><circle cx="79.1" cy="61.6" r="14.0" fill="#143f27"/><circle cx="93.1" cy="52.5" r="9.0" fill="#143f27"/><circle cx="109.1" cy="57.0" r="11.5" fill="#143f27"/><path d="M76 44 l3 -9 l2 4 l3 -11 l3 8 l3 -6 l3 14z M108 40 l3 -8 l3 5 l3 -9 l3 12z M52 60 l3 -8 l3 6 l2 -5 l3 9z M132 56 l3 -7 l3 5 l3 -6 l2 9z" fill="#1d5f2c"/><ellipse cx="100" cy="101" rx="45" ry="48" fill="#0d2216"/><path d="M70 62 l4 -10 l3 5 l4 -12 l4 10 l3 -5 l4 12z M104 58 l4 -9 l3 5 l4 -10 l4 14z" fill="#0d2216"/><path d="M66 72 l3 0 l1 60 l-5 0z M62 84 l6 6 M128 80 l3 0 l1 48 l-5 0z" fill="#2a4a2c" stroke="#2a4a2c"/><path d="M18 84 q16 14 10 50 M172 96 q-10 20 -2 44" stroke="#8fd08a" stroke-width="1" fill="none"/><path d="M-1.5 170 C-8.2 150.1 6.6 144.3 4.4 129.0 C10.7 134.7 12.8 121.6 16.1 113.0 C16.6 124.4 23.3 134.7 20.1 146.1 C25.5 144.3 28.7 152.9 25.5 170 Z" fill="#f36f28"/><path d="M4.4 170 C1.2 155.8 10.7 152.9 10.7 140.4 C15.2 147.2 20.1 155.8 19.0 170 Z" fill="#f89a4e"/><path d="M8.8 170 C6.6 162.0 12.5 160.9 12.5 152.9 C14.7 158.6 16.9 163.2 15.8 170 Z" fill="#fde0b4"/><path d="M25.0 170 C19.5 156.0 31.6 152.0 29.8 141.2 C34.9 145.2 31.2 136.0 33.8 130.0 C34.2 138.0 45.2 145.2 42.6 153.2 C47.0 152.0 49.6 158.0 47.0 170 Z" fill="#f36f28"/><path d="M29.8 170 C27.2 160.0 34.9 158.0 34.9 149.2 C38.6 154.0 42.6 160.0 41.7 170 Z" fill="#f89a4e"/><path d="M33.4 170 C31.6 164.4 36.4 163.6 36.4 158.0 C38.2 162.0 40.0 165.2 39.1 170 Z" fill="#fde0b4"/><path d="M46.0 170 C40.0 159.2 53.2 156.1 51.3 147.7 C56.8 150.8 58.0 143.7 60.9 139.0 C61.4 145.2 68.1 150.8 65.2 157.0 C70.0 156.1 72.9 160.7 70.0 170 Z" fill="#f36f28"/><path d="M51.3 170 C48.4 162.2 56.8 160.7 56.8 153.9 C60.9 157.6 65.2 162.2 64.2 170 Z" fill="#f89a4e"/><path d="M55.1 170 C53.2 165.7 58.5 165.0 58.5 160.7 C60.4 163.8 62.3 166.3 61.4 170 Z" fill="#fde0b4"/><path d="M70.0 170 C65.5 161.6 75.4 159.2 74.0 152.7 C78.1 155.1 75.0 149.6 77.2 146.0 C77.6 150.8 86.6 155.1 84.4 159.9 C88.0 159.2 90.2 162.8 88.0 170 Z" fill="#f36f28"/><path d="M74.0 170 C71.8 164.0 78.1 162.8 78.1 157.5 C81.2 160.4 84.4 164.0 83.7 170 Z" fill="#f89a4e"/><path d="M76.8 170 C75.4 166.6 79.4 166.2 79.4 162.8 C80.8 165.2 82.2 167.1 81.5 170 Z" fill="#fde0b4"/><path d="M86.0 170 C80.0 160.6 93.2 157.8 91.3 150.6 C96.8 153.3 97.5 147.1 100.4 143.0 C100.9 148.4 108.1 153.3 105.2 158.7 C110.0 157.8 112.9 161.9 110.0 170 Z" fill="#f36f28"/><path d="M91.3 170 C88.4 163.2 96.8 161.9 96.8 156.0 C100.9 159.2 105.2 163.2 104.2 170 Z" fill="#f89a4e"/><path d="M95.1 170 C93.2 166.2 98.5 165.7 98.5 161.9 C100.4 164.6 102.3 166.8 101.4 170 Z" fill="#fde0b4"/><path d="M111.0 170 C104.5 159.2 118.8 156.1 116.7 147.7 C122.7 150.8 117.8 143.7 120.9 139.0 C121.4 145.2 134.9 150.8 131.8 157.0 C137.0 156.1 140.1 160.7 137.0 170 Z" fill="#f36f28"/><path d="M116.7 170 C113.6 162.2 122.7 160.7 122.7 153.9 C127.1 157.6 131.8 162.2 130.8 170 Z" fill="#f89a4e"/><path d="M120.9 170 C118.8 165.7 124.5 165.0 124.5 160.7 C126.6 163.8 128.7 166.3 127.6 170 Z" fill="#fde0b4"/><path d="M137.0 170 C132.5 159.8 142.4 156.9 141.0 149.1 C145.1 152.0 145.6 145.3 147.8 141.0 C148.2 146.8 153.6 152.0 151.4 157.8 C155.0 156.9 157.2 161.3 155.0 170 Z" fill="#f36f28"/><path d="M141.0 170 C138.8 162.8 145.1 161.3 145.1 154.9 C148.2 158.4 151.4 162.8 150.7 170 Z" fill="#f89a4e"/><path d="M143.8 170 C142.4 165.9 146.4 165.4 146.4 161.3 C147.8 164.2 149.2 166.5 148.5 170 Z" fill="#fde0b4"/><path d="M151.5 170 C145.8 156.0 158.4 152.0 156.6 141.2 C161.8 145.2 157.9 136.0 160.7 130.0 C161.2 138.0 172.7 145.2 169.9 153.2 C174.5 152.0 177.3 158.0 174.5 170 Z" fill="#f36f28"/><path d="M156.6 170 C153.8 160.0 161.8 158.0 161.8 149.2 C165.8 154.0 169.9 160.0 169.0 170 Z" fill="#f89a4e"/><path d="M160.2 170 C158.4 164.4 163.5 163.6 163.5 158.0 C165.3 162.0 167.1 165.2 166.2 170 Z" fill="#fde0b4"/><path d="M170.5 170 C164.2 150.1 178.0 144.3 176.0 129.0 C181.8 134.7 183.0 121.6 186.0 113.0 C186.5 124.4 193.5 134.7 190.5 146.1 C195.5 144.3 198.5 152.9 195.5 170 Z" fill="#f36f28"/><path d="M176.0 170 C173.0 155.8 181.8 152.9 181.8 140.4 C186.0 147.2 190.5 155.8 189.5 170 Z" fill="#f89a4e"/><path d="M180.0 170 C178.0 162.0 183.5 160.9 183.5 152.9 C185.5 158.6 187.5 163.2 186.5 170 Z" fill="#fde0b4"/><path d="M18.0 170 C15.0 163.0 21.6 161.0 20.6 155.6 C23.4 157.6 23.8 153.0 25.2 150.0 C25.4 154.0 29.0 157.6 27.6 161.6 C30.0 161.0 31.4 164.0 30.0 170 Z" fill="#f58a3a"/><path d="M20.6 170 C19.2 165.0 23.4 164.0 23.4 159.6 C25.4 162.0 27.6 165.0 27.1 170 Z" fill="#fbc58a"/><path d="M22.6 170 C21.6 167.2 24.2 166.8 24.2 164.0 C25.2 166.0 26.2 167.6 25.7 170 Z" fill="#fdebc8"/><path d="M41.5 170 C38.8 164.4 44.8 162.8 43.9 158.5 C46.5 160.1 44.6 156.4 45.9 154.0 C46.1 157.2 51.6 160.1 50.3 163.3 C52.5 162.8 53.8 165.2 52.5 170 Z" fill="#f58a3a"/><path d="M43.9 170 C42.6 166.0 46.5 165.2 46.5 161.7 C48.3 163.6 50.3 166.0 49.9 170 Z" fill="#fbc58a"/><path d="M45.7 170 C44.8 167.8 47.2 167.4 47.2 165.2 C48.1 166.8 49.0 168.1 48.5 170 Z" fill="#fdebc8"/><path d="M63.0 170 C60.5 165.1 66.0 163.7 65.2 159.9 C67.5 161.3 67.8 158.1 69.0 156.0 C69.2 158.8 72.2 161.3 71.0 164.1 C73.0 163.7 74.2 165.8 73.0 170 Z" fill="#f58a3a"/><path d="M65.2 170 C64.0 166.5 67.5 165.8 67.5 162.7 C69.2 164.4 71.0 166.5 70.6 170 Z" fill="#fbc58a"/><path d="M66.8 170 C66.0 168.0 68.2 167.8 68.2 165.8 C69.0 167.2 69.8 168.3 69.4 170 Z" fill="#fdebc8"/><path d="M83.0 170 C80.5 165.4 86.0 164.2 85.2 160.6 C87.5 161.9 86.8 158.9 88.0 157.0 C88.2 159.6 92.2 161.9 91.0 164.5 C93.0 164.2 94.2 166.1 93.0 170 Z" fill="#f58a3a"/><path d="M85.2 170 C84.0 166.8 87.5 166.1 87.5 163.2 C89.2 164.8 91.0 166.8 90.6 170 Z" fill="#fbc58a"/><path d="M86.8 170 C86.0 168.2 88.2 167.9 88.2 166.1 C89.0 167.4 89.8 168.4 89.4 170 Z" fill="#fdebc8"/><path d="M105.5 170 C102.8 164.8 108.8 163.2 107.9 159.2 C110.5 160.7 110.8 157.2 112.1 155.0 C112.3 158.0 115.6 160.7 114.3 163.7 C116.5 163.2 117.8 165.5 116.5 170 Z" fill="#f58a3a"/><path d="M107.9 170 C106.6 166.2 110.5 165.5 110.5 162.2 C112.3 164.0 114.3 166.2 113.9 170 Z" fill="#fbc58a"/><path d="M109.7 170 C108.8 167.9 111.2 167.6 111.2 165.5 C112.1 167.0 113.0 168.2 112.5 170 Z" fill="#fdebc8"/><path d="M130.0 170 C127.5 164.4 133.0 162.8 132.2 158.5 C134.5 160.1 132.8 156.4 134.0 154.0 C134.2 157.2 139.2 160.1 138.0 163.3 C140.0 162.8 141.2 165.2 140.0 170 Z" fill="#f58a3a"/><path d="M132.2 170 C131.0 166.0 134.5 165.2 134.5 161.7 C136.2 163.6 138.0 166.0 137.6 170 Z" fill="#fbc58a"/><path d="M133.8 170 C133.0 167.8 135.2 167.4 135.2 165.2 C136.0 166.8 136.8 168.1 136.4 170 Z" fill="#fdebc8"/><path d="M149.0 170 C146.5 164.1 152.0 162.3 151.2 157.8 C153.5 159.5 153.8 155.6 155.0 153.0 C155.2 156.4 158.2 159.5 157.0 162.9 C159.0 162.3 160.2 164.9 159.0 170 Z" fill="#f58a3a"/><path d="M151.2 170 C150.0 165.8 153.5 164.9 153.5 161.2 C155.2 163.2 157.0 165.8 156.6 170 Z" fill="#fbc58a"/><path d="M152.8 170 C152.0 167.6 154.2 167.3 154.2 164.9 C155.0 166.6 155.8 168.0 155.4 170 Z" fill="#fdebc8"/><path d="M167.5 170 C164.8 162.3 170.8 160.1 169.9 154.2 C172.4 156.4 170.6 151.3 171.9 148.0 C172.1 152.4 177.6 156.4 176.3 160.8 C178.5 160.1 179.8 163.4 178.5 170 Z" fill="#f58a3a"/><path d="M169.9 170 C168.6 164.5 172.4 163.4 172.4 158.6 C174.3 161.2 176.3 164.5 175.9 170 Z" fill="#fbc58a"/><path d="M171.7 170 C170.8 166.9 173.2 166.5 173.2 163.4 C174.1 165.6 175.0 167.4 174.5 170 Z" fill="#fdebc8"/><path d="M58 122 q-3 -9 6 -10 l22 -1 l4 -9 l-3 -4 l3 0 l1 -4 l2 4 l4 1 l-1 4 l-3 2 l-1 12 q-1 6 -4 8 l0 20 l-2 0 l-2 -18 l-14 1 l-3 17 l-2 0 l0 -16 q-6 -2 -7 -7z" fill="#fff"/><path d="M90 98 q-6 -6 -4 -12 m4 12 q-2 -8 2 -13 M93 98 q6 -4 6 -12 m-6 12 q8 -2 10 -8" stroke="#fff" stroke-width="1.3" fill="none"/><path d="M100 112 l-2 -4 l3 1 l2 -3 l1 4 l2 2 l-2 3 l2 6 l16 2 q5 2 4 8 l0 12 l-1.600 0 l-1.400 -11 l-12 -1 l-1 12 l-1.600 0 l-.4 -13 q-4 -3 -5 -10z" fill="#fff"/></g><rect y="168.5" width="191" height="6" fill="#fbfbf7"/><rect x="191" y="40" width="89.0" height="22.5" fill="#fbfbf7"/><circle cx="190.5" cy="52" r="8.6" fill="#fff" stroke="#d8232a" stroke-width="1.89"/><path d="M190.21333333333334 47.03111111111111 q3.2488888888888887 3.057777777777778 1.528888888888889 6.306666666666666 q-1.528888888888889 1.4333333333333331 -3.2488888888888887 0 q-1.528888888888889 -2.4844444444444442 0.9555555555555555 -3.822222222222222 q-0.19111111111111112 -1.3377777777777775 0.7644444444444445 -2.4844444444444442z" fill="#222"/><path d="M186.48666666666668 55.248888888888885 l8.026666666666667 1.72 M194.51333333333332 55.248888888888885 l-8.026666666666667 1.72" stroke="#222" stroke-width="1.24"/><path d="M184.652 46.152 L196.348 57.848" stroke="#d8232a" stroke-width="1.72"/><rect x="258" y="44.5" width="14.5" height="14.5" fill="#fff"/><rect x="258.00" y="44.50" width="1.61" height="1.61" fill="#4f86c6"/><rect x="259.61" y="44.50" width="1.61" height="1.61" fill="#4f86c6"/><rect x="261.22" y="44.50" width="1.61" height="1.61" fill="#4f86c6"/><rect x="264.44" y="44.50" width="1.61" height="1.61" fill="#4f86c6"/><rect x="267.67" y="44.50" width="1.61" height="1.61" fill="#4f86c6"/><rect x="269.28" y="44.50" width="1.61" height="1.61" fill="#4f86c6"/><rect x="270.89" y="44.50" width="1.61" height="1.61" fill="#4f86c6"/><rect x="258.00" y="46.11" width="1.61" height="1.61" fill="#4f86c6"/><rect x="261.22" y="46.11" width="1.61" height="1.61" fill="#4f86c6"/><rect x="266.06" y="46.11" width="1.61" height="1.61" fill="#4f86c6"/><rect x="267.67" y="46.11" width="1.61" height="1.61" fill="#4f86c6"/><rect x="270.89" y="46.11" width="1.61" height="1.61" fill="#4f86c6"/><rect x="258.00" y="47.72" width="1.61" height="1.61" fill="#4f86c6"/><rect x="259.61" y="47.72" width="1.61" height="1.61" fill="#4f86c6"/><rect x="261.22" y="47.72" width="1.61" height="1.61" fill="#4f86c6"/><rect x="264.44" y="47.72" width="1.61" height="1.61" fill="#4f86c6"/><rect x="267.67" y="47.72" width="1.61" height="1.61" fill="#4f86c6"/><rect x="269.28" y="47.72" width="1.61" height="1.61" fill="#4f86c6"/><rect x="270.89" y="47.72" width="1.61" height="1.61" fill="#4f86c6"/><rect x="262.83" y="49.33" width="1.61" height="1.61" fill="#4f86c6"/><rect x="266.06" y="49.33" width="1.61" height="1.61" fill="#4f86c6"/><rect x="258.00" y="50.94" width="1.61" height="1.61" fill="#4f86c6"/><rect x="259.61" y="50.94" width="1.61" height="1.61" fill="#4f86c6"/><rect x="262.83" y="50.94" width="1.61" height="1.61" fill="#4f86c6"/><rect x="264.44" y="50.94" width="1.61" height="1.61" fill="#4f86c6"/><rect x="267.67" y="50.94" width="1.61" height="1.61" fill="#4f86c6"/><rect x="270.89" y="50.94" width="1.61" height="1.61" fill="#4f86c6"/><rect x="261.22" y="52.56" width="1.61" height="1.61" fill="#4f86c6"/><rect x="264.44" y="52.56" width="1.61" height="1.61" fill="#4f86c6"/><rect x="266.06" y="52.56" width="1.61" height="1.61" fill="#4f86c6"/><rect x="269.28" y="52.56" width="1.61" height="1.61" fill="#4f86c6"/><rect x="258.00" y="54.17" width="1.61" height="1.61" fill="#4f86c6"/><rect x="259.61" y="54.17" width="1.61" height="1.61" fill="#4f86c6"/><rect x="261.22" y="54.17" width="1.61" height="1.61" fill="#4f86c6"/><rect x="266.06" y="54.17" width="1.61" height="1.61" fill="#4f86c6"/><rect x="269.28" y="54.17" width="1.61" height="1.61" fill="#4f86c6"/><rect x="270.89" y="54.17" width="1.61" height="1.61" fill="#4f86c6"/><rect x="258.00" y="55.78" width="1.61" height="1.61" fill="#4f86c6"/><rect x="261.22" y="55.78" width="1.61" height="1.61" fill="#4f86c6"/><rect x="264.44" y="55.78" width="1.61" height="1.61" fill="#4f86c6"/><rect x="267.67" y="55.78" width="1.61" height="1.61" fill="#4f86c6"/><rect x="258.00" y="57.39" width="1.61" height="1.61" fill="#4f86c6"/><rect x="259.61" y="57.39" width="1.61" height="1.61" fill="#4f86c6"/><rect x="261.22" y="57.39" width="1.61" height="1.61" fill="#4f86c6"/><rect x="264.44" y="57.39" width="1.61" height="1.61" fill="#4f86c6"/><rect x="266.06" y="57.39" width="1.61" height="1.61" fill="#4f86c6"/><rect x="269.28" y="57.39" width="1.61" height="1.61" fill="#4f86c6"/><rect x="270.89" y="57.39" width="1.61" height="1.61" fill="#4f86c6"/><circle cx="199" cy="93.5" r=".55" fill="#d8f0d8"/><circle cx="199" cy="110.5" r=".55" fill="#d8f0d8"/><circle cx="199" cy="135" r=".55" fill="#d8f0d8"/><circle cx="199" cy="146" r=".55" fill="#d8f0d8"/><rect x="88" y="199" width="103" height="1.400" fill="#111"/><path d="M190.5 188.5 q-0.5 -8.0 1.5 -13.0" stroke="#efc36a" stroke-width="1.3" fill="none"/><circle cx="193.0" cy="186.5" r="3.3" fill="#3f9a5c"/><circle cx="191.0" cy="188.0" r="2.0" fill="#4aa866"/><circle cx="192.0" cy="190.5" r="1.9" fill="#e2643c"/><rect x="187.5" y="193.0" width="8.0" height="1.3" fill="#b9c4c0"/><circle cx="222.0" cy="182.0" r="2.4" fill="#f3b46a"/><ellipse cx="217" cy="187.0" rx="7.8" ry="4.6" fill="#6fae3c" transform="rotate(-12 217 187.0)"/><path d="M211.0 188.5 q6.0 -1.0 11.0 -5.0" stroke="#d9ecc0" stroke-width="1.1" fill="none"/><path d="M214.0 182.5 q3.0 -2.0 6.0 -1.0" stroke="#7a8fb8" stroke-width="1.0" fill="none"/><rect x="209.5" y="193.1" width="15.0" height="1.0" fill="#a9b4b0"/><path d="M239.4 179.5 h5.2 l-1.3 4.7 l4.7 -1.3 v5.2 l-4.7 -1.3 l1.3 4.7 h-5.2 l1.3 -4.7 l-4.7 1.3 v-5.2 l4.7 1.3z" fill="#d46a22"/><circle cx="242" cy="185.5" r="2.0" fill="#4a8f8c"/><path d="M259.4 180.0 q2.8 1.2 5.6 -1.0 q2.8 2.2 5.6 1.0 v6.5 q0 3.5 -5.6 5.5 q-5.6 -2.0 -5.6 -5.5z" fill="#2d5a1e"/><path d="M265 182.0 l2.6 5.5 h-5.2z" fill="#c9cb45"/><rect x="261.5" y="188.3" width="7.0" height="1.2" fill="#c9cb45"/></svg>
<span class="t" style="left:376.5px;top:409.1px;font:700 14.6px/17.5px 'Liberation Sans', sans-serif;color:#fcfff8;transform:scaleX(0.803);-webkit-text-stroke:.45px #fcfff8;">ЗБЕРЕЖЕМО ЖИВУ ПРИРОДУ</span>
<span class="t" style="left:425.5px;top:422.9px;font:700 14.6px/17.5px 'Liberation Sans', sans-serif;color:#fcfff8;transform:scaleX(0.857);-webkit-text-stroke:.45px #fcfff8;">ВІД ВОГНЮ!</span>
<span class="t" style="left:565.5px;top:410.1px;font:700 4.2px/5.0px 'Liberation Sans', sans-serif;color:#fff;transform:scaleX(1.024);">ЯКЩО БАЧИТЕ ПАЛАЮЧИЙ ЛІС –</span>
<span class="t" style="left:565.5px;top:415.6px;font:700 5.6px/6.7px 'Liberation Sans', sans-serif;color:#fff;transform:scaleX(0.990);">ТЕЛЕФОНУЙТЕ 101</span>
<span class="t" style="left:565.5px;top:421.7px;font:700 5.6px/6.7px 'Liberation Sans', sans-serif;color:#fff;transform:scaleX(1.026);">або (03547) 2-37-32</span>
<span class="t" style="left:565.5px;top:428.6px;font:700 3.8px/4.6px 'Liberation Sans', sans-serif;color:#e8f2ea;">(МІСЦЕВА ПОЖЕЖНА КОМАНДА,</span>
<span class="t" style="left:565.5px;top:433.1px;font:700 3.8px/4.6px 'Liberation Sans', sans-serif;color:#e8f2ea;transform:scaleX(1.127);">с. КОЗЛІВ)</span>
<span class="t" style="left:572.0px;top:445.3px;font:700 5.2px/6.2px 'Liberation Sans', sans-serif;color:#e0342b;transform:scaleX(0.905);">Дізнатись більше</span>
<span class="t" style="left:572.0px;top:450.9px;font:700 5.2px/6.2px 'Liberation Sans', sans-serif;color:#e0342b;transform:scaleX(0.894);">на сайті ДСНС:</span>
<span class="t" style="left:572.0px;top:457.5px;font:700 3.2px/3.8px 'Liberation Sans', sans-serif;color:#e0342b;transform:scaleX(1.059);">www.dsns.gov.ua/ua</span>
<span class="t" style="left:565.5px;top:472.7px;font:700 5.4px/6.5px 'Liberation Sans', sans-serif;color:#fff;transform:scaleX(1.015);">НАСЛІДКИ ВІД ЛІСОВИХ</span>
<span class="t" style="left:565.5px;top:478.7px;font:700 5.4px/6.5px 'Liberation Sans', sans-serif;color:#fff;transform:scaleX(1.057);">ПОЖЕЖ ДЛЯ ДОВКІЛЛЯ:</span>
<span class="t" style="left:568.5px;top:490.5px;font:700 3.3px/4.0px 'Liberation Sans', sans-serif;color:#dff0df;transform:scaleX(1.016);">Втрата біорізноманіття – у вогні гинуть</span>
<span class="t" style="left:568.5px;top:493.8px;font:700 3.3px/4.0px 'Liberation Sans', sans-serif;color:#dff0df;transform:scaleX(1.016);">звірі, земноводні та плазуни, комахи.</span>
<span class="t" style="left:568.5px;top:497.1px;font:700 3.3px/4.0px 'Liberation Sans', sans-serif;color:#dff0df;transform:scaleX(0.972);">Вогонь знищує місця гніздування птахів.</span>
<span class="t" style="left:568.5px;top:500.4px;font:700 3.3px/4.0px 'Liberation Sans', sans-serif;color:#dff0df;transform:scaleX(0.877);">Особливо страждають новонароджені</span>
<span class="t" style="left:568.5px;top:503.7px;font:700 3.3px/4.0px 'Liberation Sans', sans-serif;color:#dff0df;transform:scaleX(1.010);">створіння та дитинчата звірів.</span>
<span class="t" style="left:568.5px;top:510.5px;font:700 3.3px/4.0px 'Liberation Sans', sans-serif;color:#dff0df;transform:scaleX(0.895);">Разом з природною рослинністю може</span>
<span class="t" style="left:568.5px;top:513.8px;font:700 3.3px/4.0px 'Liberation Sans', sans-serif;color:#dff0df;transform:scaleX(0.965);">горіти сміття, яке залишили люди</span>
<span class="t" style="left:568.5px;top:517.1px;font:700 3.3px/4.0px 'Liberation Sans', sans-serif;color:#dff0df;transform:scaleX(1.022);">в лісі (пластикові пляшки, поліетилен).</span>
<span class="t" style="left:568.5px;top:520.4px;font:700 3.3px/4.0px 'Liberation Sans', sans-serif;color:#dff0df;transform:scaleX(0.945);">Цей дим є отруйним та може містити</span>
<span class="t" style="left:568.5px;top:523.7px;font:700 3.3px/4.0px 'Liberation Sans', sans-serif;color:#dff0df;transform:scaleX(0.994);">органічні речовини, а саме багато</span>
<span class="t" style="left:568.5px;top:527.0px;font:700 3.3px/4.0px 'Liberation Sans', sans-serif;color:#dff0df;transform:scaleX(0.922);">фенольних сполук, що мають мутагенні</span>
<span class="t" style="left:568.5px;top:530.3px;font:700 3.3px/4.0px 'Liberation Sans', sans-serif;color:#dff0df;transform:scaleX(1.012);">і канцерогенні властивості.</span>
<span class="t" style="left:568.5px;top:535.0px;font:700 3.3px/4.0px 'Liberation Sans', sans-serif;color:#dff0df;transform:scaleX(0.926);">Після пожежі є причиною вигорання</span>
<span class="t" style="left:568.5px;top:538.3px;font:700 3.3px/4.0px 'Liberation Sans', sans-serif;color:#dff0df;">трав’янистої підстилки та частково кори.</span>
<span class="t" style="left:568.5px;top:546.0px;font:700 3.3px/4.0px 'Liberation Sans', sans-serif;color:#dff0df;transform:scaleX(0.924);">Вигорання торфу завдає величезної</span>
<span class="t" style="left:568.5px;top:549.3px;font:700 3.3px/4.0px 'Liberation Sans', sans-serif;color:#dff0df;transform:scaleX(0.966);">шкоди лісу: погіршується родючість ґрунту,</span>
<span class="t" style="left:568.5px;top:552.6px;font:700 3.3px/4.0px 'Liberation Sans', sans-serif;color:#dff0df;transform:scaleX(0.928);">така пожежа поширюється повільно та є</span>
<span class="t" style="left:568.5px;top:555.9px;font:700 3.3px/4.0px 'Liberation Sans', sans-serif;color:#dff0df;transform:scaleX(0.987);">дуже складною у гасінні.</span>
<span class="t" style="left:373.0px;top:581.5px;font:700 3.3px/4.0px 'Liberation Sans', sans-serif;color:#3c3c3c;transform:scaleX(1.016);">Проєкт «Створення громадської системи протипожежного захисту лісів в Україні»</span>
<span class="t" style="left:373.0px;top:585.1px;font:700 3.3px/4.0px 'Liberation Sans', sans-serif;color:#3c3c3c;">реалізовує ВСЕУКРАЇНСЬКА ЕКОЛОГІЧНА ЛІГА за підтримки Міжнародної програми</span>
<span class="t" style="left:373.0px;top:588.7px;font:700 3.3px/4.0px 'Liberation Sans', sans-serif;color:#3c3c3c;">Лісової служби США (U.S. Forest Service International Programs).</span>
<svg class="b" style="left:662.5px;top:402.0px;" width="272.0" height="199.0" viewBox="0 0 272.0 199.0"><rect width="272.0" height="199.0" fill="#fbfbf7"/><rect width="186" height="170" fill="#3a92d6"/><rect x="185.500" width="86.5" height="170" fill="#1f59ad"/><path d="M0 83.500 h34 q17 0 17 17 v17 q0 17 -17 17 h-34z" fill="#1b3f8c"/><path d="M26 86 l2 20 M34 88 l-3 22 M40 92 l-4 18" stroke="#0e1f4a" stroke-width="1.600"/><circle cx="30" cy="112" r="6" fill="#dfe6f2"/><circle cx="38" cy="118" r="7" fill="#eef2f8"/><circle cx="26" cy="122" r="7" fill="#cfd9ea"/><circle cx="44" cy="126" r="5" fill="#e4eaf4"/><circle cx="34" cy="128" r="6" fill="#f3f5fa"/><path d="M4 133 l1 -18 q0 -8 6 -9 q6 1 6 9 l1 18z" fill="#f3b02c"/><circle cx="11" cy="101" r="3.200" fill="#f8dcb4"/><path d="M7.200 100.500 q0 -4.500 3.800 -4.500 q3.800 0 3.800 4.500z" fill="#f1c330"/><path d="M14 112 l12 -6 l1 2 l-12 7z" fill="#d98b1e"/><rect x="5" y="108" width="4" height="12" rx="1.500" fill="#c7791a"/><path d="M0 142 h189 q14 0 14 14 q0 14 -14 14 h-189z" fill="#e8562a"/><path d="M100 170 q-4 -18 6 -26 q2 10 8 8 q0 -12 8 -16 q0 12 8 14 q2 -10 8 -12 q0 14 8 18 q4 -8 10 -6 q-2 8 4 12 q6 -8 12 -6 q0 8 6 14z" fill="#f6a03a" opacity=".85"/><path d="M112 144 v20" stroke="#3a1a12" stroke-width="1.600" opacity=".75"/><path d="M128 144 v20" stroke="#3a1a12" stroke-width="1.600" opacity=".75"/><path d="M141 144 v20" stroke="#3a1a12" stroke-width="1.600" opacity=".75"/><path d="M154 144 v20" stroke="#3a1a12" stroke-width="1.600" opacity=".75"/><path d="M168 144 v20" stroke="#3a1a12" stroke-width="1.600" opacity=".75"/><path d="M178 144 v20" stroke="#3a1a12" stroke-width="1.600" opacity=".75"/><path d="M0 160 q40 -3 96 2 v8 h-96z" fill="#d9431f"/><g transform="translate(14 166) scale(1.15 1.15)"><path d="M-3 0 l1 -9 l4 0 l1 9 l-2 0 l-1 -7 l-1 7z" fill="#f29a2c"/><path d="M-3.500 -9 q-.5 -7 3.500 -7.500 q4 .5 3.500 7.500z" fill="#f29a2c"/><path d="M2 -14 l6 2 l0 1.500 l-6 -1z" fill="#f29a2c"/><circle cx="0" cy="-18.500" r="2.300" fill="#f6d9b8"/><path d="M-2.800 -19 q0 -3 2.800 -3 q2.800 0 2.800 3z" fill="#e6c23a"/></g><path d="M22 152 l14 -1" stroke="#f2e6d8" stroke-width=".8"/><g transform="translate(31 166) scale(1.15 1.15)"><path d="M-3 0 l1 -9 l4 0 l1 9 l-2 0 l-1 -7 l-1 7z" fill="#f29a2c"/><path d="M-3.500 -9 q-.5 -7 3.500 -7.500 q4 .5 3.500 7.500z" fill="#f29a2c"/><path d="M2 -14 l6 2 l0 1.500 l-6 -1z" fill="#f29a2c"/><circle cx="0" cy="-18.500" r="2.300" fill="#f6d9b8"/><path d="M-2.800 -19 q0 -3 2.800 -3 q2.800 0 2.800 3z" fill="#e6c23a"/></g><path d="M39 152 l14 -1" stroke="#f2e6d8" stroke-width=".8"/><g transform="translate(45 166) scale(1.15 1.15)"><path d="M-3 0 l1 -9 l4 0 l1 9 l-2 0 l-1 -7 l-1 7z" fill="#f29a2c"/><path d="M-3.500 -9 q-.5 -7 3.500 -7.500 q4 .5 3.500 7.500z" fill="#f29a2c"/><path d="M2 -14 l6 2 l0 1.500 l-6 -1z" fill="#f29a2c"/><circle cx="0" cy="-18.500" r="2.300" fill="#f6d9b8"/><path d="M-2.800 -19 q0 -3 2.800 -3 q2.800 0 2.800 3z" fill="#e6c23a"/></g><path d="M53 152 l14 -1" stroke="#f2e6d8" stroke-width=".8"/><g transform="translate(100 167) scale(-1.2 1.2)"><path d="M-3 0 l1 -9 l4 0 l1 9 l-2 0 l-1 -7 l-1 7z" fill="#1e2230"/><path d="M-3.500 -9 q-.5 -7 3.500 -7.500 q4 .5 3.500 7.500z" fill="#1e2230"/><path d="M2 -14 l6 2 l0 1.500 l-6 -1z" fill="#1e2230"/><circle cx="0" cy="-18.500" r="2.300" fill="#f6d9b8"/><path d="M-2.800 -19 q0 -3 2.800 -3 q2.800 0 2.800 3z" fill="#e6c23a"/></g><g transform="translate(130 167) scale(-1.2 1.2)"><path d="M-3 0 l1 -9 l4 0 l1 9 l-2 0 l-1 -7 l-1 7z" fill="#1e2230"/><path d="M-3.500 -9 q-.5 -7 3.500 -7.500 q4 .5 3.500 7.500z" fill="#1e2230"/><path d="M2 -14 l6 2 l0 1.500 l-6 -1z" fill="#1e2230"/><circle cx="0" cy="-18.500" r="2.300" fill="#f6d9b8"/><path d="M-2.800 -19 q0 -3 2.800 -3 q2.800 0 2.800 3z" fill="#e6c23a"/></g><g transform="translate(166 167) scale(1.2 1.2)"><path d="M-3 0 l1 -9 l4 0 l1 9 l-2 0 l-1 -7 l-1 7z" fill="#1e2230"/><path d="M-3.500 -9 q-.5 -7 3.500 -7.500 q4 .5 3.500 7.500z" fill="#1e2230"/><path d="M2 -14 l6 2 l0 1.500 l-6 -1z" fill="#1e2230"/><circle cx="0" cy="-18.500" r="2.300" fill="#f6d9b8"/><path d="M-2.800 -19 q0 -3 2.800 -3 q2.800 0 2.800 3z" fill="#e6c23a"/></g><ellipse cx="84" cy="158" rx="9" ry="5" fill="#f3ede4" opacity=".9"/><ellipse cx="140" cy="160" rx="8" ry="5" fill="#f3ede4" opacity=".85"/><ellipse cx="116" cy="156" rx="5" ry="3.500" fill="#f3ede4" opacity=".8"/><rect x="186" y="37.500" width="86.0" height="24.500" fill="#fbfbf7"/><circle cx="186.5" cy="50.5" r="9.2" fill="#fff" stroke="#d8232a" stroke-width="2.02"/><path d="M186.19333333333333 45.184444444444445 q3.4755555555555553 3.271111111111111 1.6355555555555554 6.746666666666666 q-1.6355555555555554 1.5333333333333332 -3.4755555555555553 0 q-1.6355555555555554 -2.6577777777777776 1.0222222222222221 -4.088888888888889 q-0.20444444444444443 -1.431111111111111 0.8177777777777777 -2.6577777777777776z" fill="#222"/><path d="M182.20666666666668 53.97555555555556 l8.586666666666666 1.8399999999999999 M190.79333333333332 53.97555555555556 l-8.586666666666666 1.8399999999999999" stroke="#222" stroke-width="1.33"/><path d="M180.244 44.244 L192.756 56.756" stroke="#d8232a" stroke-width="1.84"/><rect x="249.5" y="43" width="14.5" height="14.5" fill="#fff"/><rect x="249.50" y="43.00" width="1.61" height="1.61" fill="#4a7cc0"/><rect x="251.11" y="43.00" width="1.61" height="1.61" fill="#4a7cc0"/><rect x="252.72" y="43.00" width="1.61" height="1.61" fill="#4a7cc0"/><rect x="255.94" y="43.00" width="1.61" height="1.61" fill="#4a7cc0"/><rect x="259.17" y="43.00" width="1.61" height="1.61" fill="#4a7cc0"/><rect x="260.78" y="43.00" width="1.61" height="1.61" fill="#4a7cc0"/><rect x="262.39" y="43.00" width="1.61" height="1.61" fill="#4a7cc0"/><rect x="249.50" y="44.61" width="1.61" height="1.61" fill="#4a7cc0"/><rect x="252.72" y="44.61" width="1.61" height="1.61" fill="#4a7cc0"/><rect x="257.56" y="44.61" width="1.61" height="1.61" fill="#4a7cc0"/><rect x="259.17" y="44.61" width="1.61" height="1.61" fill="#4a7cc0"/><rect x="262.39" y="44.61" width="1.61" height="1.61" fill="#4a7cc0"/><rect x="249.50" y="46.22" width="1.61" height="1.61" fill="#4a7cc0"/><rect x="251.11" y="46.22" width="1.61" height="1.61" fill="#4a7cc0"/><rect x="252.72" y="46.22" width="1.61" height="1.61" fill="#4a7cc0"/><rect x="255.94" y="46.22" width="1.61" height="1.61" fill="#4a7cc0"/><rect x="259.17" y="46.22" width="1.61" height="1.61" fill="#4a7cc0"/><rect x="260.78" y="46.22" width="1.61" height="1.61" fill="#4a7cc0"/><rect x="262.39" y="46.22" width="1.61" height="1.61" fill="#4a7cc0"/><rect x="254.33" y="47.83" width="1.61" height="1.61" fill="#4a7cc0"/><rect x="257.56" y="47.83" width="1.61" height="1.61" fill="#4a7cc0"/><rect x="249.50" y="49.44" width="1.61" height="1.61" fill="#4a7cc0"/><rect x="251.11" y="49.44" width="1.61" height="1.61" fill="#4a7cc0"/><rect x="254.33" y="49.44" width="1.61" height="1.61" fill="#4a7cc0"/><rect x="255.94" y="49.44" width="1.61" height="1.61" fill="#4a7cc0"/><rect x="259.17" y="49.44" width="1.61" height="1.61" fill="#4a7cc0"/><rect x="262.39" y="49.44" width="1.61" height="1.61" fill="#4a7cc0"/><rect x="252.72" y="51.06" width="1.61" height="1.61" fill="#4a7cc0"/><rect x="255.94" y="51.06" width="1.61" height="1.61" fill="#4a7cc0"/><rect x="257.56" y="51.06" width="1.61" height="1.61" fill="#4a7cc0"/><rect x="260.78" y="51.06" width="1.61" height="1.61" fill="#4a7cc0"/><rect x="249.50" y="52.67" width="1.61" height="1.61" fill="#4a7cc0"/><rect x="251.11" y="52.67" width="1.61" height="1.61" fill="#4a7cc0"/><rect x="252.72" y="52.67" width="1.61" height="1.61" fill="#4a7cc0"/><rect x="257.56" y="52.67" width="1.61" height="1.61" fill="#4a7cc0"/><rect x="260.78" y="52.67" width="1.61" height="1.61" fill="#4a7cc0"/><rect x="262.39" y="52.67" width="1.61" height="1.61" fill="#4a7cc0"/><rect x="249.50" y="54.28" width="1.61" height="1.61" fill="#4a7cc0"/><rect x="252.72" y="54.28" width="1.61" height="1.61" fill="#4a7cc0"/><rect x="255.94" y="54.28" width="1.61" height="1.61" fill="#4a7cc0"/><rect x="259.17" y="54.28" width="1.61" height="1.61" fill="#4a7cc0"/><rect x="249.50" y="55.89" width="1.61" height="1.61" fill="#4a7cc0"/><rect x="251.11" y="55.89" width="1.61" height="1.61" fill="#4a7cc0"/><rect x="252.72" y="55.89" width="1.61" height="1.61" fill="#4a7cc0"/><rect x="255.94" y="55.89" width="1.61" height="1.61" fill="#4a7cc0"/><rect x="257.56" y="55.89" width="1.61" height="1.61" fill="#4a7cc0"/><rect x="260.78" y="55.89" width="1.61" height="1.61" fill="#4a7cc0"/><rect x="262.39" y="55.89" width="1.61" height="1.61" fill="#4a7cc0"/><circle cx="232" cy="140" r="9" fill="#e9eef6"/><circle cx="224" cy="150" r="9" fill="#f4f6fa"/><circle cx="240" cy="152" r="10" fill="#dfe6f1"/><circle cx="252" cy="158" r="8" fill="#eef2f8"/><ellipse cx="238" cy="162" rx="26" ry="6.500" fill="#f4f6fa"/><path d="M246 166 l4 -20 l-4 -14 q2 -12 12 -14 q10 0 13 10 l1 38z" fill="#f2b52a"/><path d="M258 132 l10 -2 l2 14 l-10 4z" fill="#d9961c"/><circle cx="262" cy="118" r="4.600" fill="#3a3a40"/><path d="M256.500 117.500 q0 -6.500 5.500 -6.500 q5.500 0 5.500 6.500z" fill="#efc42e"/><path d="M250 136 l-16 14 l-4 -1 l1 -3 l16 -15z" fill="#e0a422"/><path d="M232 150 l-8 8" stroke="#3a3a40" stroke-width="1.600"/><path d="M252 166 l2 -14 h8 l2 14z" fill="#d89a1d"/><circle cx="192.500" cy="85" r=".55" fill="#d6e4f6"/><circle cx="192.500" cy="95.5" r=".55" fill="#d6e4f6"/><circle cx="192.500" cy="113" r=".55" fill="#d6e4f6"/><path d="M183.5 189.5 q-0.5 -8.0 1.5 -13.0" stroke="#efc36a" stroke-width="1.3" fill="none"/><circle cx="186.0" cy="187.5" r="3.3" fill="#3f9a5c"/><circle cx="184.0" cy="189.0" r="2.0" fill="#4aa866"/><circle cx="185.0" cy="191.5" r="1.9" fill="#e2643c"/><rect x="180.5" y="194.0" width="8.0" height="1.3" fill="#b9c4c0"/><circle cx="215.5" cy="183.0" r="2.4" fill="#f3b46a"/><ellipse cx="210.5" cy="188.0" rx="7.8" ry="4.6" fill="#6fae3c" transform="rotate(-12 210.5 188.0)"/><path d="M204.5 189.5 q6.0 -1.0 11.0 -5.0" stroke="#d9ecc0" stroke-width="1.1" fill="none"/><path d="M207.5 183.5 q3.0 -2.0 6.0 -1.0" stroke="#7a8fb8" stroke-width="1.0" fill="none"/><rect x="203.0" y="194.1" width="15.0" height="1.0" fill="#a9b4b0"/><path d="M233.4 180.5 h5.2 l-1.3 4.7 l4.7 -1.3 v5.2 l-4.7 -1.3 l1.3 4.7 h-5.2 l1.3 -4.7 l-4.7 1.3 v-5.2 l4.7 1.3z" fill="#d46a22"/><circle cx="236" cy="186.5" r="2.0" fill="#4a8f8c"/><path d="M252.9 181.0 q2.8 1.2 5.6 -1.0 q2.8 2.2 5.6 1.0 v6.5 q0 3.5 -5.6 5.5 q-5.6 -2.0 -5.6 -5.5z" fill="#2d5a1e"/><path d="M258.5 183.0 l2.6 5.5 h-5.2z" fill="#c9cb45"/><rect x="255.0" y="189.3" width="7.0" height="1.2" fill="#c9cb45"/></svg>
<span class="t" style="left:669.5px;top:405.7px;font:700 14.2px/17.0px 'Liberation Sans', sans-serif;color:#fbfdff;transform:scaleX(0.872);-webkit-text-stroke:.45px #fbfdff;">ЗУПИНИМО ЛІСОВІ ПОЖЕЖІ</span>
<span class="t" style="left:732.5px;top:419.2px;font:700 14.2px/17.0px 'Liberation Sans', sans-serif;color:#fbfdff;transform:scaleX(0.822);-webkit-text-stroke:.45px #fbfdff;">РАЗОМ!</span>
<span class="t" style="left:669.5px;top:440.7px;font:700 4.9px/5.9px 'Liberation Sans', sans-serif;color:#22509a;transform:scaleX(0.973);">Законодавством України передбачено, що органи місцевого</span>
<span class="t" style="left:669.5px;top:446.1px;font:700 4.9px/5.9px 'Liberation Sans', sans-serif;color:#22509a;transform:scaleX(0.949);">самоврядування створюють підрозділи місцевої та добровільної</span>
<span class="t" style="left:669.5px;top:451.6px;font:700 4.9px/5.9px 'Liberation Sans', sans-serif;color:#22509a;transform:scaleX(0.990);">пожежної охорони за підтримки громадських організацій,</span>
<span class="t" style="left:669.5px;top:457.0px;font:700 4.9px/5.9px 'Liberation Sans', sans-serif;color:#22509a;transform:scaleX(0.957);">суб’єктів господарювання, інших юридичних осіб.</span>
<span class="t" style="left:703.0px;top:469.7px;font:700 5.3px/6.4px 'Liberation Sans', sans-serif;color:#fff;transform:scaleX(1.219);">ЧОМУ залучення</span>
<span class="t" style="left:703.0px;top:476.0px;font:700 5.3px/6.4px 'Liberation Sans', sans-serif;color:#fff;transform:scaleX(1.065);">добровольців ВАЖЛИВО?</span>
<span class="t" style="left:793.0px;top:469.7px;font:700 5.3px/6.4px 'Liberation Sans', sans-serif;color:#fff;transform:scaleX(1.187);">ХТО такі</span>
<span class="t" style="left:793.0px;top:476.0px;font:700 5.3px/6.4px 'Liberation Sans', sans-serif;color:#fff;transform:scaleX(1.075);">добровольці?</span>
<div class="b" style="left:719.0px;top:486.6px;width:1.1px;height:1.1px;background:#d6e8fa;border-radius:50%;"></div>
<span class="t" style="left:722.5px;top:485.0px;font:700 3.3px/4.0px 'Liberation Sans', sans-serif;color:#e2f0fc;transform:scaleX(1.025);">25 тисяч пожеж в сільській</span>
<span class="t" style="left:722.5px;top:488.3px;font:700 3.3px/4.0px 'Liberation Sans', sans-serif;color:#e2f0fc;transform:scaleX(1.106);">місцевості в рік;</span>
<div class="b" style="left:719.0px;top:497.1px;width:1.1px;height:1.1px;background:#d6e8fa;border-radius:50%;"></div>
<span class="t" style="left:722.5px;top:495.5px;font:700 3.3px/4.0px 'Liberation Sans', sans-serif;color:#e2f0fc;transform:scaleX(0.967);">від початку повномасштабної</span>
<span class="t" style="left:722.5px;top:498.8px;font:700 3.3px/4.0px 'Liberation Sans', sans-serif;color:#e2f0fc;transform:scaleX(1.078);">російської військової агресії</span>
<span class="t" style="left:722.5px;top:502.1px;font:700 3.3px/4.0px 'Liberation Sans', sans-serif;color:#e2f0fc;transform:scaleX(0.987);">зафіксовано понад 3 тис. пожеж</span>
<span class="t" style="left:722.5px;top:505.4px;font:700 3.3px/4.0px 'Liberation Sans', sans-serif;color:#e2f0fc;transform:scaleX(1.049);">на площі більш ніж 2,5 млн га;</span>
<div class="b" style="left:719.0px;top:513.6px;width:1.1px;height:1.1px;background:#d6e8fa;border-radius:50%;"></div>
<span class="t" style="left:722.5px;top:512.0px;font:700 3.3px/4.0px 'Liberation Sans', sans-serif;color:#e2f0fc;transform:scaleX(0.978);">1 люди загибель від пожеж</span>
<span class="t" style="left:722.5px;top:515.3px;font:700 3.3px/4.0px 'Liberation Sans', sans-serif;color:#e2f0fc;transform:scaleX(1.069);">в сільській місцевості;</span>
<div class="b" style="left:719.0px;top:523.6px;width:1.1px;height:1.1px;background:#d6e8fa;border-radius:50%;"></div>
<span class="t" style="left:722.5px;top:522.0px;font:700 3.3px/4.0px 'Liberation Sans', sans-serif;color:#e2f0fc;transform:scaleX(0.950);">час прибуття пожежних</span>
<span class="t" style="left:722.5px;top:525.3px;font:700 3.3px/4.0px 'Liberation Sans', sans-serif;color:#e2f0fc;transform:scaleX(0.993);">рятувальних підрозділів до</span>
<span class="t" style="left:722.5px;top:528.6px;font:700 3.3px/4.0px 'Liberation Sans', sans-serif;color:#e2f0fc;transform:scaleX(0.981);">віддаленого населеного пункту</span>
<span class="t" style="left:722.5px;top:531.9px;font:700 3.3px/4.0px 'Liberation Sans', sans-serif;color:#e2f0fc;transform:scaleX(1.032);">сягнуло 40 хвилин і більше.</span>
<div class="b" style="left:793.0px;top:486.6px;width:1.1px;height:1.1px;background:#d6e8fa;border-radius:50%;"></div>
<span class="t" style="left:796.0px;top:485.0px;font:700 3.3px/4.0px 'Liberation Sans', sans-serif;color:#e2f0fc;transform:scaleX(1.018);">Фізичні сторони,</span>
<span class="t" style="left:796.0px;top:488.3px;font:700 3.3px/4.0px 'Liberation Sans', sans-serif;color:#e2f0fc;transform:scaleX(0.982);">модельні працівники,</span>
<span class="t" style="left:796.0px;top:491.6px;font:700 3.3px/4.0px 'Liberation Sans', sans-serif;color:#e2f0fc;transform:scaleX(0.991);">вчителі, фермери,</span>
<span class="t" style="left:796.0px;top:494.9px;font:700 3.3px/4.0px 'Liberation Sans', sans-serif;color:#e2f0fc;transform:scaleX(1.025);">грамотні підприємці,</span>
<span class="t" style="left:796.0px;top:498.2px;font:700 3.3px/4.0px 'Liberation Sans', sans-serif;color:#e2f0fc;transform:scaleX(1.033);">та інші небайдужі</span>
<span class="t" style="left:796.0px;top:501.5px;font:700 3.3px/4.0px 'Liberation Sans', sans-serif;color:#e2f0fc;transform:scaleX(0.988);">громадяни, які вирішили</span>
<span class="t" style="left:796.0px;top:504.8px;font:700 3.3px/4.0px 'Liberation Sans', sans-serif;color:#e2f0fc;transform:scaleX(0.955);">зробити власний внесок</span>
<span class="t" style="left:796.0px;top:508.1px;font:700 3.3px/4.0px 'Liberation Sans', sans-serif;color:#e2f0fc;transform:scaleX(1.024);">у захист своєї громади</span>
<span class="t" style="left:796.0px;top:511.4px;font:700 3.3px/4.0px 'Liberation Sans', sans-serif;color:#e2f0fc;transform:scaleX(1.014);">від пожеж.</span>
<div class="b" style="left:793.0px;top:520.1px;width:1.1px;height:1.1px;background:#d6e8fa;border-radius:50%;"></div>
<span class="t" style="left:796.0px;top:518.5px;font:700 3.3px/4.0px 'Liberation Sans', sans-serif;color:#e2f0fc;transform:scaleX(1.033);">Люди, які готові покинути</span>
<span class="t" style="left:796.0px;top:521.8px;font:700 3.3px/4.0px 'Liberation Sans', sans-serif;color:#e2f0fc;transform:scaleX(1.028);">свої справи на час</span>
<span class="t" style="left:796.0px;top:525.1px;font:700 3.3px/4.0px 'Liberation Sans', sans-serif;color:#e2f0fc;transform:scaleX(0.996);">виклику, аби врятувати</span>
<span class="t" style="left:796.0px;top:528.4px;font:700 3.3px/4.0px 'Liberation Sans', sans-serif;color:#e2f0fc;">чиєсь життя.</span>
<span class="t" style="left:856.5px;top:410.1px;font:700 4.2px/5.0px 'Liberation Sans', sans-serif;color:#fff;transform:scaleX(1.024);">ЯКЩО БАЧИТЕ ПАЛАЮЧИЙ ЛІС –</span>
<span class="t" style="left:856.5px;top:415.6px;font:700 5.6px/6.7px 'Liberation Sans', sans-serif;color:#fff;transform:scaleX(0.990);">ТЕЛЕФОНУЙТЕ 101</span>
<span class="t" style="left:856.5px;top:421.7px;font:700 5.6px/6.7px 'Liberation Sans', sans-serif;color:#fff;transform:scaleX(1.026);">або (03547) 2-37-32</span>
<span class="t" style="left:856.5px;top:428.6px;font:700 3.8px/4.6px 'Liberation Sans', sans-serif;color:#e8f2ea;">(МІСЦЕВА ПОЖЕЖНА КОМАНДА,</span>
<span class="t" style="left:856.5px;top:433.1px;font:700 3.8px/4.6px 'Liberation Sans', sans-serif;color:#e8f2ea;transform:scaleX(1.127);">с. КОЗЛІВ)</span>
<span class="t" style="left:866.0px;top:443.6px;font:700 5.2px/6.2px 'Liberation Sans', sans-serif;color:#e0342b;transform:scaleX(0.905);">Дізнатись більше</span>
<span class="t" style="left:866.0px;top:449.2px;font:700 5.2px/6.2px 'Liberation Sans', sans-serif;color:#e0342b;transform:scaleX(0.894);">на сайті ДСНС:</span>
<span class="t" style="left:866.0px;top:455.8px;font:700 3.2px/3.8px 'Liberation Sans', sans-serif;color:#e0342b;transform:scaleX(1.059);">www.dsns.gov.ua/ua</span>
<span class="t" style="left:853.5px;top:468.5px;font:700 5.4px/6.5px 'Liberation Sans', sans-serif;color:#fff;transform:scaleX(1.057);">ЩО ПОТРІБНО ЗРОБИТИ,</span>
<span class="t" style="left:853.5px;top:474.9px;font:700 5.4px/6.5px 'Liberation Sans', sans-serif;color:#fff;transform:scaleX(1.063);">щоб стати добровольцем?</span>
<span class="t" style="left:857.5px;top:485.0px;font:700 3.3px/4.0px 'Liberation Sans', sans-serif;color:#e2ecfb;transform:scaleX(0.966);">Мати бажання допомогти громаді у захисті</span>
<span class="t" style="left:857.5px;top:488.3px;font:700 3.3px/4.0px 'Liberation Sans', sans-serif;color:#e2ecfb;transform:scaleX(0.977);">від пожеж та інших надзвичайних ситуацій.</span>
<span class="t" style="left:857.5px;top:495.5px;font:700 3.3px/4.0px 'Liberation Sans', sans-serif;color:#e2ecfb;transform:scaleX(0.952);">Звернутись до органу місцевого</span>
<span class="t" style="left:857.5px;top:498.8px;font:700 3.3px/4.0px 'Liberation Sans', sans-serif;color:#e2ecfb;transform:scaleX(0.953);">самоврядування та подати заяву на вступ</span>
<span class="t" style="left:857.5px;top:502.1px;font:700 3.3px/4.0px 'Liberation Sans', sans-serif;color:#e2ecfb;transform:scaleX(0.942);">до лав добровільної пожежної охорони</span>
<span class="t" style="left:857.5px;top:505.4px;font:700 3.3px/4.0px 'Liberation Sans', sans-serif;color:#e2ecfb;transform:scaleX(0.930);">громади.</span>
<span class="t" style="left:857.5px;top:513.0px;font:700 3.3px/4.0px 'Liberation Sans', sans-serif;color:#e2ecfb;transform:scaleX(0.937);">Пройти відповідне навчання</span>
<span class="t" style="left:857.5px;top:516.3px;font:700 3.3px/4.0px 'Liberation Sans', sans-serif;color:#e2ecfb;transform:scaleX(0.943);">за напрямом пожежогасіння,</span>
<span class="t" style="left:857.5px;top:519.6px;font:700 3.3px/4.0px 'Liberation Sans', sans-serif;color:#e2ecfb;transform:scaleX(0.953);">реагування на надзвичайні</span>
<span class="t" style="left:857.5px;top:522.9px;font:700 3.3px/4.0px 'Liberation Sans', sans-serif;color:#e2ecfb;transform:scaleX(1.009);">ситуації та надання</span>
<span class="t" style="left:857.5px;top:526.2px;font:700 3.3px/4.0px 'Liberation Sans', sans-serif;color:#e2ecfb;transform:scaleX(0.880);">домедичної</span>
<span class="t" style="left:857.5px;top:529.5px;font:700 3.3px/4.0px 'Liberation Sans', sans-serif;color:#e2ecfb;transform:scaleX(0.911);">допомоги.</span>
<span class="t" style="left:668.5px;top:580.5px;font:700 3.3px/4.0px 'Liberation Sans', sans-serif;color:#3c3c3c;transform:scaleX(0.975);">Проєкт «Створення громадської системи протипожежного захисту лісів в Україні»</span>
<span class="t" style="left:668.5px;top:584.1px;font:700 3.3px/4.0px 'Liberation Sans', sans-serif;color:#3c3c3c;transform:scaleX(0.957);">реалізовує ВСЕУКРАЇНСЬКА ЕКОЛОГІЧНА ЛІГА за підтримки Міжнародної програми</span>
<span class="t" style="left:668.5px;top:587.7px;font:700 3.3px/4.0px 'Liberation Sans', sans-serif;color:#3c3c3c;transform:scaleX(0.963);">Лісової служби США (U.S. Forest Service International Programs).</span>
<svg class="b" style="left:941.3px;top:404.0px;" width="154.0" height="195.5" viewBox="0 0 154.0 195.5"><defs><clipPath id="phc"><rect width="154" height="195.500"/></clipPath><linearGradient id="gnd" x1="0" y1="0" x2="0" y2="1"><stop offset="0" stop-color="#9c9470"/><stop offset=".4" stop-color="#b3a483"/><stop offset="1" stop-color="#9a8c70"/></linearGradient></defs><g clip-path="url(#phc)"><rect width="154.0" height="195.5" fill="#5f8540"/><rect x="0" y="0" width="62" height="64" fill="#c6d4b2"/><rect x="0" y="0" width="154" height="16" fill="#a9c08c" opacity=".8"/><ellipse cx="19.4" cy="8.4" rx="6.3" ry="4.5" fill="#c4d4ae" opacity=".8"/><ellipse cx="5.6" cy="32.6" rx="7.5" ry="5.5" fill="#e3ead8" opacity=".8"/><ellipse cx="26.0" cy="3.9" rx="3.5" ry="7.0" fill="#c4d4ae" opacity=".8"/><ellipse cx="7.4" cy="12.5" rx="6.1" ry="10.6" fill="#c4d4ae" opacity=".8"/><ellipse cx="35.1" cy="2.8" rx="4.1" ry="7.9" fill="#e3ead8" opacity=".8"/><ellipse cx="17.4" cy="8.1" rx="3.6" ry="6.2" fill="#c4d4ae" opacity=".8"/><ellipse cx="10.8" cy="32.6" rx="6.2" ry="6.6" fill="#c4d4ae" opacity=".8"/><ellipse cx="42.7" cy="31.6" rx="6.1" ry="7.5" fill="#c4d4ae" opacity=".8"/><ellipse cx="25.7" cy="17.6" rx="5.9" ry="7.2" fill="#d3dfc2" opacity=".8"/><ellipse cx="14.9" cy="10.1" rx="6.9" ry="4.6" fill="#d3dfc2" opacity=".8"/><ellipse cx="31.5" cy="49.0" rx="6.6" ry="6.0" fill="#e3ead8" opacity=".8"/><ellipse cx="7.1" cy="23.4" rx="6.8" ry="5.1" fill="#d3dfc2" opacity=".8"/><ellipse cx="25.3" cy="53.9" rx="3.4" ry="7.9" fill="#d3dfc2" opacity=".8"/><ellipse cx="20.4" cy="19.6" rx="5.5" ry="9.6" fill="#e3ead8" opacity=".8"/><ellipse cx="50.4" cy="52.9" rx="5.4" ry="8.6" fill="#e3ead8" opacity=".8"/><ellipse cx="43.9" cy="17.3" rx="5.9" ry="8.8" fill="#d3dfc2" opacity=".8"/><ellipse cx="17.1" cy="21.6" rx="6.3" ry="4.2" fill="#d3dfc2" opacity=".8"/><ellipse cx="21.3" cy="34.2" rx="5.5" ry="5.5" fill="#d3dfc2" opacity=".8"/><ellipse cx="7.8" cy="13.9" rx="5.0" ry="10.1" fill="#e3ead8" opacity=".8"/><ellipse cx="10.0" cy="22.5" rx="4.4" ry="5.0" fill="#d3dfc2" opacity=".8"/><ellipse cx="51.8" cy="15.6" rx="5.1" ry="6.5" fill="#d3dfc2" opacity=".8"/><ellipse cx="57.5" cy="8.5" rx="3.9" ry="5.6" fill="#e3ead8" opacity=".8"/><ellipse cx="0.7" cy="46.5" rx="3.9" ry="6.0" fill="#e3ead8" opacity=".8"/><ellipse cx="25.1" cy="20.7" rx="5.8" ry="10.7" fill="#c4d4ae" opacity=".8"/><ellipse cx="51.6" cy="53.2" rx="6.3" ry="9.2" fill="#d3dfc2" opacity=".8"/><ellipse cx="54.0" cy="43.7" rx="7.4" ry="9.6" fill="#d3dfc2" opacity=".8"/><rect x="3" y="0" width="3" height="91" fill="#5b4a3a" opacity=".85"/><rect x="11" y="0" width="2" height="107" fill="#6a5a48" opacity=".85"/><rect x="19" y="0" width="2.5" height="83" fill="#5f5140" opacity=".85"/><rect x="27" y="0" width="2" height="99" fill="#7a6a55" opacity=".85"/><rect x="34" y="0" width="3" height="108" fill="#5a4b3b" opacity=".85"/><rect x="43" y="0" width="2.5" height="91" fill="#66574a" opacity=".85"/><rect x="50" y="0" width="2" height="100" fill="#77685a" opacity=".85"/><rect x="80" y="0" width="2" height="70" fill="#5f5345" opacity=".85"/><rect x="88" y="0" width="2.5" height="86" fill="#65594a" opacity=".85"/><rect x="118" y="0" width="2" height="96" fill="#5d5244" opacity=".85"/><rect x="143" y="0" width="2.5" height="71" fill="#564a3c" opacity=".85"/><ellipse cx="61.3" cy="56.3" rx="8.3" ry="5.4" fill="#3f6a2c" opacity=".85"/><ellipse cx="3.9" cy="100.4" rx="9.5" ry="3.9" fill="#5f8d40" opacity=".85"/><ellipse cx="147.1" cy="75.4" rx="8.3" ry="3.7" fill="#48732f" opacity=".85"/><ellipse cx="152.9" cy="62.9" rx="8.4" ry="3.5" fill="#6c9a48" opacity=".85"/><ellipse cx="115.4" cy="88.1" rx="8.3" ry="7.2" fill="#557f38" opacity=".85"/><ellipse cx="31.6" cy="107.6" rx="7.3" ry="7.1" fill="#557f38" opacity=".85"/><ellipse cx="116.8" cy="47.4" rx="9.8" ry="3.5" fill="#5f8d40" opacity=".85"/><ellipse cx="79.8" cy="103.6" rx="7.2" ry="4.3" fill="#a2c474" opacity=".85"/><ellipse cx="98.0" cy="76.4" rx="11.1" ry="7.5" fill="#3f6a2c" opacity=".85"/><ellipse cx="124.1" cy="95.3" rx="10.7" ry="4.4" fill="#48732f" opacity=".85"/><ellipse cx="147.3" cy="61.1" rx="12.4" ry="8.9" fill="#a2c474" opacity=".85"/><ellipse cx="52.0" cy="64.4" rx="12.9" ry="6.7" fill="#557f38" opacity=".85"/><ellipse cx="73.8" cy="80.1" rx="11.2" ry="3.5" fill="#6c9a48" opacity=".85"/><ellipse cx="140.1" cy="92.0" rx="10.8" ry="5.9" fill="#86b25a" opacity=".85"/><ellipse cx="66.8" cy="78.5" rx="4.8" ry="8.7" fill="#2f5424" opacity=".85"/><ellipse cx="71.3" cy="88.4" rx="4.8" ry="4.0" fill="#86b25a" opacity=".85"/><ellipse cx="4.2" cy="74.4" rx="8.2" ry="6.9" fill="#48732f" opacity=".85"/><ellipse cx="101.2" cy="52.2" rx="8.9" ry="3.8" fill="#557f38" opacity=".85"/><ellipse cx="123.1" cy="86.8" rx="4.9" ry="7.5" fill="#86b25a" opacity=".85"/><ellipse cx="66.8" cy="100.2" rx="11.4" ry="4.3" fill="#5f8d40" opacity=".85"/><ellipse cx="32.8" cy="66.1" rx="10.9" ry="5.0" fill="#2f5424" opacity=".85"/><ellipse cx="128.5" cy="25.6" rx="10.7" ry="8.4" fill="#2f5424" opacity=".85"/><ellipse cx="127.4" cy="100.8" rx="5.2" ry="3.9" fill="#557f38" opacity=".85"/><ellipse cx="134.4" cy="91.4" rx="9.5" ry="7.7" fill="#86b25a" opacity=".85"/><ellipse cx="26.5" cy="63.6" rx="10.5" ry="6.3" fill="#a2c474" opacity=".85"/><ellipse cx="105.1" cy="68.8" rx="8.3" ry="7.7" fill="#557f38" opacity=".85"/><ellipse cx="78.2" cy="71.7" rx="10.8" ry="8.5" fill="#48732f" opacity=".85"/><ellipse cx="50.1" cy="109.5" rx="9.5" ry="4.2" fill="#5f8d40" opacity=".85"/><ellipse cx="69.7" cy="69.1" rx="8.3" ry="8.6" fill="#5f8d40" opacity=".85"/><ellipse cx="142.1" cy="102.1" rx="5.8" ry="5.7" fill="#2f5424" opacity=".85"/><ellipse cx="18.7" cy="60.7" rx="4.7" ry="4.4" fill="#6c9a48" opacity=".85"/><ellipse cx="119.6" cy="106.4" rx="9.8" ry="5.2" fill="#5f8d40" opacity=".85"/><ellipse cx="136.0" cy="109.0" rx="6.0" ry="8.7" fill="#2f5424" opacity=".85"/><ellipse cx="136.3" cy="35.0" rx="10.0" ry="4.3" fill="#2f5424" opacity=".85"/><ellipse cx="153.1" cy="57.2" rx="7.8" ry="5.1" fill="#6c9a48" opacity=".85"/><ellipse cx="111.2" cy="21.8" rx="9.0" ry="5.6" fill="#557f38" opacity=".85"/><ellipse cx="59.2" cy="67.6" rx="6.7" ry="8.8" fill="#6c9a48" opacity=".85"/><ellipse cx="151.7" cy="92.5" rx="12.7" ry="3.6" fill="#5f8d40" opacity=".85"/><ellipse cx="41.9" cy="103.3" rx="5.6" ry="7.5" fill="#2f5424" opacity=".85"/><ellipse cx="130.8" cy="82.2" rx="12.5" ry="5.4" fill="#48732f" opacity=".85"/><ellipse cx="107.9" cy="28.2" rx="4.5" ry="7.1" fill="#2f5424" opacity=".85"/><ellipse cx="137.9" cy="44.7" rx="4.2" ry="3.5" fill="#5f8d40" opacity=".85"/><ellipse cx="12.9" cy="98.8" rx="4.6" ry="8.2" fill="#48732f" opacity=".85"/><ellipse cx="1.8" cy="111.5" rx="7.8" ry="8.5" fill="#86b25a" opacity=".85"/><ellipse cx="6.7" cy="85.3" rx="12.4" ry="8.8" fill="#5f8d40" opacity=".85"/><ellipse cx="47.0" cy="89.9" rx="6.6" ry="6.0" fill="#86b25a" opacity=".85"/><ellipse cx="41.7" cy="93.9" rx="13.0" ry="3.2" fill="#557f38" opacity=".85"/><ellipse cx="112.9" cy="70.7" rx="5.7" ry="5.8" fill="#48732f" opacity=".85"/><ellipse cx="16.4" cy="95.3" rx="7.9" ry="6.0" fill="#2f5424" opacity=".85"/><ellipse cx="149.4" cy="48.3" rx="5.9" ry="4.4" fill="#3f6a2c" opacity=".85"/><ellipse cx="128.2" cy="85.0" rx="9.7" ry="5.4" fill="#a2c474" opacity=".85"/><ellipse cx="151.2" cy="97.0" rx="4.1" ry="6.8" fill="#5f8d40" opacity=".85"/><ellipse cx="66.3" cy="25.1" rx="10.0" ry="5.3" fill="#5f8d40" opacity=".85"/><ellipse cx="92.2" cy="83.7" rx="4.4" ry="4.1" fill="#5f8d40" opacity=".85"/><ellipse cx="68.7" cy="44.2" rx="12.7" ry="8.8" fill="#a2c474" opacity=".85"/><ellipse cx="37.6" cy="108.8" rx="6.8" ry="5.1" fill="#557f38" opacity=".85"/><ellipse cx="101.0" cy="42.8" rx="11.0" ry="3.5" fill="#6c9a48" opacity=".85"/><ellipse cx="22.2" cy="74.0" rx="7.5" ry="4.8" fill="#3f6a2c" opacity=".85"/><ellipse cx="13.0" cy="108.1" rx="11.7" ry="3.9" fill="#2f5424" opacity=".85"/><ellipse cx="117.7" cy="86.3" rx="8.4" ry="4.7" fill="#86b25a" opacity=".85"/><ellipse cx="6.7" cy="96.8" rx="12.0" ry="6.8" fill="#86b25a" opacity=".85"/><ellipse cx="140.1" cy="89.3" rx="9.1" ry="7.9" fill="#557f38" opacity=".85"/><ellipse cx="127.3" cy="73.7" rx="12.0" ry="7.1" fill="#3f6a2c" opacity=".85"/><ellipse cx="147.8" cy="54.6" rx="8.1" ry="3.3" fill="#557f38" opacity=".85"/><ellipse cx="96.4" cy="82.6" rx="8.4" ry="3.0" fill="#6c9a48" opacity=".85"/><ellipse cx="115.2" cy="66.3" rx="8.8" ry="7.0" fill="#6c9a48" opacity=".85"/><ellipse cx="114.8" cy="63.6" rx="11.3" ry="8.1" fill="#3f6a2c" opacity=".85"/><ellipse cx="112.3" cy="38.9" rx="10.7" ry="8.9" fill="#48732f" opacity=".85"/><ellipse cx="130.2" cy="27.1" rx="12.2" ry="4.7" fill="#557f38" opacity=".85"/><ellipse cx="95.0" cy="79.1" rx="4.7" ry="3.9" fill="#5f8d40" opacity=".85"/><ellipse cx="100.3" cy="83.7" rx="9.6" ry="3.8" fill="#48732f" opacity=".85"/><ellipse cx="106.6" cy="82.2" rx="6.6" ry="6.1" fill="#48732f" opacity=".85"/><ellipse cx="71.7" cy="90.6" rx="12.9" ry="6.3" fill="#5f8d40" opacity=".85"/><ellipse cx="150.6" cy="106.1" rx="4.2" ry="5.8" fill="#48732f" opacity=".85"/><ellipse cx="153.1" cy="55.6" rx="12.2" ry="8.6" fill="#6c9a48" opacity=".85"/><ellipse cx="89.5" cy="33.0" rx="8.7" ry="8.7" fill="#86b25a" opacity=".85"/><ellipse cx="92.9" cy="78.1" rx="6.5" ry="3.7" fill="#a2c474" opacity=".85"/><ellipse cx="35.6" cy="102.6" rx="8.4" ry="3.1" fill="#557f38" opacity=".85"/><ellipse cx="146.3" cy="82.7" rx="7.6" ry="7.4" fill="#2f5424" opacity=".85"/><ellipse cx="53.0" cy="49.1" rx="4.0" ry="7.5" fill="#2f5424" opacity=".85"/><ellipse cx="18.5" cy="105.2" rx="10.4" ry="8.4" fill="#5f8d40" opacity=".85"/><ellipse cx="134.0" cy="27.0" rx="12.3" ry="7.5" fill="#557f38" opacity=".85"/><ellipse cx="97.8" cy="33.7" rx="12.7" ry="5.6" fill="#a2c474" opacity=".85"/><ellipse cx="29.2" cy="54.3" rx="12.0" ry="7.9" fill="#2f5424" opacity=".85"/><ellipse cx="140.7" cy="106.5" rx="8.9" ry="7.3" fill="#557f38" opacity=".85"/><ellipse cx="143.8" cy="57.8" rx="9.5" ry="3.8" fill="#5f8d40" opacity=".85"/><ellipse cx="74.8" cy="103.9" rx="9.0" ry="4.0" fill="#2f5424" opacity=".85"/><ellipse cx="150.3" cy="43.9" rx="9.9" ry="4.8" fill="#2f5424" opacity=".85"/><ellipse cx="18.4" cy="79.2" rx="4.7" ry="6.0" fill="#48732f" opacity=".85"/><ellipse cx="84.8" cy="61.7" rx="7.0" ry="7.6" fill="#2f5424" opacity=".85"/><ellipse cx="39.8" cy="72.4" rx="12.0" ry="7.5" fill="#2f5424" opacity=".85"/><ellipse cx="59.0" cy="88.6" rx="5.9" ry="4.6" fill="#557f38" opacity=".85"/><ellipse cx="76.7" cy="72.8" rx="7.2" ry="7.1" fill="#3f6a2c" opacity=".85"/><ellipse cx="14.3" cy="102.5" rx="7.5" ry="6.9" fill="#2f5424" opacity=".85"/><ellipse cx="146.9" cy="98.1" rx="11.9" ry="3.1" fill="#557f38" opacity=".85"/><ellipse cx="65.5" cy="90.3" rx="11.2" ry="8.8" fill="#48732f" opacity=".85"/><ellipse cx="0.0" cy="56.0" rx="11.4" ry="8.1" fill="#48732f" opacity=".85"/><ellipse cx="80.4" cy="82.8" rx="12.5" ry="7.3" fill="#48732f" opacity=".85"/><ellipse cx="13.1" cy="91.5" rx="4.0" ry="3.8" fill="#557f38" opacity=".85"/><ellipse cx="99.4" cy="47.9" rx="5.2" ry="4.5" fill="#2f5424" opacity=".85"/><ellipse cx="107.6" cy="30.3" rx="4.6" ry="6.1" fill="#3f6a2c" opacity=".85"/><ellipse cx="59.8" cy="40.6" rx="9.4" ry="3.1" fill="#5f8d40" opacity=".85"/><ellipse cx="153.4" cy="45.6" rx="6.8" ry="8.0" fill="#3f6a2c" opacity=".85"/><ellipse cx="73.2" cy="41.6" rx="6.2" ry="8.8" fill="#5f8d40" opacity=".85"/><ellipse cx="8.5" cy="37.9" rx="9.8" ry="3.5" fill="#3f6a2c" opacity=".85"/><ellipse cx="102.8" cy="105.1" rx="6.0" ry="3.2" fill="#a2c474" opacity=".85"/><ellipse cx="110.6" cy="53.3" rx="7.6" ry="3.0" fill="#5f8d40" opacity=".85"/><ellipse cx="113.8" cy="66.4" rx="5.8" ry="8.8" fill="#5f8d40" opacity=".85"/><ellipse cx="117.9" cy="37.8" rx="8.2" ry="4.6" fill="#5f8d40" opacity=".85"/><ellipse cx="16.8" cy="77.4" rx="9.5" ry="8.4" fill="#48732f" opacity=".85"/><ellipse cx="64.2" cy="81.2" rx="12.5" ry="3.9" fill="#2f5424" opacity=".85"/><ellipse cx="64.0" cy="85.3" rx="5.7" ry="5.7" fill="#a2c474" opacity=".85"/><ellipse cx="112.8" cy="111.8" rx="12.4" ry="5.0" fill="#86b25a" opacity=".85"/><ellipse cx="100.5" cy="68.3" rx="8.2" ry="4.9" fill="#2f5424" opacity=".85"/><ellipse cx="129.2" cy="110.6" rx="8.0" ry="3.7" fill="#6c9a48" opacity=".85"/><ellipse cx="43.1" cy="52.3" rx="5.1" ry="8.8" fill="#3f6a2c" opacity=".85"/><ellipse cx="58.5" cy="90.7" rx="6.8" ry="7.8" fill="#6c9a48" opacity=".85"/><ellipse cx="7.6" cy="63.6" rx="7.4" ry="8.5" fill="#3f6a2c" opacity=".85"/><ellipse cx="49.8" cy="87.8" rx="8.3" ry="6.8" fill="#3f6a2c" opacity=".85"/><ellipse cx="125.0" cy="90.5" rx="4.4" ry="3.2" fill="#6c9a48" opacity=".85"/><ellipse cx="123.7" cy="25.7" rx="5.8" ry="3.4" fill="#a2c474" opacity=".85"/><ellipse cx="55.9" cy="50.8" rx="4.4" ry="7.5" fill="#a2c474" opacity=".85"/><ellipse cx="142.3" cy="47.4" rx="10.5" ry="6.6" fill="#6c9a48" opacity=".85"/><ellipse cx="147.3" cy="107.8" rx="7.5" ry="4.5" fill="#2f5424" opacity=".85"/><ellipse cx="125.5" cy="32.2" rx="8.5" ry="3.1" fill="#5f8d40" opacity=".85"/><ellipse cx="126.7" cy="91.1" rx="9.5" ry="5.0" fill="#a2c474" opacity=".85"/><ellipse cx="71.0" cy="92.1" rx="9.4" ry="6.1" fill="#2f5424" opacity=".85"/><ellipse cx="115.9" cy="42.8" rx="4.6" ry="3.2" fill="#a2c474" opacity=".85"/><ellipse cx="24.7" cy="59.2" rx="4.9" ry="3.4" fill="#6c9a48" opacity=".85"/><ellipse cx="32.1" cy="58.7" rx="12.9" ry="8.8" fill="#86b25a" opacity=".85"/><ellipse cx="82.0" cy="16.7" rx="9.0" ry="7.0" fill="#6c9a48" opacity=".85"/><ellipse cx="133.3" cy="11.8" rx="6.2" ry="4.6" fill="#5f8d40" opacity=".85"/><ellipse cx="129.4" cy="8.0" rx="6.0" ry="4.5" fill="#86b25a" opacity=".85"/><ellipse cx="86.4" cy="36.3" rx="5.5" ry="3.4" fill="#5f8d40" opacity=".85"/><ellipse cx="153.3" cy="20.3" rx="5.9" ry="7.9" fill="#48732f" opacity=".85"/><ellipse cx="153.1" cy="4.1" rx="7.8" ry="7.9" fill="#48732f" opacity=".85"/><ellipse cx="146.0" cy="1.6" rx="6.3" ry="3.7" fill="#3f6a2c" opacity=".85"/><ellipse cx="116.4" cy="33.1" rx="5.6" ry="3.5" fill="#86b25a" opacity=".85"/><ellipse cx="102.2" cy="10.4" rx="10.2" ry="8.7" fill="#6c9a48" opacity=".85"/><ellipse cx="119.9" cy="28.4" rx="6.8" ry="3.2" fill="#a2c474" opacity=".85"/><ellipse cx="73.3" cy="8.2" rx="6.0" ry="6.6" fill="#3f6a2c" opacity=".85"/><ellipse cx="136.6" cy="32.8" rx="7.3" ry="5.2" fill="#5f8d40" opacity=".85"/><ellipse cx="67.3" cy="1.3" rx="8.0" ry="5.9" fill="#2f5424" opacity=".85"/><ellipse cx="69.5" cy="15.8" rx="8.4" ry="6.8" fill="#6c9a48" opacity=".85"/><ellipse cx="121.4" cy="15.9" rx="6.2" ry="8.9" fill="#5f8d40" opacity=".85"/><ellipse cx="99.3" cy="2.1" rx="10.0" ry="8.3" fill="#2f5424" opacity=".85"/><ellipse cx="99.1" cy="34.6" rx="12.0" ry="5.2" fill="#3f6a2c" opacity=".85"/><ellipse cx="96.7" cy="16.2" rx="11.5" ry="5.6" fill="#86b25a" opacity=".85"/><ellipse cx="99.8" cy="32.8" rx="7.2" ry="8.3" fill="#48732f" opacity=".85"/><ellipse cx="132.7" cy="5.2" rx="4.4" ry="3.9" fill="#2f5424" opacity=".85"/><ellipse cx="68.4" cy="24.9" rx="7.0" ry="6.0" fill="#86b25a" opacity=".85"/><ellipse cx="92.7" cy="6.5" rx="5.4" ry="3.4" fill="#2f5424" opacity=".85"/><ellipse cx="106.1" cy="32.2" rx="11.7" ry="4.2" fill="#86b25a" opacity=".85"/><ellipse cx="138.7" cy="1.7" rx="11.3" ry="4.9" fill="#2f5424" opacity=".85"/><ellipse cx="68.1" cy="28.5" rx="9.5" ry="8.3" fill="#3f6a2c" opacity=".85"/><ellipse cx="118.4" cy="24.6" rx="5.6" ry="5.8" fill="#3f6a2c" opacity=".85"/><ellipse cx="63.9" cy="37.5" rx="5.3" ry="5.2" fill="#86b25a" opacity=".85"/><ellipse cx="83.2" cy="29.0" rx="11.2" ry="3.2" fill="#557f38" opacity=".85"/><ellipse cx="122.8" cy="13.0" rx="7.1" ry="5.7" fill="#5f8d40" opacity=".85"/><ellipse cx="121.0" cy="12.3" rx="6.0" ry="5.3" fill="#a2c474" opacity=".85"/><ellipse cx="102.0" cy="17.5" rx="4.2" ry="6.7" fill="#48732f" opacity=".85"/><ellipse cx="103.7" cy="17.9" rx="8.9" ry="7.9" fill="#86b25a" opacity=".85"/><ellipse cx="136.2" cy="16.0" rx="4.5" ry="5.2" fill="#a2c474" opacity=".85"/><ellipse cx="68.6" cy="17.7" rx="8.1" ry="3.2" fill="#86b25a" opacity=".85"/><ellipse cx="67.7" cy="29.3" rx="10.2" ry="6.1" fill="#557f38" opacity=".85"/><ellipse cx="130.7" cy="35.8" rx="9.2" ry="7.7" fill="#557f38" opacity=".85"/><ellipse cx="140.6" cy="39.8" rx="9.9" ry="7.9" fill="#3f6a2c" opacity=".85"/><ellipse cx="72.4" cy="35.4" rx="6.3" ry="7.9" fill="#86b25a" opacity=".85"/><ellipse cx="124.5" cy="28.8" rx="5.8" ry="8.0" fill="#5f8d40" opacity=".85"/><ellipse cx="74.9" cy="35.9" rx="6.2" ry="7.9" fill="#86b25a" opacity=".85"/><path d="M0 112 q40 -6 80 -2 q40 4 74 -2 v88 h-154z" fill="url(#gnd)"/><ellipse cx="39.1" cy="191.1" rx="10.8" ry="3.3" fill="#5a5240" opacity=".5"/><ellipse cx="77.9" cy="139.5" rx="5.4" ry="2.0" fill="#c4b392" opacity=".5"/><ellipse cx="98.0" cy="136.3" rx="8.9" ry="2.6" fill="#7a6e54" opacity=".5"/><ellipse cx="17.7" cy="156.5" rx="12.6" ry="2.6" fill="#d0c0a0" opacity=".5"/><ellipse cx="85.5" cy="160.4" rx="15.6" ry="1.8" fill="#5a5240" opacity=".5"/><ellipse cx="97.0" cy="145.5" rx="14.6" ry="2.3" fill="#7a6e54" opacity=".5"/><ellipse cx="88.9" cy="142.8" rx="14.2" ry="2.8" fill="#c4b392" opacity=".5"/><ellipse cx="94.8" cy="190.6" rx="8.6" ry="3.0" fill="#7a6e54" opacity=".5"/><ellipse cx="98.4" cy="192.7" rx="12.0" ry="3.5" fill="#7a6e54" opacity=".5"/><ellipse cx="112.9" cy="173.8" rx="7.7" ry="2.4" fill="#d0c0a0" opacity=".5"/><ellipse cx="64.3" cy="143.1" rx="5.6" ry="3.0" fill="#5a5240" opacity=".5"/><ellipse cx="100.6" cy="115.8" rx="5.0" ry="2.6" fill="#6a604a" opacity=".5"/><ellipse cx="80.6" cy="156.7" rx="10.0" ry="2.4" fill="#c4b392" opacity=".5"/><ellipse cx="31.4" cy="163.9" rx="10.7" ry="1.9" fill="#c4b392" opacity=".5"/><ellipse cx="109.0" cy="150.1" rx="5.8" ry="1.9" fill="#7a6e54" opacity=".5"/><ellipse cx="61.9" cy="135.1" rx="5.1" ry="3.4" fill="#5a5240" opacity=".5"/><ellipse cx="137.5" cy="161.6" rx="11.9" ry="3.3" fill="#5a5240" opacity=".5"/><ellipse cx="113.0" cy="133.9" rx="15.8" ry="1.6" fill="#5a5240" opacity=".5"/><ellipse cx="3.9" cy="128.9" rx="6.9" ry="4.2" fill="#6a604a" opacity=".5"/><ellipse cx="1.9" cy="158.1" rx="16.3" ry="1.9" fill="#c4b392" opacity=".5"/><ellipse cx="79.8" cy="165.4" rx="12.8" ry="2.7" fill="#5a5240" opacity=".5"/><ellipse cx="26.9" cy="138.8" rx="8.6" ry="1.6" fill="#d0c0a0" opacity=".5"/><ellipse cx="110.2" cy="114.5" rx="15.1" ry="3.7" fill="#d0c0a0" opacity=".5"/><ellipse cx="12.4" cy="166.4" rx="7.1" ry="4.5" fill="#7a6e54" opacity=".5"/><ellipse cx="35.8" cy="117.1" rx="9.0" ry="3.7" fill="#7a6e54" opacity=".5"/><ellipse cx="109.6" cy="135.3" rx="11.6" ry="2.8" fill="#5a5240" opacity=".5"/><ellipse cx="149.7" cy="137.6" rx="16.1" ry="4.2" fill="#6a604a" opacity=".5"/><ellipse cx="135.5" cy="115.2" rx="8.1" ry="2.2" fill="#c4b392" opacity=".5"/><ellipse cx="145.5" cy="173.7" rx="8.9" ry="4.1" fill="#7a6e54" opacity=".5"/><ellipse cx="92.6" cy="144.4" rx="15.2" ry="4.3" fill="#5a5240" opacity=".5"/><ellipse cx="72.3" cy="181.2" rx="13.4" ry="4.1" fill="#d0c0a0" opacity=".5"/><ellipse cx="147.2" cy="132.7" rx="15.6" ry="3.9" fill="#d0c0a0" opacity=".5"/><ellipse cx="95.9" cy="120.2" rx="15.9" ry="1.9" fill="#6a604a" opacity=".5"/><ellipse cx="17.2" cy="163.8" rx="6.9" ry="4.4" fill="#6a604a" opacity=".5"/><ellipse cx="4.8" cy="125.1" rx="12.7" ry="1.6" fill="#6a604a" opacity=".5"/><ellipse cx="113.5" cy="119.3" rx="12.1" ry="2.6" fill="#5a5240" opacity=".5"/><ellipse cx="137.3" cy="119.3" rx="15.4" ry="4.2" fill="#d0c0a0" opacity=".5"/><ellipse cx="16.5" cy="130.5" rx="6.3" ry="1.6" fill="#6a604a" opacity=".5"/><ellipse cx="127.1" cy="164.5" rx="8.4" ry="1.8" fill="#6a604a" opacity=".5"/><ellipse cx="122.0" cy="165.7" rx="8.5" ry="2.5" fill="#7a6e54" opacity=".5"/><ellipse cx="3.2" cy="134.5" rx="8.4" ry="3.6" fill="#7a6e54" opacity=".5"/><ellipse cx="140.2" cy="175.5" rx="12.2" ry="2.9" fill="#7a6e54" opacity=".5"/><ellipse cx="95.2" cy="116.5" rx="10.0" ry="2.8" fill="#6a604a" opacity=".5"/><ellipse cx="53.4" cy="170.4" rx="11.5" ry="2.1" fill="#6a604a" opacity=".5"/><ellipse cx="88.5" cy="137.0" rx="10.2" ry="3.1" fill="#7a6e54" opacity=".5"/><ellipse cx="117.4" cy="192.2" rx="5.1" ry="3.0" fill="#d0c0a0" opacity=".5"/><ellipse cx="107.1" cy="180.0" rx="16.6" ry="3.3" fill="#5a5240" opacity=".5"/><ellipse cx="40.1" cy="189.5" rx="8.4" ry="2.1" fill="#c4b392" opacity=".5"/><ellipse cx="76.7" cy="122.8" rx="12.6" ry="1.7" fill="#5a5240" opacity=".5"/><ellipse cx="121.2" cy="164.2" rx="9.3" ry="2.7" fill="#d0c0a0" opacity=".5"/><ellipse cx="137.3" cy="173.6" rx="10.1" ry="3.4" fill="#7a6e54" opacity=".5"/><ellipse cx="31.7" cy="135.1" rx="15.8" ry="3.0" fill="#d0c0a0" opacity=".5"/><ellipse cx="151.3" cy="164.5" rx="16.3" ry="1.9" fill="#5a5240" opacity=".5"/><ellipse cx="116.2" cy="174.2" rx="12.8" ry="2.5" fill="#7a6e54" opacity=".5"/><ellipse cx="80.3" cy="183.4" rx="10.4" ry="3.2" fill="#7a6e54" opacity=".5"/><ellipse cx="26.1" cy="149.1" rx="14.3" ry="3.2" fill="#c4b392" opacity=".5"/><ellipse cx="51.4" cy="165.4" rx="13.4" ry="3.0" fill="#7a6e54" opacity=".5"/><ellipse cx="46.4" cy="170.3" rx="15.1" ry="2.0" fill="#c4b392" opacity=".5"/><ellipse cx="150.1" cy="171.9" rx="12.2" ry="2.5" fill="#c4b392" opacity=".5"/><ellipse cx="50.5" cy="129.1" rx="16.7" ry="3.7" fill="#6a604a" opacity=".5"/><path d="M0 150 q30 -8 60 0 q-30 14 -60 10z" fill="#4d4634" opacity=".5"/><path d="M100 170 q30 -10 54 -2 v28 h-70z" fill="#5a5039" opacity=".5"/><path d="M60 0 h9.500 l-1 70 l2 44 h-10 l1.500 -44z" fill="#5c5346"/><path d="M64 0 h3 l0 112 h-3z" fill="#77695a" opacity=".6"/><path d="M146 0 h6 l-8 40 l-12 72 h-7 l10 -70z" fill="#5a4e41"/><path d="M100 8 l5 0 l8 48 l-3.500 0z" fill="#5f5345"/><path d="M84 28 l32 24" stroke="#3e352b" stroke-width="1.300"/><path d="M38 0 l4 0 l-3 66 l-3 0z" fill="#6b5a48"/><path d="M48 10 l3 0 l-4 50 l-2 0z" fill="#6b5a48"/><path d="M27.299999999999997 124.6 l1.4249999999999998 47.5 l6.6499999999999995 0 l1.4249999999999998 -41.8 l1.4249999999999998 41.8 l6.6499999999999995 0 l1.4249999999999998 -47.5z" fill="#1b2038"/><rect x="27.775" y="170.2" width="8.075" height="5.699999999999999" rx="1.500" fill="#14151b"/><rect x="38.224999999999994" y="170.2" width="8.075" height="5.699999999999999" rx="1.500" fill="#14151b"/><path d="M24.449999999999996 81.85 q12.35 -6.6499999999999995 24.7 0 q4.75 2.8499999999999996 5.699999999999999 11.399999999999999 l1.9 22.799999999999997 l-5.699999999999999 2.8499999999999996 l-2.8499999999999996 -15.2 l0.95 26.599999999999998 l-24.7 0 l0.95 -26.599999999999998 l-2.8499999999999996 15.2 l-5.699999999999999 -2.8499999999999996 l1.9 -22.799999999999997 q0.95 -8.549999999999999 5.699999999999999 -11.399999999999999z" fill="#1b2038"/><path d="M24.449999999999996 94.2 h24.7" stroke="#cdd98c" stroke-width="2.28"/><path d="M24.449999999999996 97.525 h24.7" stroke="#8f9aa0" stroke-width="0.95"/><path d="M17.799999999999997 105.6 h6.175 M49.625 105.6 h6.175" stroke="#cdd98c" stroke-width="2.09"/><path d="M24.449999999999996 128.4 h24.7" stroke="#cdd98c" stroke-width="1.9"/><path d="M28.25 161.64999999999998 h7.6 M38.224999999999994 161.64999999999998 h7.6" stroke="#cdd98c" stroke-width="2.09"/><ellipse cx="36.8" cy="74.25" rx="4.56" ry="5.225" fill="#d9b59a"/><path d="M30.15 70.925 q0 -8.075 6.6499999999999995 -8.075 q6.6499999999999995 0 6.6499999999999995 8.075 q-6.6499999999999995 1.71 -13.299999999999999 0z" fill="#f4f5f3"/><path d="M30.15 77.1 q6.6499999999999995 6.6499999999999995 13.299999999999999 0 l1.4249999999999998 5.699999999999999 h-16.15z" fill="#1b2038"/><path d="M102.3 118.0 l1.5 50.0 l7.0 0 l1.5 -44.0 l1.5 44.0 l7.0 0 l1.5 -50.0z" fill="#1b2038"/><rect x="102.8" y="166.0" width="8.5" height="6.0" rx="1.500" fill="#14151b"/><rect x="113.8" y="166.0" width="8.5" height="6.0" rx="1.500" fill="#14151b"/><path d="M99.3 73.0 q13.0 -7.0 26.0 0 q5.0 3.0 6.0 12.0 l2.0 24.0 l-6.0 3.0 l-3.0 -16.0 l1.0 28.0 l-26.0 0 l1.0 -28.0 l-3.0 16.0 l-6.0 -3.0 l2.0 -24.0 q1.0 -9.0 6.0 -12.0z" fill="#1b2038"/><path d="M99.3 86.0 h26.0" stroke="#cdd98c" stroke-width="2.4"/><path d="M99.3 89.5 h26.0" stroke="#8f9aa0" stroke-width="1.0"/><path d="M92.3 98.0 h6.5 M125.8 98.0 h6.5" stroke="#cdd98c" stroke-width="2.2"/><path d="M99.3 122.0 h26.0" stroke="#cdd98c" stroke-width="2.0"/><path d="M103.3 157.0 h8.0 M113.8 157.0 h8.0" stroke="#cdd98c" stroke-width="2.2"/><ellipse cx="112.3" cy="65.0" rx="4.8" ry="5.5" fill="#d9b59a"/><path d="M105.3 61.5 q0 -8.5 7.0 -8.5 q7.0 0 7.0 8.5 q-7.0 1.8 -14.0 0z" fill="#f4f5f3"/><path d="M105.3 68.0 q7.0 7.0 14.0 0 l1.5 6.0 h-17.0z" fill="#1b2038"/><rect x="36.800" y="116.500" width="72.500" height="59.500" fill="#f4f2ec"/><rect x="36.800" y="116.500" width="47" height="50.500" fill="#121110"/><rect x="83.500" y="116.500" width="25.800" height="50.500" fill="#e8572a"/><path d="M46 158 q-4 -8 2 -14 q1 4 4 3 q-3 -10 5 -16 q0 6 4 7 q0 -8 7 -12 q-2 7 3 11 q3 -3 2 -7 q6 7 2 15 q3 -1 4 -4 q4 8 -3 17z" fill="#fdb73b"/><path d="M54 157 q-3 -7 3 -11 q1 4 4 2 q1 -5 5 -7 q0 6 4 8 q3 4 -1 8z" fill="#e8501c"/><path d="M58 157 l2 -7 l4 -1 l2 -4 l1 4 l-1 8z" fill="#121110"/><rect x="83.500" y="129" width="25.800" height="9" fill="#faf7f2"/><circle cx="84.500" cy="133.500" r="3.200" fill="#fff" stroke="#d8232a" stroke-width=".9"/><path d="M87 141.0 h19" stroke="#f6b89c" stroke-width=".8"/><path d="M87 144.1 h16" stroke="#f6b89c" stroke-width=".8"/><path d="M87 147.2 h13" stroke="#f6b89c" stroke-width=".8"/><path d="M87 150.3 h19" stroke="#f6b89c" stroke-width=".8"/><path d="M87 153.4 h16" stroke="#f6b89c" stroke-width=".8"/><path d="M87 156.5 h13" stroke="#f6b89c" stroke-width=".8"/><path d="M87 159.6 h19" stroke="#f6b89c" stroke-width=".8"/><path d="M87 162.7 h16" stroke="#f6b89c" stroke-width=".8"/><path d="M87 120 h19 M87 122.500 h16 M87 125 h12" stroke="#ffe0d0" stroke-width=".8"/><circle cx="88" cy="171.500" r="1.300" fill="#5a9a3a"/><circle cx="94" cy="171.500" r="1.300" fill="#4b8a8f"/><circle cx="100" cy="171.500" r="1.300" fill="#e0472a"/><circle cx="105.500" cy="171.500" r="1.300" fill="#2f5f2a"/><path d="M40 171 h34 M40 173.200 h30" stroke="#777" stroke-width=".6"/><ellipse cx="42" cy="118" rx="2.400" ry="2" fill="#d6ad90"/><ellipse cx="95" cy="117.500" rx="2.400" ry="2" fill="#d6ad90"/><ellipse cx="109" cy="121" rx="2" ry="2.400" fill="#d6ad90"/></g></svg>
<span class="t" style="left:980.5px;top:521.8px;font:700 3.6px/4.3px 'Liberation Sans', sans-serif;color:#e4532a;transform:scaleX(0.766);">ВРЯТУЄМО ЛІСИ ВІД ПОЖЕЖ!</span>
<span class="t" style="left:993.0px;top:561.8px;font:700 2.4px/2.9px 'Liberation Sans', sans-serif;color:#f2f2f2;transform:scaleX(1.056);">Палиш ліс –</span>
<span class="t" style="left:982.0px;top:564.8px;font:700 2.4px/2.9px 'Liberation Sans', sans-serif;color:#f2f2f2;transform:scaleX(1.097);">допомагаєш ворогам України!</span>
<!-- sec_task -->
<div class="b" style="left:0.0px;top:687.8px;width:1280.0px;height:32.2px;background:linear-gradient(90deg,#1b3138 0%,#1a2f36 45%,#17262d 75%,#141f25 100%);"></div>
<svg class="b" style="left:0.0px;top:688.0px;" width="1280" height="32" viewBox="0 0 1280 32"><path d="M13.500 12.799999999999955 l7 -2.600 l1.800 4.600 l3.200 -1.600" fill="none" stroke="#e8541c" stroke-width="3.200" stroke-linejoin="miter"/><path d="M29 11.799999999999955 v8.200 h-8.200 z" fill="#ec5a1e"/><circle cx="14" cy="12.600000000000023" r="1.500" fill="#d8343c"/><rect x="440.5" y="8.5" width="7.6" height="7.6" fill="#45b6f5"/><rect x="440.5" y="17.2" width="7.6" height="7.6" fill="#45b6f5"/><rect x="449.2" y="8.5" width="7.6" height="7.6" fill="#45b6f5"/><rect x="449.2" y="17.2" width="7.6" height="7.6" fill="#45b6f5"/><rect x="465.5" y="5.5" width="145.5" height="22" rx="11" fill="#3d4c54" stroke="#55646c" stroke-width=".8"/><circle cx="477.5" cy="15.799999999999955" r="3.6" fill="none" stroke="#e8e8e8" stroke-width="1.3"/><path d="M480 18.5 l3 3" stroke="#e8e8e8" stroke-width="1.4"/><rect x="624" y="9" width="11" height="10" rx="1" fill="#9aa3a8"/><rect x="620" y="12.5" width="11.5" height="10.5" rx="1" fill="#e9ecee"/><rect x="649" y="9" width="16" height="15" rx="4" fill="#5b5fc7"/><rect x="653" y="13" width="7" height="7" rx="1.5" fill="#e6e7fb"/><path d="M660 15 l3 -1.8 v6.6 l-3 -1.8z" fill="#e6e7fb"/><circle cx="687" cy="16" r="8.6" fill="#e2443a"/><path d="M687 16 L679.6 20.299999999999955 A8.6 8.6 0 0 0 691.3 23.399999999999977 Z" fill="#2fa24f"/><path d="M687 16 L691.3 23.399999999999977 A8.6 8.6 0 0 0 694.4 11.700000000000045 Z" fill="#f5c21b"/><circle cx="687" cy="16" r="3.7" fill="#3f7fe8" stroke="#fff" stroke-width="1.3"/><circle cx="690" cy="10.5" r="4.2" fill="#e9b48a"/><path d="M686 10 q4 -6 8.5 0 q-4 -2.5 -8.500 0z" fill="#d8762b"/><ellipse cx="716" cy="16" rx="8.3" ry="8.6" fill="#e3262d"/><ellipse cx="716" cy="16" rx="3.6" ry="6" fill="#1a2a31"/><path d="M737.5 10 h6 l1.5 2 h9 v11 h-16.5 z" fill="#f6c343"/><rect x="737.500" y="15" width="16.5" height="8" fill="#f9d264"/><rect x="741" y="18" width="9.5" height="5" fill="#3b8fd9"/><rect x="767" y="8.5" width="16" height="15.5" rx="1.5" fill="#2f6fc4"/><rect x="767" y="8.5" width="16" height="5" fill="#4d9ae6"/><rect x="764.5" y="12" width="10" height="9.5" rx="1" fill="#1d4f9c"/><circle cx="803" cy="16" r="8.8" fill="#2d7cf0"/><rect x="817" y="2.5" width="29" height="28" rx="3" fill="#33454d"/><rect x="823" y="9" width="17" height="15.5" rx="2.5" fill="#2aa1ec"/><path d="M823 12.5 h17 v-1.500 q0 -2 -2 -2 h-13 q-2 0 -2 2z" fill="#13456f"/><path d="M829.5 14.5 v7 l5.5 -3.500z" fill="#fff"/><rect x="685" y="28" width="4" height="1.600" rx=".8" fill="#8d97a0"/><rect x="744" y="28" width="4" height="1.600" rx=".8" fill="#8d97a0"/><rect x="773" y="28" width="4" height="1.600" rx=".8" fill="#8d97a0"/><rect x="801" y="28" width="4" height="1.600" rx=".8" fill="#8d97a0"/><rect x="825" y="28" width="12" height="1.800" rx=".9" fill="#49b3f5"/><path d="M1067.500 18 l3.5 -3.5 l3.5 3.5" fill="none" stroke="#e8e8e8" stroke-width="1.200"/><path d="M1088 18.799999999999955 h8 a2.300 2.300 0 0 0 0 -4.600 a3.300 3.300 0 0 0 -6.200 -.7 a2.700 2.700 0 0 0 -1.800 5.300z" fill="#f0f0f0"/><path d="M1110 14 a5 5 0 0 1 8.500 -1.500 m.5 -2.500 v3 h-3 M1120 18 a5 5 0 0 1 -8.500 1.500 m-.5 2.500 v-3 h3" fill="none" stroke="#eee" stroke-width="1.200"/><circle cx="1119" cy="20.5" r="2.400" fill="#f39a2d"/><rect x="1158.500" y="10.5" width="10.5" height="8" fill="none" stroke="#eee" stroke-width="1.100"/><path d="M1161 21.5 h5.500 M1170.500 9 v11" stroke="#eee" stroke-width="1.100"/><path d="M1176 14.5 h2.500 l3 -2.800 v9.600 l-3 -2.800 h-2.500z" fill="none" stroke="#eee" stroke-width="1"/><path d="M1183.500 14 q1.800 2.500 0 5 M1185.800 12.5 q2.800 4 0 8" fill="none" stroke="#eee" stroke-width=".9"/><rect x="1192" y="13" width="9.500" height="6.200" rx="1.500" fill="none" stroke="#eee" stroke-width="1"/><rect x="1202" y="14.799999999999955" width="1.300" height="2.600" fill="#eee"/><path d="M1192.500 12 l1.800 -1.800 l1.500 1.800" fill="none" stroke="#eee" stroke-width=".9"/><path d="M1257.500 21 q1.500 -1.500 1.500 -5 a3.500 3.500 0 0 1 7 0 q0 3.500 1.500 5z" fill="#5fcfe2"/><circle cx="1262.500" cy="23" r="1.400" fill="#5fcfe2"/></svg>
<span class="t" style="left:33.5px;top:695.1px;font:700 7.2px/8.6px 'Liberation Sans', sans-serif;color:#f4f4f4;transform:scaleX(1.021);">NASDAQ</span>
<span class="t" style="left:34.0px;top:706.2px;font:700 7px/8.4px 'Liberation Sans', sans-serif;color:#f4688c;transform:scaleX(1.037);">-1.50%</span>
<span class="t" style="left:490.0px;top:695.2px;font:400 15px/18.0px 'Liberation Sans', sans-serif;color:#f2f2f2;transform:scaleX(0.995);">Пошук</span>
<span class="t" style="left:797.0px;top:698.2px;font:700 8.5px/10.2px 'Liberation Sans', sans-serif;color:#fff;transform:scaleX(1.016);">zm</span>
<span class="t" style="left:765.5px;top:699.5px;font:700 8.5px/10.2px 'Liberation Sans', sans-serif;color:#fff;">W</span>
<span class="t" style="left:1132.0px;top:699.8px;font:700 7.6px/9.1px 'Liberation Sans', sans-serif;color:#f4f4f4;transform:scaleX(0.941);">ENG</span>
<span class="t" style="left:1233.5px;top:692.9px;font:400 8.3px/10.0px 'Liberation Sans', sans-serif;color:#f4f4f4;transform:scaleX(0.891);">16:07</span>
<span class="t" style="left:1213.0px;top:704.9px;font:400 8.3px/10.0px 'Liberation Sans', sans-serif;color:#f4f4f4;transform:scaleX(0.939);">21.12.2023</span>
</body></html>
